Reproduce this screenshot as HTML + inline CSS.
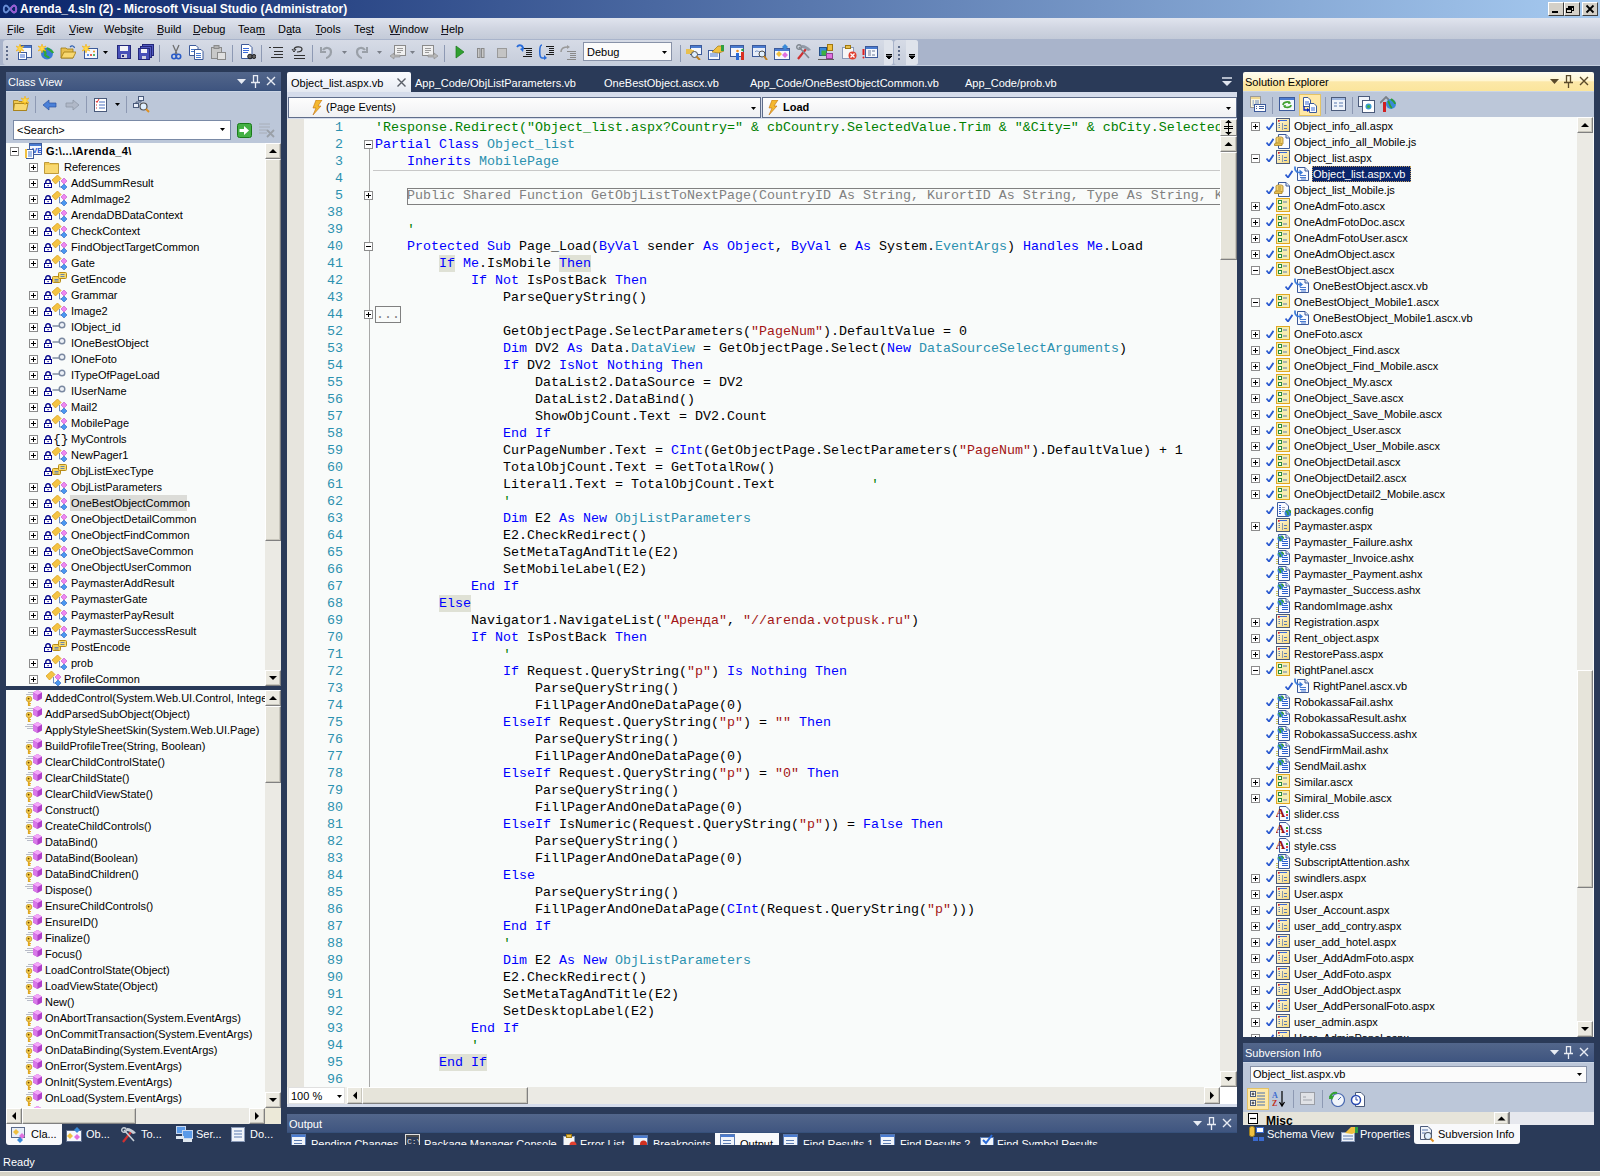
<!DOCTYPE html><html><head><meta charset="utf-8"><title>VS</title><style>
*{margin:0;padding:0;box-sizing:border-box}
html,body{width:1600px;height:1176px;overflow:hidden;background:#2a3a58;font-family:"Liberation Sans",sans-serif;font-size:11px;color:#000}
div,svg{position:absolute}
.t{white-space:pre;line-height:13px;font-size:11px}
.m{white-space:pre;font-family:"Liberation Mono",monospace;font-size:13.333px;line-height:17px}
.kw{color:#0000ff}.ty{color:#2b91af}.st{color:#a31515}.cm{color:#008000}.gr{color:#808080}
.sb{background:#ece9d8}
.btn{background:#e4e2d8;border-top:1px solid #fff;border-left:1px solid #fff;border-right:1px solid #716f64;border-bottom:1px solid #716f64}
</style></head><body><div style="left:0px;top:0px;width:1600px;height:18px;background:linear-gradient(90deg,#0a246a 0%,#a6caf0 100%)"></div>
<svg style="left:2px;top:3px" width="16" height="12" viewBox="0 0 16 12"><path d="M4 2.5 C1 2.5 1 9.5 4 9.5 C6 9.5 7 6 8 6 C9 6 10 9.5 12 9.5 C15 9.5 15 2.5 12 2.5 C10 2.5 9 6 8 6 C7 6 6 2.5 4 2.5Z" fill="none" stroke="#6a8fd8" stroke-width="1.8"/><path d="M8 6 C9 6 10 9.5 12 9.5 C15 9.5 15 2.5 12 2.5 C10 2.5 9 6 8 6" fill="none" stroke="#9b59d0" stroke-width="1.8"/></svg>
<div class="t" style="left:20px;top:2px;color:#fff;font-weight:bold;font-size:12px;line-height:14px">Arenda_4.sln (2) - Microsoft Visual Studio (Administrator)</div>
<div style="left:1548px;top:2px;width:16px;height:14px;background:#d4d0c8;border-top:1px solid #fff;border-left:1px solid #fff;border-right:1px solid #404040;border-bottom:1px solid #404040"></div>
<div style="left:1564px;top:2px;width:16px;height:14px;background:#d4d0c8;border-top:1px solid #fff;border-left:1px solid #fff;border-right:1px solid #404040;border-bottom:1px solid #404040"></div>
<div style="left:1582px;top:2px;width:16px;height:14px;background:#d4d0c8;border-top:1px solid #fff;border-left:1px solid #fff;border-right:1px solid #404040;border-bottom:1px solid #404040"></div>
<div style="left:1552px;top:11px;width:6px;height:2px;background:#000"></div>
<div style="left:1568px;top:6px;width:6px;height:5px;border:1px solid #000;border-top-width:2px"></div>
<div style="left:1566px;top:8px;width:6px;height:5px;border:1px solid #000;border-top-width:2px;background:#d4d0c8"></div>
<svg style="left:1585px;top:4px" width="10" height="10" viewBox="0 0 10 10"><path d="M1.5 1.5L8.5 8.5M8.5 1.5L1.5 8.5" stroke="#000" stroke-width="1.8"/></svg>
<div style="left:0px;top:18px;width:1600px;height:21px;background:linear-gradient(#e0e4ee,#d0d5e1 50%,#c3cad8)"></div>
<div class="t" style="left:7px;top:23px;color:#000">File</div>
<div class="t" style="left:36px;top:23px;color:#000">Edit</div>
<div class="t" style="left:69px;top:23px;color:#000">View</div>
<div class="t" style="left:104px;top:23px;color:#000">Website</div>
<div class="t" style="left:157px;top:23px;color:#000">Build</div>
<div class="t" style="left:193px;top:23px;color:#000">Debug</div>
<div class="t" style="left:238px;top:23px;color:#000">Team</div>
<div class="t" style="left:278px;top:23px;color:#000">Data</div>
<div class="t" style="left:315px;top:23px;color:#000">Tools</div>
<div class="t" style="left:354px;top:23px;color:#000">Test</div>
<div class="t" style="left:389px;top:23px;color:#000">Window</div>
<div class="t" style="left:441px;top:23px;color:#000">Help</div>
<div style="left:7px;top:34px;width:5px;height:1px;background:#1a1a2a"></div>
<div style="left:37px;top:34px;width:6px;height:1px;background:#1a1a2a"></div>
<div style="left:69px;top:34px;width:6px;height:1px;background:#1a1a2a"></div>
<div style="left:127px;top:34px;width:5px;height:1px;background:#1a1a2a"></div>
<div style="left:157px;top:34px;width:6px;height:1px;background:#1a1a2a"></div>
<div style="left:193px;top:34px;width:7px;height:1px;background:#1a1a2a"></div>
<div style="left:257px;top:34px;width:8px;height:1px;background:#1a1a2a"></div>
<div style="left:287px;top:34px;width:5px;height:1px;background:#1a1a2a"></div>
<div style="left:316px;top:34px;width:6px;height:1px;background:#1a1a2a"></div>
<div style="left:367px;top:34px;width:5px;height:1px;background:#1a1a2a"></div>
<div style="left:390px;top:34px;width:10px;height:1px;background:#1a1a2a"></div>
<div style="left:441px;top:34px;width:7px;height:1px;background:#1a1a2a"></div>
<div style="left:0px;top:39px;width:1600px;height:27px;background:#a9b4cb;border-bottom:1px solid #c4cedf"></div>
<div style="left:3px;top:40px;width:890px;height:25px;background:linear-gradient(#d6dbe6,#c6cddb);border-radius:3px"></div>
<div style="left:894px;top:40px;width:24px;height:25px;background:linear-gradient(#d6dbe6,#c6cddb);border-radius:3px"></div>
<div style="left:6px;top:46px;width:2px;height:2px;background:#5d6b89"></div>
<div style="left:6px;top:50px;width:2px;height:2px;background:#5d6b89"></div>
<div style="left:6px;top:54px;width:2px;height:2px;background:#5d6b89"></div>
<div style="left:6px;top:58px;width:2px;height:2px;background:#5d6b89"></div>
<svg style="left:16px;top:44px;" width="16" height="16" viewBox="0 0 16 16"><rect x="4.5" y="1.5" width="11" height="12" fill="#f4f7fc" stroke="#3c5a9a"/><rect x="5" y="2" width="10" height="2" fill="#4a7bd0"/><rect x="2.5" y="8.5" width="8" height="7" fill="#fff" stroke="#3c5a9a"/><path d="M4 11H9M4 13H9" stroke="#3c6ad0"/><g transform="translate(0,0)"><path d="M4 0L5 3L8 2L6 4.5L8 7L5 6L4 9L3 6L0 7L2 4.5L0 2L3 3Z" fill="#ffd84a" stroke="#f0a800" stroke-width="0.5"/></g></svg>
<svg style="left:38px;top:44px;" width="16" height="16" viewBox="0 0 16 16"><circle cx="9" cy="9.5" r="6" fill="#3a7bd5"/><path d="M5 6C7 7 8 9 7 11C8 13 10 12 11 14M9 4C11 6 14 6 15 9" stroke="#2ea83a" stroke-width="2.2" fill="none"/><path d="M4 0L5 3L8 2L6 4.5L8 7L5 6L4 9L3 6L0 7L2 4.5L0 2L3 3Z" fill="#ffd84a" stroke="#f0a800" stroke-width="0.5"/></svg>
<svg style="left:60px;top:44px;" width="16" height="16" viewBox="0 0 16 16"><path d="M1 4H6L7 5H13V14H1Z" fill="#e8c050" stroke="#a07810" stroke-width="0.8"/><path d="M1 14L4 8H16L13 14Z" fill="#f8d870" stroke="#a07810" stroke-width="0.8"/><path d="M10 3C12 1 14 2 14.5 4" stroke="#3060b0" fill="none" stroke-width="1.2"/></svg>
<svg style="left:82px;top:44px;" width="16" height="16" viewBox="0 0 16 16"><rect x="2.5" y="4.5" width="13" height="10" fill="#f6f8fc" stroke="#3c5a9a"/><circle cx="6" cy="11" r="1" fill="#3070e0"/><circle cx="9" cy="11" r="1" fill="#e03020"/><circle cx="12" cy="11" r="1" fill="#20a040"/><circle cx="12" cy="7.5" r="1" fill="#f09020"/><path d="M4 0L5 3L8 2L6 4.5L8 7L5 6L4 9L3 6L0 7L2 4.5L0 2L3 3Z" fill="#ffd84a" stroke="#f0a800" stroke-width="0.5"/></svg>
<svg style="left:103px;top:51px;" width="5" height="3" viewBox="0 0 5 3"><path d="M0 0H5L2.5 3Z" fill="#000"/></svg>
<svg style="left:116px;top:44px;" width="16" height="16" viewBox="0 0 16 16"><rect x="1.5" y="1.5" width="13" height="13" fill="#4850b8" stroke="#24287a"/><rect x="4" y="2" width="8" height="5" fill="#f4f4f8"/><rect x="5" y="10" width="6" height="4" fill="#d0d0e0"/><rect x="6" y="11" width="2" height="2" fill="#24287a"/></svg>
<svg style="left:138px;top:44px;" width="16" height="16" viewBox="0 0 16 16"><rect x="4.5" y="0.5" width="11" height="11" fill="#5058c0" stroke="#24287a"/><rect x="2.5" y="2.5" width="11" height="11" fill="#5058c0" stroke="#24287a"/><rect x="0.5" y="4.5" width="11" height="11" fill="#4850b8" stroke="#24287a"/><rect x="3" y="5" width="6" height="4" fill="#f4f4f8"/><rect x="4" y="12" width="4" height="3" fill="#d0d0e0"/></svg>
<div style="left:159px;top:45px;width:1px;height:17px;background:#8d99b3"></div>
<svg style="left:168px;top:44px;" width="16" height="16" viewBox="0 0 16 16"><path d="M5 1L9 10M11 1L7 10" stroke="#707070" stroke-width="1.3"/><circle cx="6" cy="12.5" r="2.2" fill="none" stroke="#2a5cc8" stroke-width="1.6"/><circle cx="10.5" cy="12.5" r="2.2" fill="none" stroke="#2a5cc8" stroke-width="1.6"/></svg>
<svg style="left:188px;top:44px;" width="16" height="16" viewBox="0 0 16 16"><path d="M1.5 1.5H8L10 3.5V11.5H1.5Z" fill="#fff" stroke="#3c5a9a"/><path d="M3 5.5H8M3 7.5H8" stroke="#4a7bd0"/><path d="M6.5 5.5H13L15 7.5V15.5H6.5Z" fill="#fff" stroke="#3c5a9a"/><path d="M8 9.5H13M8 11.5H13M8 13.5H13" stroke="#4a7bd0"/></svg>
<svg style="left:210px;top:44px;" width="16" height="16" viewBox="0 0 16 16"><rect x="1.5" y="3.5" width="10" height="11" fill="#c8c8c8" stroke="#8a8a8a"/><rect x="4" y="1.5" width="5" height="3" fill="#b0b0b0" stroke="#8a8a8a"/><rect x="7.5" y="8.5" width="8" height="7" fill="#e0e0e0" stroke="#8a8a8a"/></svg>
<div style="left:232px;top:45px;width:1px;height:17px;background:#8d99b3"></div>
<svg style="left:240px;top:44px;" width="16" height="16" viewBox="0 0 16 16"><path d="M1.5 0.5H9L12 3.5V14.5H1.5Z" fill="#fff" stroke="#3c5a9a"/><path d="M3 4.5H9M3 6.5H9M3 8.5H8" stroke="#3a6ad8"/><circle cx="10" cy="12.5" r="2.3" fill="#606060" stroke="#202020"/><circle cx="14" cy="12.5" r="2" fill="#606060" stroke="#202020"/></svg>
<div style="left:261px;top:45px;width:1px;height:17px;background:#8d99b3"></div>
<svg style="left:268px;top:44px;" width="16" height="16" viewBox="0 0 16 16"><path d="M1 3.5H3M5 3.5H15M6 7.5H15M6 10.5H15M3 13.5H15" stroke="#303030" stroke-width="1"/></svg>
<svg style="left:290px;top:44px;" width="16" height="16" viewBox="0 0 16 16"><path d="M4 6C4 2 12 2 12 5C12 8 8 8 7 8" fill="none" stroke="#303030" stroke-width="1.2"/><path d="M2 5L4 8L6 5" fill="none" stroke="#303030"/><path d="M4 11.5H15M4 14.5H15" stroke="#303030" stroke-width="1"/></svg>
<div style="left:312px;top:45px;width:1px;height:17px;background:#8d99b3"></div>
<svg style="left:320px;top:44px;" width="14" height="16" viewBox="0 0 14 16"><path d="M3 6C5 3 11 3 11 8C11 12 7 14 6 14" fill="none" stroke="#9aa0a8" stroke-width="2.2"/><path d="M1 3V8H6" fill="none" stroke="#9aa0a8" stroke-width="2"/></svg>
<svg style="left:342px;top:51px;" width="5" height="3" viewBox="0 0 5 3"><path d="M0 0H5L2.5 3Z" fill="#7a7f88"/></svg>
<svg style="left:354px;top:44px;" width="14" height="16" viewBox="0 0 14 16"><path d="M11 6C9 3 3 3 3 8C3 12 7 14 8 14" fill="none" stroke="#9aa0a8" stroke-width="2.2"/><path d="M13 3V8H8" fill="none" stroke="#9aa0a8" stroke-width="2"/></svg>
<svg style="left:377px;top:51px;" width="5" height="3" viewBox="0 0 5 3"><path d="M0 0H5L2.5 3Z" fill="#7a7f88"/></svg>
<svg style="left:389px;top:44px;" width="18" height="16" viewBox="0 0 18 16"><rect x="5.5" y="1.5" width="11" height="10" fill="#f0f0f0" stroke="#8a8a8a"/><path d="M8 4.5H14M8 6.5H14M8 8.5H12" stroke="#9a9a9a"/><path d="M1 12L5 9V11H11V13H5V15Z" fill="#b8b8b8" stroke="#8a8a8a" stroke-width="0.6"/></svg>
<svg style="left:410px;top:51px;" width="5" height="3" viewBox="0 0 5 3"><path d="M0 0H5L2.5 3Z" fill="#7a7f88"/></svg>
<svg style="left:421px;top:44px;" width="18" height="16" viewBox="0 0 18 16"><rect x="1.5" y="1.5" width="11" height="10" fill="#f0f0f0" stroke="#8a8a8a"/><path d="M4 4.5H10M4 6.5H10M4 8.5H8" stroke="#9a9a9a"/><path d="M17 12L13 9V11H7V13H13V15Z" fill="#b8b8b8" stroke="#8a8a8a" stroke-width="0.6"/></svg>
<div style="left:444px;top:45px;width:1px;height:17px;background:#8d99b3"></div>
<svg style="left:455px;top:44px;" width="10" height="16" viewBox="0 0 10 16"><path d="M1 2L9 8L1 14Z" fill="#30a030" stroke="#1a7a1a" stroke-width="0.7"/></svg>
<svg style="left:476px;top:44px;" width="10" height="16" viewBox="0 0 10 16"><rect x="1.5" y="4.5" width="2.5" height="9" fill="#c8c8c8" stroke="#8a8a8a"/><rect x="5.5" y="4.5" width="2.5" height="9" fill="#c8c8c8" stroke="#8a8a8a"/></svg>
<svg style="left:496px;top:44px;" width="12" height="16" viewBox="0 0 12 16"><rect x="1.5" y="4.5" width="9" height="9" fill="#c4c4c4" stroke="#9a9a9a"/></svg>
<svg style="left:516px;top:44px;" width="17" height="16" viewBox="0 0 17 16"><path d="M7 4.5H16M10 6.5H16M10 8.5H16M10 10.5H16M7 12.5H16" stroke="#1a1a1a" stroke-width="1"/><path d="M1 3C3 0 7 1 7 5" fill="none" stroke="#2a6cd8" stroke-width="1.8"/><path d="M4 5L7 8L8 3" fill="#2a6cd8"/></svg>
<svg style="left:538px;top:44px;" width="17" height="16" viewBox="0 0 17 16"><path d="M8 2.5H16M11 4.5H16M11 6.5H16M11 8.5H16M8 10.5H16" stroke="#1a1a1a" stroke-width="1"/><path d="M4 1C1 1 1 14 4 14H7" fill="none" stroke="#2a6cd8" stroke-width="1.6"/><path d="M6 11L9 14L6 16Z" fill="#2a6cd8"/></svg>
<svg style="left:560px;top:44px;" width="17" height="16" viewBox="0 0 17 16"><path d="M7 7.5H16M10 9.5H16M10 11.5H16M10 13.5H16M7 15.5H16" stroke="#8a8a8a" stroke-width="1"/><path d="M1 8C1 4 4 3 8 3" fill="none" stroke="#9a9a9a" stroke-width="1.6"/><path d="M7 1L10 3L7 5Z" fill="#9a9a9a"/></svg>
<div style="left:583px;top:42px;width:89px;height:19px;background:#fbfbfb;border:1px solid #8892a8"></div>
<div class="t" style="left:587px;top:46px;">Debug</div>
<svg style="left:662px;top:51px;" width="5" height="3" viewBox="0 0 5 3"><path d="M0 0H5L2.5 3Z" fill="#000"/></svg>
<div style="left:680px;top:45px;width:1px;height:17px;background:#8d99b3"></div>
<svg style="left:686px;top:44px;" width="16" height="16" viewBox="0 0 16 16"><rect x="4.5" y="1.5" width="11" height="9" fill="#f4f7fc" stroke="#3c5a9a"/><rect x="5" y="2" width="10" height="2" fill="#4a7bd0"/><path d="M0 5H5L6 6H8V10H0Z" fill="#e8c050"/><circle cx="8.5" cy="10.5" r="3" fill="#dfefff" stroke="#505050"/><path d="M10.5 12.5L14 16" stroke="#c08020" stroke-width="2"/></svg>
<svg style="left:708px;top:44px;" width="16" height="16" viewBox="0 0 16 16"><rect x="0.5" y="6.5" width="11" height="9" fill="#f6f8fc" stroke="#3c5a9a"/><path d="M2 10H10M2 12H10" stroke="#4a7bd0"/><path d="M4 8L10 2H16V7L11 9Z" fill="#f0c040" stroke="#a07810" stroke-width="0.7"/><rect x="13" y="1" width="3" height="6" fill="#30a040"/></svg>
<svg style="left:730px;top:44px;" width="16" height="16" viewBox="0 0 16 16"><rect x="0.5" y="1.5" width="13" height="11" fill="#f6f8fc" stroke="#3c5a9a"/><rect x="1" y="2" width="12" height="2" fill="#4a7bd0"/><rect x="6" y="9" width="3" height="7" fill="#2a6cd8"/><rect x="11" y="8" width="3" height="8" fill="#d83020"/><circle cx="7.5" cy="7" r="1.3" fill="#f09020"/><circle cx="12.5" cy="6" r="1.3" fill="#30a040"/></svg>
<svg style="left:752px;top:44px;" width="16" height="16" viewBox="0 0 16 16"><rect x="0.5" y="1.5" width="13" height="11" fill="#e8eef8" stroke="#3c5a9a"/><rect x="1" y="2" width="12" height="2" fill="#4a7bd0"/><path d="M3 8C5 5 8 10 11 7" stroke="#6a8ac0" fill="none"/><circle cx="10" cy="10" r="3" fill="#dfefff" stroke="#505050"/><path d="M12 12L15 16" stroke="#c08020" stroke-width="2"/></svg>
<svg style="left:774px;top:44px;" width="16" height="16" viewBox="0 0 16 16"><rect x="0.5" y="4.5" width="15" height="11" fill="#f6f8fc" stroke="#3c5a9a"/><rect x="1" y="5" width="14" height="2" fill="#4a7bd0"/><path d="M5 7L8 10L5 13L2 10Z" fill="#f0c040"/><path d="M11 8L14 11L11 14L8 11Z" fill="#e070e0"/><path d="M11 0L14 3L11 6L8 3Z" fill="#3a8ad8"/></svg>
<svg style="left:796px;top:44px;" width="16" height="16" viewBox="0 0 16 16"><path d="M2 15L10 5" stroke="#d03030" stroke-width="2.2"/><path d="M3 3L13 14" stroke="#808890" stroke-width="1.6"/><path d="M6 1C9 1 13 3 15 6L12 7C10 5 8 4 6 4Z" fill="#909aa8"/><circle cx="3" cy="3" r="2.3" fill="none" stroke="#808890" stroke-width="1.4"/></svg>
<svg style="left:818px;top:44px;" width="16" height="16" viewBox="0 0 16 16"><rect x="1.5" y="3.5" width="7" height="8" fill="#3a8ad8" stroke="#24508a"/><rect x="3.5" y="6.5" width="5" height="5" fill="#40b040"/><rect x="9.5" y="0.5" width="5" height="6" fill="#f0c040" stroke="#a07810"/><rect x="8.5" y="9.5" width="6" height="5" fill="#e070e0" stroke="#904090"/><rect x="0" y="15" width="16" height="1" fill="#606060"/></svg>
<svg style="left:841px;top:44px;" width="16" height="16" viewBox="0 0 16 16"><rect x="1.5" y="3.5" width="11" height="11" fill="#f6f6f6" stroke="#8a9ab8"/><rect x="4.5" y="1.5" width="5" height="3" fill="#e8c050" stroke="#a07810"/><circle cx="11.5" cy="11.5" r="4" fill="#e04030"/><path d="M9.5 9.5L13.5 13.5M13.5 9.5L9.5 13.5" stroke="#fff" stroke-width="1.3"/></svg>
<svg style="left:862px;top:44px;" width="16" height="16" viewBox="0 0 16 16"><rect x="3.5" y="2.5" width="12" height="11" fill="#f6f8fc" stroke="#3c5a9a"/><rect x="4" y="3" width="11" height="2" fill="#4a7bd0"/><path d="M6 7H9M10 7H13M6 9H9M6 11H9M10 11H13" stroke="#6a7a9a"/><path d="M1.5 5V11" stroke="#e02020" stroke-width="2"/><circle cx="1.5" cy="13.5" r="1" fill="#e02020"/></svg>
<div style="left:884px;top:40px;width:9px;height:25px;background:#dfe3eb;border-radius:0 3px 3px 0"></div>
<svg style="left:886px;top:54px;" width="6" height="5" viewBox="0 0 6 5"><path d="M0 0.5H6M0 2H6L3 5Z" stroke="#000" stroke-width="1" fill="#000"/></svg>
<div style="left:898px;top:46px;width:2px;height:2px;background:#5d6b89"></div>
<div style="left:898px;top:50px;width:2px;height:2px;background:#5d6b89"></div>
<div style="left:898px;top:54px;width:2px;height:2px;background:#5d6b89"></div>
<div style="left:898px;top:58px;width:2px;height:2px;background:#5d6b89"></div>
<div style="left:906px;top:40px;width:12px;height:25px;background:#dfe3eb;border-radius:0 3px 3px 0"></div>
<svg style="left:909px;top:54px;" width="6" height="5" viewBox="0 0 6 5"><path d="M0 0.5H6M0 2H6L3 5Z" stroke="#000" stroke-width="1" fill="#000"/></svg>
<div style="left:6px;top:72px;width:275px;height:19px;background:linear-gradient(#52668b,#475c84 60%,#3f5580);border-bottom:1px solid #36507a"></div>
<div class="t" style="left:8px;top:76px;color:#fff">Class View</div>
<svg style="left:237px;top:79px;" width="9" height="5" viewBox="0 0 9 5"><path d="M0 0H9L4.5 5Z" fill="#e8ecf4"/></svg>
<svg style="left:251px;top:75px;" width="9" height="13" viewBox="0 0 9 13"><path d="M2.5 0.5H6.5V7.5H2.5Z M0 7.5H9 M4.5 8V13" fill="none" stroke="#e8ecf4" stroke-width="1.3"/></svg>
<svg style="left:266px;top:76px;" width="10" height="10" viewBox="0 0 10 10"><path d="M1 1L9 9M9 1L1 9" stroke="#e8ecf4" stroke-width="1.4"/></svg>
<div style="left:6px;top:91px;width:275px;height:52px;background:#bcc7d9;border-top:1px solid #cbd5e5"></div>
<svg style="left:13px;top:96px;" width="16" height="16" viewBox="0 0 16 16"><path d="M0.5 4.5H5L6 5.5H13.5V14.5H0.5Z" fill="#f0c850" stroke="#a07810" stroke-width="0.8"/><path d="M0.5 14.5L1.5 7.5H15L13.5 14.5Z" fill="#f8d870" stroke="#a07810" stroke-width="0.8"/><g transform="translate(8,0)"><path d="M4 0L5 3L8 2L6 4.5L8 7L5 6L4 9L3 6L0 7L2 4.5L0 2L3 3Z" fill="#ffd84a" stroke="#f0a800" stroke-width="0.5"/></g></svg>
<div style="left:35px;top:96px;width:1px;height:17px;background:#8d99b3"></div>
<svg style="left:42px;top:99px;" width="16" height="12" viewBox="0 0 16 12"><path d="M1 6L7 1V4H14V8H7V11Z" fill="#4a80d8" stroke="#2a50a0" stroke-width="0.7"/></svg>
<svg style="left:65px;top:99px;" width="16" height="12" viewBox="0 0 16 12"><path d="M14 6L8 1V4H1V8H8V11Z" fill="#b0b8c8" stroke="#8a92a2" stroke-width="0.7"/></svg>
<div style="left:86px;top:96px;width:1px;height:17px;background:#8d99b3"></div>
<svg style="left:94px;top:97px;" width="14" height="16" viewBox="0 0 14 16"><rect x="0.5" y="1.5" width="12" height="13" fill="#fff" stroke="#4a5a7a"/><path d="M5 5H11M5 8H11M5 11H11" stroke="#4a70c0"/><path d="M2 4L3 5.5L5 2M2 8H3M2 11H3" stroke="#e03030" fill="none"/></svg>
<svg style="left:115px;top:103px;" width="5" height="3" viewBox="0 0 5 3"><path d="M0 0H5L2.5 3Z" fill="#000"/></svg>
<div style="left:126px;top:96px;width:1px;height:17px;background:#8d99b3"></div>
<svg style="left:133px;top:96px;" width="17" height="17" viewBox="0 0 17 17"><rect x="5.5" y="0.5" width="5" height="4" fill="#e8eef8" stroke="#4a5a7a"/><rect x="0.5" y="7.5" width="5" height="4" fill="#e8eef8" stroke="#4a5a7a"/><path d="M8 4.5V6H3V7.5" stroke="#4a5a7a" fill="none"/><circle cx="10.5" cy="10.5" r="3.5" fill="#dfefff" stroke="#505050" stroke-width="1.2"/><path d="M13 13L16 16" stroke="#e09020" stroke-width="2"/></svg>
<div style="left:13px;top:120px;width:218px;height:20px;background:#fff;border:1px solid #7a8aa6"></div>
<div class="t" style="left:17px;top:124px;">&lt;Search&gt;</div>
<svg style="left:220px;top:128px;" width="5" height="3" viewBox="0 0 5 3"><path d="M0 0H5L2.5 3Z" fill="#000"/></svg>
<svg style="left:237px;top:123px;" width="15" height="15" viewBox="0 0 15 15"><rect x="0.5" y="0.5" width="14" height="14" rx="2" fill="#44b044" stroke="#1a7a1a"/><path d="M2.5 6H7V3L12 7.5L7 12V9H2.5Z" fill="#fff"/></svg>
<svg style="left:258px;top:121px;" width="18" height="18" viewBox="0 0 18 18"><path d="M1 3H12M1 6H12M1 9H9M1 12H9" stroke="#a8aeb8" stroke-width="1"/><path d="M9 9L16 16M16 9L9 16" stroke="#9aa0a8" stroke-width="1.8"/></svg>
<div style="left:6px;top:143px;width:275px;height:543px;background:#f9fbfa"></div>
<svg style="left:10px;top:147px;" width="9" height="9" viewBox="0 0 9 9"><rect x="0.5" y="0.5" width="8" height="8" fill="#fff" stroke="#8c8c8c"/><path d="M2 4.5H7" stroke="#000"/></svg>
<svg style="left:25px;top:143px;" width="17" height="16" viewBox="0 0 17 16"><rect x="4.5" y="0.5" width="12" height="11" fill="#f4f7fc" stroke="#3c5a9a"/><rect x="5" y="1" width="11" height="2" fill="#4a7bd0"/><text x="7" y="10" font-family="Liberation Sans" font-size="8" font-weight="bold" fill="#2a5ad0">VB</text><rect x="1.5" y="6.5" width="7" height="9" fill="#fff" stroke="#3c5a9a"/><path d="M3 9H7M3 11H7M3 13H7" stroke="#4a7bd0"/><rect x="0" y="6" width="2" height="9" fill="#f0c040"/></svg>
<div class="t" style="left:46px;top:145px;font-weight:bold;letter-spacing:0.3px">G:\...\Arenda_4\</div>
<svg style="left:29px;top:163px;" width="9" height="9" viewBox="0 0 9 9"><rect x="0.5" y="0.5" width="8" height="8" fill="#fff" stroke="#8c8c8c"/><path d="M2 4.5H7" stroke="#000"/><path d="M4.5 2V7" stroke="#000"/></svg>
<svg style="left:44px;top:160px;" width="16" height="14" viewBox="0 0 16 14"><path d="M0.5 2.5H5L6 3.5H14.5V13.5H0.5Z" fill="#f0c850" stroke="#b08820" stroke-width="0.8"/><rect x="1" y="5" width="13" height="8" fill="#f8d870"/></svg>
<div class="t" style="left:64px;top:161px;">References</div>
<svg style="left:29px;top:179px;" width="9" height="9" viewBox="0 0 9 9"><rect x="0.5" y="0.5" width="8" height="8" fill="#fff" stroke="#8c8c8c"/><path d="M2 4.5H7" stroke="#000"/><path d="M4.5 2V7" stroke="#000"/></svg>
<svg style="left:44px;top:179px;" width="8" height="9" viewBox="0 0 8 9"><path d="M1.8 4.5V2.8C1.8 0 6.2 0 6.2 2.8V4.5" fill="none" stroke="#00008a" stroke-width="1.4"/><rect x="0.5" y="4.5" width="7" height="4" fill="#fff" stroke="#00008a"/><rect x="3.5" y="6" width="1.2" height="1.2" fill="#00008a"/></svg>
<svg style="left:52px;top:175px;" width="16" height="16" viewBox="0 0 16 16"><path d="M7.5 6V12H10" fill="none" stroke="#5a80c0" stroke-width="0.9"/><path d="M0 5L5.5 0L9 3.5L3.5 9Z" fill="#f4c444" stroke="#d89a10" stroke-width="0.7"/><path d="M12 3L15 6L12 9L9 6Z" fill="#ee88f0" stroke="#c050c8" stroke-width="0.6"/><path d="M12 9L15 12L12 15L9 12Z" fill="#4a98f0" stroke="#2a60c0" stroke-width="0.6"/></svg>
<div class="t" style="left:71px;top:177px;">AddSummResult</div>
<svg style="left:29px;top:195px;" width="9" height="9" viewBox="0 0 9 9"><rect x="0.5" y="0.5" width="8" height="8" fill="#fff" stroke="#8c8c8c"/><path d="M2 4.5H7" stroke="#000"/><path d="M4.5 2V7" stroke="#000"/></svg>
<svg style="left:44px;top:195px;" width="8" height="9" viewBox="0 0 8 9"><path d="M1.8 4.5V2.8C1.8 0 6.2 0 6.2 2.8V4.5" fill="none" stroke="#00008a" stroke-width="1.4"/><rect x="0.5" y="4.5" width="7" height="4" fill="#fff" stroke="#00008a"/><rect x="3.5" y="6" width="1.2" height="1.2" fill="#00008a"/></svg>
<svg style="left:52px;top:191px;" width="16" height="16" viewBox="0 0 16 16"><path d="M7.5 6V12H10" fill="none" stroke="#5a80c0" stroke-width="0.9"/><path d="M0 5L5.5 0L9 3.5L3.5 9Z" fill="#f4c444" stroke="#d89a10" stroke-width="0.7"/><path d="M12 3L15 6L12 9L9 6Z" fill="#ee88f0" stroke="#c050c8" stroke-width="0.6"/><path d="M12 9L15 12L12 15L9 12Z" fill="#4a98f0" stroke="#2a60c0" stroke-width="0.6"/></svg>
<div class="t" style="left:71px;top:193px;">AdmImage2</div>
<svg style="left:29px;top:211px;" width="9" height="9" viewBox="0 0 9 9"><rect x="0.5" y="0.5" width="8" height="8" fill="#fff" stroke="#8c8c8c"/><path d="M2 4.5H7" stroke="#000"/><path d="M4.5 2V7" stroke="#000"/></svg>
<svg style="left:44px;top:211px;" width="8" height="9" viewBox="0 0 8 9"><path d="M1.8 4.5V2.8C1.8 0 6.2 0 6.2 2.8V4.5" fill="none" stroke="#00008a" stroke-width="1.4"/><rect x="0.5" y="4.5" width="7" height="4" fill="#fff" stroke="#00008a"/><rect x="3.5" y="6" width="1.2" height="1.2" fill="#00008a"/></svg>
<svg style="left:52px;top:207px;" width="16" height="16" viewBox="0 0 16 16"><path d="M7.5 6V12H10" fill="none" stroke="#5a80c0" stroke-width="0.9"/><path d="M0 5L5.5 0L9 3.5L3.5 9Z" fill="#f4c444" stroke="#d89a10" stroke-width="0.7"/><path d="M12 3L15 6L12 9L9 6Z" fill="#ee88f0" stroke="#c050c8" stroke-width="0.6"/><path d="M12 9L15 12L12 15L9 12Z" fill="#4a98f0" stroke="#2a60c0" stroke-width="0.6"/></svg>
<div class="t" style="left:71px;top:209px;">ArendaDBDataContext</div>
<svg style="left:29px;top:227px;" width="9" height="9" viewBox="0 0 9 9"><rect x="0.5" y="0.5" width="8" height="8" fill="#fff" stroke="#8c8c8c"/><path d="M2 4.5H7" stroke="#000"/><path d="M4.5 2V7" stroke="#000"/></svg>
<svg style="left:44px;top:227px;" width="8" height="9" viewBox="0 0 8 9"><path d="M1.8 4.5V2.8C1.8 0 6.2 0 6.2 2.8V4.5" fill="none" stroke="#00008a" stroke-width="1.4"/><rect x="0.5" y="4.5" width="7" height="4" fill="#fff" stroke="#00008a"/><rect x="3.5" y="6" width="1.2" height="1.2" fill="#00008a"/></svg>
<svg style="left:52px;top:223px;" width="16" height="16" viewBox="0 0 16 16"><path d="M7.5 6V12H10" fill="none" stroke="#5a80c0" stroke-width="0.9"/><path d="M0 5L5.5 0L9 3.5L3.5 9Z" fill="#f4c444" stroke="#d89a10" stroke-width="0.7"/><path d="M12 3L15 6L12 9L9 6Z" fill="#ee88f0" stroke="#c050c8" stroke-width="0.6"/><path d="M12 9L15 12L12 15L9 12Z" fill="#4a98f0" stroke="#2a60c0" stroke-width="0.6"/></svg>
<div class="t" style="left:71px;top:225px;">CheckContext</div>
<svg style="left:29px;top:243px;" width="9" height="9" viewBox="0 0 9 9"><rect x="0.5" y="0.5" width="8" height="8" fill="#fff" stroke="#8c8c8c"/><path d="M2 4.5H7" stroke="#000"/><path d="M4.5 2V7" stroke="#000"/></svg>
<svg style="left:44px;top:243px;" width="8" height="9" viewBox="0 0 8 9"><path d="M1.8 4.5V2.8C1.8 0 6.2 0 6.2 2.8V4.5" fill="none" stroke="#00008a" stroke-width="1.4"/><rect x="0.5" y="4.5" width="7" height="4" fill="#fff" stroke="#00008a"/><rect x="3.5" y="6" width="1.2" height="1.2" fill="#00008a"/></svg>
<svg style="left:52px;top:239px;" width="16" height="16" viewBox="0 0 16 16"><path d="M7.5 6V12H10" fill="none" stroke="#5a80c0" stroke-width="0.9"/><path d="M0 5L5.5 0L9 3.5L3.5 9Z" fill="#f4c444" stroke="#d89a10" stroke-width="0.7"/><path d="M12 3L15 6L12 9L9 6Z" fill="#ee88f0" stroke="#c050c8" stroke-width="0.6"/><path d="M12 9L15 12L12 15L9 12Z" fill="#4a98f0" stroke="#2a60c0" stroke-width="0.6"/></svg>
<div class="t" style="left:71px;top:241px;">FindObjectTargetCommon</div>
<svg style="left:29px;top:259px;" width="9" height="9" viewBox="0 0 9 9"><rect x="0.5" y="0.5" width="8" height="8" fill="#fff" stroke="#8c8c8c"/><path d="M2 4.5H7" stroke="#000"/><path d="M4.5 2V7" stroke="#000"/></svg>
<svg style="left:44px;top:259px;" width="8" height="9" viewBox="0 0 8 9"><path d="M1.8 4.5V2.8C1.8 0 6.2 0 6.2 2.8V4.5" fill="none" stroke="#00008a" stroke-width="1.4"/><rect x="0.5" y="4.5" width="7" height="4" fill="#fff" stroke="#00008a"/><rect x="3.5" y="6" width="1.2" height="1.2" fill="#00008a"/></svg>
<svg style="left:52px;top:255px;" width="16" height="16" viewBox="0 0 16 16"><path d="M7.5 6V12H10" fill="none" stroke="#5a80c0" stroke-width="0.9"/><path d="M0 5L5.5 0L9 3.5L3.5 9Z" fill="#f4c444" stroke="#d89a10" stroke-width="0.7"/><path d="M12 3L15 6L12 9L9 6Z" fill="#ee88f0" stroke="#c050c8" stroke-width="0.6"/><path d="M12 9L15 12L12 15L9 12Z" fill="#4a98f0" stroke="#2a60c0" stroke-width="0.6"/></svg>
<div class="t" style="left:71px;top:257px;">Gate</div>
<svg style="left:44px;top:275px;" width="8" height="9" viewBox="0 0 8 9"><path d="M1.8 4.5V2.8C1.8 0 6.2 0 6.2 2.8V4.5" fill="none" stroke="#00008a" stroke-width="1.4"/><rect x="0.5" y="4.5" width="7" height="4" fill="#fff" stroke="#00008a"/><rect x="3.5" y="6" width="1.2" height="1.2" fill="#00008a"/></svg>
<svg style="left:52px;top:270px;" width="16" height="14" viewBox="0 0 16 14"><rect x="0.5" y="6.5" width="8" height="6" rx="1" fill="#f6d460" stroke="#b88c18"/><rect x="6.5" y="2.5" width="8" height="6" rx="1" fill="#f8dc70" stroke="#b88c18"/><path d="M2.5 9.5H6.5M2.5 11H6.5M8.5 4.5H12.5M8.5 6.5H12.5" stroke="#5a7ab0" stroke-width="0.9"/></svg>
<div class="t" style="left:71px;top:273px;">GetEncode</div>
<svg style="left:29px;top:291px;" width="9" height="9" viewBox="0 0 9 9"><rect x="0.5" y="0.5" width="8" height="8" fill="#fff" stroke="#8c8c8c"/><path d="M2 4.5H7" stroke="#000"/><path d="M4.5 2V7" stroke="#000"/></svg>
<svg style="left:44px;top:291px;" width="8" height="9" viewBox="0 0 8 9"><path d="M1.8 4.5V2.8C1.8 0 6.2 0 6.2 2.8V4.5" fill="none" stroke="#00008a" stroke-width="1.4"/><rect x="0.5" y="4.5" width="7" height="4" fill="#fff" stroke="#00008a"/><rect x="3.5" y="6" width="1.2" height="1.2" fill="#00008a"/></svg>
<svg style="left:52px;top:287px;" width="16" height="16" viewBox="0 0 16 16"><path d="M7.5 6V12H10" fill="none" stroke="#5a80c0" stroke-width="0.9"/><path d="M0 5L5.5 0L9 3.5L3.5 9Z" fill="#f4c444" stroke="#d89a10" stroke-width="0.7"/><path d="M12 3L15 6L12 9L9 6Z" fill="#ee88f0" stroke="#c050c8" stroke-width="0.6"/><path d="M12 9L15 12L12 15L9 12Z" fill="#4a98f0" stroke="#2a60c0" stroke-width="0.6"/></svg>
<div class="t" style="left:71px;top:289px;">Grammar</div>
<svg style="left:29px;top:307px;" width="9" height="9" viewBox="0 0 9 9"><rect x="0.5" y="0.5" width="8" height="8" fill="#fff" stroke="#8c8c8c"/><path d="M2 4.5H7" stroke="#000"/><path d="M4.5 2V7" stroke="#000"/></svg>
<svg style="left:44px;top:307px;" width="8" height="9" viewBox="0 0 8 9"><path d="M1.8 4.5V2.8C1.8 0 6.2 0 6.2 2.8V4.5" fill="none" stroke="#00008a" stroke-width="1.4"/><rect x="0.5" y="4.5" width="7" height="4" fill="#fff" stroke="#00008a"/><rect x="3.5" y="6" width="1.2" height="1.2" fill="#00008a"/></svg>
<svg style="left:52px;top:303px;" width="16" height="16" viewBox="0 0 16 16"><path d="M7.5 6V12H10" fill="none" stroke="#5a80c0" stroke-width="0.9"/><path d="M0 5L5.5 0L9 3.5L3.5 9Z" fill="#f4c444" stroke="#d89a10" stroke-width="0.7"/><path d="M12 3L15 6L12 9L9 6Z" fill="#ee88f0" stroke="#c050c8" stroke-width="0.6"/><path d="M12 9L15 12L12 15L9 12Z" fill="#4a98f0" stroke="#2a60c0" stroke-width="0.6"/></svg>
<div class="t" style="left:71px;top:305px;">Image2</div>
<svg style="left:29px;top:323px;" width="9" height="9" viewBox="0 0 9 9"><rect x="0.5" y="0.5" width="8" height="8" fill="#fff" stroke="#8c8c8c"/><path d="M2 4.5H7" stroke="#000"/><path d="M4.5 2V7" stroke="#000"/></svg>
<svg style="left:44px;top:323px;" width="8" height="9" viewBox="0 0 8 9"><path d="M1.8 4.5V2.8C1.8 0 6.2 0 6.2 2.8V4.5" fill="none" stroke="#00008a" stroke-width="1.4"/><rect x="0.5" y="4.5" width="7" height="4" fill="#fff" stroke="#00008a"/><rect x="3.5" y="6" width="1.2" height="1.2" fill="#00008a"/></svg>
<svg style="left:52px;top:320px;" width="14" height="10" viewBox="0 0 14 10"><path d="M0.5 6H7" stroke="#8a96aa" stroke-width="1.6"/><circle cx="10" cy="5" r="2.8" fill="#eef2f8" stroke="#7a88a0" stroke-width="1.4"/></svg>
<div class="t" style="left:71px;top:321px;">IObject_id</div>
<svg style="left:29px;top:339px;" width="9" height="9" viewBox="0 0 9 9"><rect x="0.5" y="0.5" width="8" height="8" fill="#fff" stroke="#8c8c8c"/><path d="M2 4.5H7" stroke="#000"/><path d="M4.5 2V7" stroke="#000"/></svg>
<svg style="left:44px;top:339px;" width="8" height="9" viewBox="0 0 8 9"><path d="M1.8 4.5V2.8C1.8 0 6.2 0 6.2 2.8V4.5" fill="none" stroke="#00008a" stroke-width="1.4"/><rect x="0.5" y="4.5" width="7" height="4" fill="#fff" stroke="#00008a"/><rect x="3.5" y="6" width="1.2" height="1.2" fill="#00008a"/></svg>
<svg style="left:52px;top:336px;" width="14" height="10" viewBox="0 0 14 10"><path d="M0.5 6H7" stroke="#8a96aa" stroke-width="1.6"/><circle cx="10" cy="5" r="2.8" fill="#eef2f8" stroke="#7a88a0" stroke-width="1.4"/></svg>
<div class="t" style="left:71px;top:337px;">IOneBestObject</div>
<svg style="left:29px;top:355px;" width="9" height="9" viewBox="0 0 9 9"><rect x="0.5" y="0.5" width="8" height="8" fill="#fff" stroke="#8c8c8c"/><path d="M2 4.5H7" stroke="#000"/><path d="M4.5 2V7" stroke="#000"/></svg>
<svg style="left:44px;top:355px;" width="8" height="9" viewBox="0 0 8 9"><path d="M1.8 4.5V2.8C1.8 0 6.2 0 6.2 2.8V4.5" fill="none" stroke="#00008a" stroke-width="1.4"/><rect x="0.5" y="4.5" width="7" height="4" fill="#fff" stroke="#00008a"/><rect x="3.5" y="6" width="1.2" height="1.2" fill="#00008a"/></svg>
<svg style="left:52px;top:352px;" width="14" height="10" viewBox="0 0 14 10"><path d="M0.5 6H7" stroke="#8a96aa" stroke-width="1.6"/><circle cx="10" cy="5" r="2.8" fill="#eef2f8" stroke="#7a88a0" stroke-width="1.4"/></svg>
<div class="t" style="left:71px;top:353px;">IOneFoto</div>
<svg style="left:29px;top:371px;" width="9" height="9" viewBox="0 0 9 9"><rect x="0.5" y="0.5" width="8" height="8" fill="#fff" stroke="#8c8c8c"/><path d="M2 4.5H7" stroke="#000"/><path d="M4.5 2V7" stroke="#000"/></svg>
<svg style="left:44px;top:371px;" width="8" height="9" viewBox="0 0 8 9"><path d="M1.8 4.5V2.8C1.8 0 6.2 0 6.2 2.8V4.5" fill="none" stroke="#00008a" stroke-width="1.4"/><rect x="0.5" y="4.5" width="7" height="4" fill="#fff" stroke="#00008a"/><rect x="3.5" y="6" width="1.2" height="1.2" fill="#00008a"/></svg>
<svg style="left:52px;top:368px;" width="14" height="10" viewBox="0 0 14 10"><path d="M0.5 6H7" stroke="#8a96aa" stroke-width="1.6"/><circle cx="10" cy="5" r="2.8" fill="#eef2f8" stroke="#7a88a0" stroke-width="1.4"/></svg>
<div class="t" style="left:71px;top:369px;">ITypeOfPageLoad</div>
<svg style="left:29px;top:387px;" width="9" height="9" viewBox="0 0 9 9"><rect x="0.5" y="0.5" width="8" height="8" fill="#fff" stroke="#8c8c8c"/><path d="M2 4.5H7" stroke="#000"/><path d="M4.5 2V7" stroke="#000"/></svg>
<svg style="left:44px;top:387px;" width="8" height="9" viewBox="0 0 8 9"><path d="M1.8 4.5V2.8C1.8 0 6.2 0 6.2 2.8V4.5" fill="none" stroke="#00008a" stroke-width="1.4"/><rect x="0.5" y="4.5" width="7" height="4" fill="#fff" stroke="#00008a"/><rect x="3.5" y="6" width="1.2" height="1.2" fill="#00008a"/></svg>
<svg style="left:52px;top:384px;" width="14" height="10" viewBox="0 0 14 10"><path d="M0.5 6H7" stroke="#8a96aa" stroke-width="1.6"/><circle cx="10" cy="5" r="2.8" fill="#eef2f8" stroke="#7a88a0" stroke-width="1.4"/></svg>
<div class="t" style="left:71px;top:385px;">IUserName</div>
<svg style="left:29px;top:403px;" width="9" height="9" viewBox="0 0 9 9"><rect x="0.5" y="0.5" width="8" height="8" fill="#fff" stroke="#8c8c8c"/><path d="M2 4.5H7" stroke="#000"/><path d="M4.5 2V7" stroke="#000"/></svg>
<svg style="left:44px;top:403px;" width="8" height="9" viewBox="0 0 8 9"><path d="M1.8 4.5V2.8C1.8 0 6.2 0 6.2 2.8V4.5" fill="none" stroke="#00008a" stroke-width="1.4"/><rect x="0.5" y="4.5" width="7" height="4" fill="#fff" stroke="#00008a"/><rect x="3.5" y="6" width="1.2" height="1.2" fill="#00008a"/></svg>
<svg style="left:52px;top:399px;" width="16" height="16" viewBox="0 0 16 16"><path d="M7.5 6V12H10" fill="none" stroke="#5a80c0" stroke-width="0.9"/><path d="M0 5L5.5 0L9 3.5L3.5 9Z" fill="#f4c444" stroke="#d89a10" stroke-width="0.7"/><path d="M12 3L15 6L12 9L9 6Z" fill="#ee88f0" stroke="#c050c8" stroke-width="0.6"/><path d="M12 9L15 12L12 15L9 12Z" fill="#4a98f0" stroke="#2a60c0" stroke-width="0.6"/></svg>
<div class="t" style="left:71px;top:401px;">Mail2</div>
<svg style="left:29px;top:419px;" width="9" height="9" viewBox="0 0 9 9"><rect x="0.5" y="0.5" width="8" height="8" fill="#fff" stroke="#8c8c8c"/><path d="M2 4.5H7" stroke="#000"/><path d="M4.5 2V7" stroke="#000"/></svg>
<svg style="left:44px;top:419px;" width="8" height="9" viewBox="0 0 8 9"><path d="M1.8 4.5V2.8C1.8 0 6.2 0 6.2 2.8V4.5" fill="none" stroke="#00008a" stroke-width="1.4"/><rect x="0.5" y="4.5" width="7" height="4" fill="#fff" stroke="#00008a"/><rect x="3.5" y="6" width="1.2" height="1.2" fill="#00008a"/></svg>
<svg style="left:52px;top:415px;" width="16" height="16" viewBox="0 0 16 16"><path d="M7.5 6V12H10" fill="none" stroke="#5a80c0" stroke-width="0.9"/><path d="M0 5L5.5 0L9 3.5L3.5 9Z" fill="#f4c444" stroke="#d89a10" stroke-width="0.7"/><path d="M12 3L15 6L12 9L9 6Z" fill="#ee88f0" stroke="#c050c8" stroke-width="0.6"/><path d="M12 9L15 12L12 15L9 12Z" fill="#4a98f0" stroke="#2a60c0" stroke-width="0.6"/></svg>
<div class="t" style="left:71px;top:417px;">MobilePage</div>
<svg style="left:29px;top:435px;" width="9" height="9" viewBox="0 0 9 9"><rect x="0.5" y="0.5" width="8" height="8" fill="#fff" stroke="#8c8c8c"/><path d="M2 4.5H7" stroke="#000"/><path d="M4.5 2V7" stroke="#000"/></svg>
<svg style="left:44px;top:435px;" width="8" height="9" viewBox="0 0 8 9"><path d="M1.8 4.5V2.8C1.8 0 6.2 0 6.2 2.8V4.5" fill="none" stroke="#00008a" stroke-width="1.4"/><rect x="0.5" y="4.5" width="7" height="4" fill="#fff" stroke="#00008a"/><rect x="3.5" y="6" width="1.2" height="1.2" fill="#00008a"/></svg>
<svg style="left:52px;top:431px;" width="16" height="16" viewBox="0 0 16 16"><text x="1" y="12" font-family="Liberation Mono" font-size="13" fill="#101010">{}</text></svg>
<div class="t" style="left:71px;top:433px;">MyControls</div>
<svg style="left:29px;top:451px;" width="9" height="9" viewBox="0 0 9 9"><rect x="0.5" y="0.5" width="8" height="8" fill="#fff" stroke="#8c8c8c"/><path d="M2 4.5H7" stroke="#000"/><path d="M4.5 2V7" stroke="#000"/></svg>
<svg style="left:44px;top:451px;" width="8" height="9" viewBox="0 0 8 9"><path d="M1.8 4.5V2.8C1.8 0 6.2 0 6.2 2.8V4.5" fill="none" stroke="#00008a" stroke-width="1.4"/><rect x="0.5" y="4.5" width="7" height="4" fill="#fff" stroke="#00008a"/><rect x="3.5" y="6" width="1.2" height="1.2" fill="#00008a"/></svg>
<svg style="left:52px;top:447px;" width="16" height="16" viewBox="0 0 16 16"><path d="M7.5 6V12H10" fill="none" stroke="#5a80c0" stroke-width="0.9"/><path d="M0 5L5.5 0L9 3.5L3.5 9Z" fill="#f4c444" stroke="#d89a10" stroke-width="0.7"/><path d="M12 3L15 6L12 9L9 6Z" fill="#ee88f0" stroke="#c050c8" stroke-width="0.6"/><path d="M12 9L15 12L12 15L9 12Z" fill="#4a98f0" stroke="#2a60c0" stroke-width="0.6"/></svg>
<div class="t" style="left:71px;top:449px;">NewPager1</div>
<svg style="left:44px;top:467px;" width="8" height="9" viewBox="0 0 8 9"><path d="M1.8 4.5V2.8C1.8 0 6.2 0 6.2 2.8V4.5" fill="none" stroke="#00008a" stroke-width="1.4"/><rect x="0.5" y="4.5" width="7" height="4" fill="#fff" stroke="#00008a"/><rect x="3.5" y="6" width="1.2" height="1.2" fill="#00008a"/></svg>
<svg style="left:52px;top:462px;" width="16" height="14" viewBox="0 0 16 14"><rect x="0.5" y="6.5" width="8" height="6" rx="1" fill="#f6d460" stroke="#b88c18"/><rect x="6.5" y="2.5" width="8" height="6" rx="1" fill="#f8dc70" stroke="#b88c18"/><path d="M2.5 9.5H6.5M2.5 11H6.5M8.5 4.5H12.5M8.5 6.5H12.5" stroke="#5a7ab0" stroke-width="0.9"/></svg>
<div class="t" style="left:71px;top:465px;">ObjListExecType</div>
<svg style="left:29px;top:483px;" width="9" height="9" viewBox="0 0 9 9"><rect x="0.5" y="0.5" width="8" height="8" fill="#fff" stroke="#8c8c8c"/><path d="M2 4.5H7" stroke="#000"/><path d="M4.5 2V7" stroke="#000"/></svg>
<svg style="left:44px;top:483px;" width="8" height="9" viewBox="0 0 8 9"><path d="M1.8 4.5V2.8C1.8 0 6.2 0 6.2 2.8V4.5" fill="none" stroke="#00008a" stroke-width="1.4"/><rect x="0.5" y="4.5" width="7" height="4" fill="#fff" stroke="#00008a"/><rect x="3.5" y="6" width="1.2" height="1.2" fill="#00008a"/></svg>
<svg style="left:52px;top:479px;" width="16" height="16" viewBox="0 0 16 16"><path d="M7.5 6V12H10" fill="none" stroke="#5a80c0" stroke-width="0.9"/><path d="M0 5L5.5 0L9 3.5L3.5 9Z" fill="#f4c444" stroke="#d89a10" stroke-width="0.7"/><path d="M12 3L15 6L12 9L9 6Z" fill="#ee88f0" stroke="#c050c8" stroke-width="0.6"/><path d="M12 9L15 12L12 15L9 12Z" fill="#4a98f0" stroke="#2a60c0" stroke-width="0.6"/></svg>
<div class="t" style="left:71px;top:481px;">ObjListParameters</div>
<svg style="left:29px;top:499px;" width="9" height="9" viewBox="0 0 9 9"><rect x="0.5" y="0.5" width="8" height="8" fill="#fff" stroke="#8c8c8c"/><path d="M2 4.5H7" stroke="#000"/><path d="M4.5 2V7" stroke="#000"/></svg>
<svg style="left:44px;top:499px;" width="8" height="9" viewBox="0 0 8 9"><path d="M1.8 4.5V2.8C1.8 0 6.2 0 6.2 2.8V4.5" fill="none" stroke="#00008a" stroke-width="1.4"/><rect x="0.5" y="4.5" width="7" height="4" fill="#fff" stroke="#00008a"/><rect x="3.5" y="6" width="1.2" height="1.2" fill="#00008a"/></svg>
<svg style="left:52px;top:495px;" width="16" height="16" viewBox="0 0 16 16"><path d="M7.5 6V12H10" fill="none" stroke="#5a80c0" stroke-width="0.9"/><path d="M0 5L5.5 0L9 3.5L3.5 9Z" fill="#f4c444" stroke="#d89a10" stroke-width="0.7"/><path d="M12 3L15 6L12 9L9 6Z" fill="#ee88f0" stroke="#c050c8" stroke-width="0.6"/><path d="M12 9L15 12L12 15L9 12Z" fill="#4a98f0" stroke="#2a60c0" stroke-width="0.6"/></svg>
<div style="left:70px;top:495px;width:117px;height:16px;background:#dcdcd8"></div>
<div class="t" style="left:71px;top:497px;">OneBestObjectCommon</div>
<svg style="left:29px;top:515px;" width="9" height="9" viewBox="0 0 9 9"><rect x="0.5" y="0.5" width="8" height="8" fill="#fff" stroke="#8c8c8c"/><path d="M2 4.5H7" stroke="#000"/><path d="M4.5 2V7" stroke="#000"/></svg>
<svg style="left:44px;top:515px;" width="8" height="9" viewBox="0 0 8 9"><path d="M1.8 4.5V2.8C1.8 0 6.2 0 6.2 2.8V4.5" fill="none" stroke="#00008a" stroke-width="1.4"/><rect x="0.5" y="4.5" width="7" height="4" fill="#fff" stroke="#00008a"/><rect x="3.5" y="6" width="1.2" height="1.2" fill="#00008a"/></svg>
<svg style="left:52px;top:511px;" width="16" height="16" viewBox="0 0 16 16"><path d="M7.5 6V12H10" fill="none" stroke="#5a80c0" stroke-width="0.9"/><path d="M0 5L5.5 0L9 3.5L3.5 9Z" fill="#f4c444" stroke="#d89a10" stroke-width="0.7"/><path d="M12 3L15 6L12 9L9 6Z" fill="#ee88f0" stroke="#c050c8" stroke-width="0.6"/><path d="M12 9L15 12L12 15L9 12Z" fill="#4a98f0" stroke="#2a60c0" stroke-width="0.6"/></svg>
<div class="t" style="left:71px;top:513px;">OneObjectDetailCommon</div>
<svg style="left:29px;top:531px;" width="9" height="9" viewBox="0 0 9 9"><rect x="0.5" y="0.5" width="8" height="8" fill="#fff" stroke="#8c8c8c"/><path d="M2 4.5H7" stroke="#000"/><path d="M4.5 2V7" stroke="#000"/></svg>
<svg style="left:44px;top:531px;" width="8" height="9" viewBox="0 0 8 9"><path d="M1.8 4.5V2.8C1.8 0 6.2 0 6.2 2.8V4.5" fill="none" stroke="#00008a" stroke-width="1.4"/><rect x="0.5" y="4.5" width="7" height="4" fill="#fff" stroke="#00008a"/><rect x="3.5" y="6" width="1.2" height="1.2" fill="#00008a"/></svg>
<svg style="left:52px;top:527px;" width="16" height="16" viewBox="0 0 16 16"><path d="M7.5 6V12H10" fill="none" stroke="#5a80c0" stroke-width="0.9"/><path d="M0 5L5.5 0L9 3.5L3.5 9Z" fill="#f4c444" stroke="#d89a10" stroke-width="0.7"/><path d="M12 3L15 6L12 9L9 6Z" fill="#ee88f0" stroke="#c050c8" stroke-width="0.6"/><path d="M12 9L15 12L12 15L9 12Z" fill="#4a98f0" stroke="#2a60c0" stroke-width="0.6"/></svg>
<div class="t" style="left:71px;top:529px;">OneObjectFindCommon</div>
<svg style="left:29px;top:547px;" width="9" height="9" viewBox="0 0 9 9"><rect x="0.5" y="0.5" width="8" height="8" fill="#fff" stroke="#8c8c8c"/><path d="M2 4.5H7" stroke="#000"/><path d="M4.5 2V7" stroke="#000"/></svg>
<svg style="left:44px;top:547px;" width="8" height="9" viewBox="0 0 8 9"><path d="M1.8 4.5V2.8C1.8 0 6.2 0 6.2 2.8V4.5" fill="none" stroke="#00008a" stroke-width="1.4"/><rect x="0.5" y="4.5" width="7" height="4" fill="#fff" stroke="#00008a"/><rect x="3.5" y="6" width="1.2" height="1.2" fill="#00008a"/></svg>
<svg style="left:52px;top:543px;" width="16" height="16" viewBox="0 0 16 16"><path d="M7.5 6V12H10" fill="none" stroke="#5a80c0" stroke-width="0.9"/><path d="M0 5L5.5 0L9 3.5L3.5 9Z" fill="#f4c444" stroke="#d89a10" stroke-width="0.7"/><path d="M12 3L15 6L12 9L9 6Z" fill="#ee88f0" stroke="#c050c8" stroke-width="0.6"/><path d="M12 9L15 12L12 15L9 12Z" fill="#4a98f0" stroke="#2a60c0" stroke-width="0.6"/></svg>
<div class="t" style="left:71px;top:545px;">OneObjectSaveCommon</div>
<svg style="left:29px;top:563px;" width="9" height="9" viewBox="0 0 9 9"><rect x="0.5" y="0.5" width="8" height="8" fill="#fff" stroke="#8c8c8c"/><path d="M2 4.5H7" stroke="#000"/><path d="M4.5 2V7" stroke="#000"/></svg>
<svg style="left:44px;top:563px;" width="8" height="9" viewBox="0 0 8 9"><path d="M1.8 4.5V2.8C1.8 0 6.2 0 6.2 2.8V4.5" fill="none" stroke="#00008a" stroke-width="1.4"/><rect x="0.5" y="4.5" width="7" height="4" fill="#fff" stroke="#00008a"/><rect x="3.5" y="6" width="1.2" height="1.2" fill="#00008a"/></svg>
<svg style="left:52px;top:559px;" width="16" height="16" viewBox="0 0 16 16"><path d="M7.5 6V12H10" fill="none" stroke="#5a80c0" stroke-width="0.9"/><path d="M0 5L5.5 0L9 3.5L3.5 9Z" fill="#f4c444" stroke="#d89a10" stroke-width="0.7"/><path d="M12 3L15 6L12 9L9 6Z" fill="#ee88f0" stroke="#c050c8" stroke-width="0.6"/><path d="M12 9L15 12L12 15L9 12Z" fill="#4a98f0" stroke="#2a60c0" stroke-width="0.6"/></svg>
<div class="t" style="left:71px;top:561px;">OneObjectUserCommon</div>
<svg style="left:29px;top:579px;" width="9" height="9" viewBox="0 0 9 9"><rect x="0.5" y="0.5" width="8" height="8" fill="#fff" stroke="#8c8c8c"/><path d="M2 4.5H7" stroke="#000"/><path d="M4.5 2V7" stroke="#000"/></svg>
<svg style="left:44px;top:579px;" width="8" height="9" viewBox="0 0 8 9"><path d="M1.8 4.5V2.8C1.8 0 6.2 0 6.2 2.8V4.5" fill="none" stroke="#00008a" stroke-width="1.4"/><rect x="0.5" y="4.5" width="7" height="4" fill="#fff" stroke="#00008a"/><rect x="3.5" y="6" width="1.2" height="1.2" fill="#00008a"/></svg>
<svg style="left:52px;top:575px;" width="16" height="16" viewBox="0 0 16 16"><path d="M7.5 6V12H10" fill="none" stroke="#5a80c0" stroke-width="0.9"/><path d="M0 5L5.5 0L9 3.5L3.5 9Z" fill="#f4c444" stroke="#d89a10" stroke-width="0.7"/><path d="M12 3L15 6L12 9L9 6Z" fill="#ee88f0" stroke="#c050c8" stroke-width="0.6"/><path d="M12 9L15 12L12 15L9 12Z" fill="#4a98f0" stroke="#2a60c0" stroke-width="0.6"/></svg>
<div class="t" style="left:71px;top:577px;">PaymasterAddResult</div>
<svg style="left:29px;top:595px;" width="9" height="9" viewBox="0 0 9 9"><rect x="0.5" y="0.5" width="8" height="8" fill="#fff" stroke="#8c8c8c"/><path d="M2 4.5H7" stroke="#000"/><path d="M4.5 2V7" stroke="#000"/></svg>
<svg style="left:44px;top:595px;" width="8" height="9" viewBox="0 0 8 9"><path d="M1.8 4.5V2.8C1.8 0 6.2 0 6.2 2.8V4.5" fill="none" stroke="#00008a" stroke-width="1.4"/><rect x="0.5" y="4.5" width="7" height="4" fill="#fff" stroke="#00008a"/><rect x="3.5" y="6" width="1.2" height="1.2" fill="#00008a"/></svg>
<svg style="left:52px;top:591px;" width="16" height="16" viewBox="0 0 16 16"><path d="M7.5 6V12H10" fill="none" stroke="#5a80c0" stroke-width="0.9"/><path d="M0 5L5.5 0L9 3.5L3.5 9Z" fill="#f4c444" stroke="#d89a10" stroke-width="0.7"/><path d="M12 3L15 6L12 9L9 6Z" fill="#ee88f0" stroke="#c050c8" stroke-width="0.6"/><path d="M12 9L15 12L12 15L9 12Z" fill="#4a98f0" stroke="#2a60c0" stroke-width="0.6"/></svg>
<div class="t" style="left:71px;top:593px;">PaymasterGate</div>
<svg style="left:29px;top:611px;" width="9" height="9" viewBox="0 0 9 9"><rect x="0.5" y="0.5" width="8" height="8" fill="#fff" stroke="#8c8c8c"/><path d="M2 4.5H7" stroke="#000"/><path d="M4.5 2V7" stroke="#000"/></svg>
<svg style="left:44px;top:611px;" width="8" height="9" viewBox="0 0 8 9"><path d="M1.8 4.5V2.8C1.8 0 6.2 0 6.2 2.8V4.5" fill="none" stroke="#00008a" stroke-width="1.4"/><rect x="0.5" y="4.5" width="7" height="4" fill="#fff" stroke="#00008a"/><rect x="3.5" y="6" width="1.2" height="1.2" fill="#00008a"/></svg>
<svg style="left:52px;top:607px;" width="16" height="16" viewBox="0 0 16 16"><path d="M7.5 6V12H10" fill="none" stroke="#5a80c0" stroke-width="0.9"/><path d="M0 5L5.5 0L9 3.5L3.5 9Z" fill="#f4c444" stroke="#d89a10" stroke-width="0.7"/><path d="M12 3L15 6L12 9L9 6Z" fill="#ee88f0" stroke="#c050c8" stroke-width="0.6"/><path d="M12 9L15 12L12 15L9 12Z" fill="#4a98f0" stroke="#2a60c0" stroke-width="0.6"/></svg>
<div class="t" style="left:71px;top:609px;">PaymasterPayResult</div>
<svg style="left:29px;top:627px;" width="9" height="9" viewBox="0 0 9 9"><rect x="0.5" y="0.5" width="8" height="8" fill="#fff" stroke="#8c8c8c"/><path d="M2 4.5H7" stroke="#000"/><path d="M4.5 2V7" stroke="#000"/></svg>
<svg style="left:44px;top:627px;" width="8" height="9" viewBox="0 0 8 9"><path d="M1.8 4.5V2.8C1.8 0 6.2 0 6.2 2.8V4.5" fill="none" stroke="#00008a" stroke-width="1.4"/><rect x="0.5" y="4.5" width="7" height="4" fill="#fff" stroke="#00008a"/><rect x="3.5" y="6" width="1.2" height="1.2" fill="#00008a"/></svg>
<svg style="left:52px;top:623px;" width="16" height="16" viewBox="0 0 16 16"><path d="M7.5 6V12H10" fill="none" stroke="#5a80c0" stroke-width="0.9"/><path d="M0 5L5.5 0L9 3.5L3.5 9Z" fill="#f4c444" stroke="#d89a10" stroke-width="0.7"/><path d="M12 3L15 6L12 9L9 6Z" fill="#ee88f0" stroke="#c050c8" stroke-width="0.6"/><path d="M12 9L15 12L12 15L9 12Z" fill="#4a98f0" stroke="#2a60c0" stroke-width="0.6"/></svg>
<div class="t" style="left:71px;top:625px;">PaymasterSuccessResult</div>
<svg style="left:44px;top:643px;" width="8" height="9" viewBox="0 0 8 9"><path d="M1.8 4.5V2.8C1.8 0 6.2 0 6.2 2.8V4.5" fill="none" stroke="#00008a" stroke-width="1.4"/><rect x="0.5" y="4.5" width="7" height="4" fill="#fff" stroke="#00008a"/><rect x="3.5" y="6" width="1.2" height="1.2" fill="#00008a"/></svg>
<svg style="left:52px;top:638px;" width="16" height="14" viewBox="0 0 16 14"><rect x="0.5" y="6.5" width="8" height="6" rx="1" fill="#f6d460" stroke="#b88c18"/><rect x="6.5" y="2.5" width="8" height="6" rx="1" fill="#f8dc70" stroke="#b88c18"/><path d="M2.5 9.5H6.5M2.5 11H6.5M8.5 4.5H12.5M8.5 6.5H12.5" stroke="#5a7ab0" stroke-width="0.9"/></svg>
<div class="t" style="left:71px;top:641px;">PostEncode</div>
<svg style="left:29px;top:659px;" width="9" height="9" viewBox="0 0 9 9"><rect x="0.5" y="0.5" width="8" height="8" fill="#fff" stroke="#8c8c8c"/><path d="M2 4.5H7" stroke="#000"/><path d="M4.5 2V7" stroke="#000"/></svg>
<svg style="left:44px;top:659px;" width="8" height="9" viewBox="0 0 8 9"><path d="M1.8 4.5V2.8C1.8 0 6.2 0 6.2 2.8V4.5" fill="none" stroke="#00008a" stroke-width="1.4"/><rect x="0.5" y="4.5" width="7" height="4" fill="#fff" stroke="#00008a"/><rect x="3.5" y="6" width="1.2" height="1.2" fill="#00008a"/></svg>
<svg style="left:52px;top:655px;" width="16" height="16" viewBox="0 0 16 16"><path d="M7.5 6V12H10" fill="none" stroke="#5a80c0" stroke-width="0.9"/><path d="M0 5L5.5 0L9 3.5L3.5 9Z" fill="#f4c444" stroke="#d89a10" stroke-width="0.7"/><path d="M12 3L15 6L12 9L9 6Z" fill="#ee88f0" stroke="#c050c8" stroke-width="0.6"/><path d="M12 9L15 12L12 15L9 12Z" fill="#4a98f0" stroke="#2a60c0" stroke-width="0.6"/></svg>
<div class="t" style="left:71px;top:657px;">prob</div>
<svg style="left:29px;top:675px;" width="9" height="9" viewBox="0 0 9 9"><rect x="0.5" y="0.5" width="8" height="8" fill="#fff" stroke="#8c8c8c"/><path d="M2 4.5H7" stroke="#000"/><path d="M4.5 2V7" stroke="#000"/></svg>
<svg style="left:46px;top:671px;" width="16" height="16" viewBox="0 0 16 16"><path d="M7.5 6V12H10" fill="none" stroke="#5a80c0" stroke-width="0.9"/><path d="M0 5L5.5 0L9 3.5L3.5 9Z" fill="#f4c444" stroke="#d89a10" stroke-width="0.7"/><path d="M12 3L15 6L12 9L9 6Z" fill="#ee88f0" stroke="#c050c8" stroke-width="0.6"/><path d="M12 9L15 12L12 15L9 12Z" fill="#4a98f0" stroke="#2a60c0" stroke-width="0.6"/></svg>
<div class="t" style="left:64px;top:673px;">ProfileCommon</div>
<div style="left:265px;top:143px;width:16px;height:543px;background:#ebeae4"></div>
<div style="left:265px;top:143px;width:16px;height:16px;background:#ebe9e0;border-top:1px solid #fff;border-left:1px solid #fff;border-right:1px solid #808080;border-bottom:1px solid #808080;box-shadow:inset -1px -1px 0 #c8c6bc"></div>
<svg style="left:265px;top:143px;" width="16" height="16" viewBox="0 0 16 16"><path d="M4.0 10.0H12.0L8.0 6.0Z" fill="#000"/></svg>
<div style="left:265px;top:670px;width:16px;height:16px;background:#ebe9e0;border-top:1px solid #fff;border-left:1px solid #fff;border-right:1px solid #808080;border-bottom:1px solid #808080;box-shadow:inset -1px -1px 0 #c8c6bc"></div>
<svg style="left:265px;top:670px;" width="16" height="16" viewBox="0 0 16 16"><path d="M4.0 6.0H12.0L8.0 10.0Z" fill="#000"/></svg>
<div style="left:265px;top:159px;width:16px;height:382px;background:#e6e4da;border-top:1px solid #fff;border-left:1px solid #fff;border-right:1px solid #808080;border-bottom:1px solid #808080;box-shadow:inset -1px -1px 0 #c8c6bc"></div>
<div style="left:6px;top:686px;width:275px;height:4px;background:#2a3a58"></div>
<div style="left:6px;top:690px;width:275px;height:418px;background:#f9fbfa"></div>
<div style="left:6px;top:690px;width:259px;height:418px;overflow:hidden">
<svg style="left:19px;top:6px;" width="8" height="11" viewBox="0 0 8 11"><circle cx="4" cy="3" r="2.8" fill="#f6cc48" stroke="#c09020" stroke-width="0.7"/><circle cx="3.6" cy="2.6" r="0.9" fill="#604000"/><path d="M3.8 5.5V10" stroke="#e0a820" stroke-width="1.8"/><path d="M4 7.5H6M4 9.3H5.5" stroke="#e0a820" stroke-width="1.2"/></svg>
<svg style="left:20px;top:2px;" width="7" height="4" viewBox="0 0 7 4"><path d="M2 0.5H7M0 2.5H7" stroke="#b8bcc8" stroke-width="1"/></svg>
<svg style="left:27px;top:0px;" width="9" height="11" viewBox="0 0 9 11"><path d="M4.5 0L9 2.5V8.5L4.5 11L0 8.5V2.5Z" fill="#b040c8"/><path d="M4.5 0L9 2.5L4.5 5L0 2.5Z" fill="#f4a8fa"/><path d="M4.5 5V11L0 8.5V2.5Z" fill="#d878e8"/></svg>
<div class="t" style="left:39px;top:2px;">AddedControl(System.Web.UI.Control, Integer)</div>
<svg style="left:19px;top:22px;" width="8" height="11" viewBox="0 0 8 11"><circle cx="4" cy="3" r="2.8" fill="#f6cc48" stroke="#c09020" stroke-width="0.7"/><circle cx="3.6" cy="2.6" r="0.9" fill="#604000"/><path d="M3.8 5.5V10" stroke="#e0a820" stroke-width="1.8"/><path d="M4 7.5H6M4 9.3H5.5" stroke="#e0a820" stroke-width="1.2"/></svg>
<svg style="left:20px;top:18px;" width="7" height="4" viewBox="0 0 7 4"><path d="M2 0.5H7M0 2.5H7" stroke="#b8bcc8" stroke-width="1"/></svg>
<svg style="left:27px;top:16px;" width="9" height="11" viewBox="0 0 9 11"><path d="M4.5 0L9 2.5V8.5L4.5 11L0 8.5V2.5Z" fill="#b040c8"/><path d="M4.5 0L9 2.5L4.5 5L0 2.5Z" fill="#f4a8fa"/><path d="M4.5 5V11L0 8.5V2.5Z" fill="#d878e8"/></svg>
<div class="t" style="left:39px;top:18px;">AddParsedSubObject(Object)</div>
<svg style="left:19px;top:34px;" width="8" height="6" viewBox="0 0 8 6"><path d="M2 0.5H8M0 2.5H8M2 4.5H8" stroke="#b8bcc8" stroke-width="1"/></svg>
<svg style="left:27px;top:32px;" width="9" height="11" viewBox="0 0 9 11"><path d="M4.5 0L9 2.5V8.5L4.5 11L0 8.5V2.5Z" fill="#b040c8"/><path d="M4.5 0L9 2.5L4.5 5L0 2.5Z" fill="#f4a8fa"/><path d="M4.5 5V11L0 8.5V2.5Z" fill="#d878e8"/></svg>
<div class="t" style="left:39px;top:34px;">ApplyStyleSheetSkin(System.Web.UI.Page)</div>
<svg style="left:19px;top:54px;" width="8" height="11" viewBox="0 0 8 11"><circle cx="4" cy="3" r="2.8" fill="#f6cc48" stroke="#c09020" stroke-width="0.7"/><circle cx="3.6" cy="2.6" r="0.9" fill="#604000"/><path d="M3.8 5.5V10" stroke="#e0a820" stroke-width="1.8"/><path d="M4 7.5H6M4 9.3H5.5" stroke="#e0a820" stroke-width="1.2"/></svg>
<svg style="left:20px;top:50px;" width="7" height="4" viewBox="0 0 7 4"><path d="M2 0.5H7M0 2.5H7" stroke="#b8bcc8" stroke-width="1"/></svg>
<svg style="left:27px;top:48px;" width="9" height="11" viewBox="0 0 9 11"><path d="M4.5 0L9 2.5V8.5L4.5 11L0 8.5V2.5Z" fill="#b040c8"/><path d="M4.5 0L9 2.5L4.5 5L0 2.5Z" fill="#f4a8fa"/><path d="M4.5 5V11L0 8.5V2.5Z" fill="#d878e8"/></svg>
<div class="t" style="left:39px;top:50px;">BuildProfileTree(String, Boolean)</div>
<svg style="left:19px;top:70px;" width="8" height="11" viewBox="0 0 8 11"><circle cx="4" cy="3" r="2.8" fill="#f6cc48" stroke="#c09020" stroke-width="0.7"/><circle cx="3.6" cy="2.6" r="0.9" fill="#604000"/><path d="M3.8 5.5V10" stroke="#e0a820" stroke-width="1.8"/><path d="M4 7.5H6M4 9.3H5.5" stroke="#e0a820" stroke-width="1.2"/></svg>
<svg style="left:20px;top:66px;" width="7" height="4" viewBox="0 0 7 4"><path d="M2 0.5H7M0 2.5H7" stroke="#b8bcc8" stroke-width="1"/></svg>
<svg style="left:27px;top:64px;" width="9" height="11" viewBox="0 0 9 11"><path d="M4.5 0L9 2.5V8.5L4.5 11L0 8.5V2.5Z" fill="#b040c8"/><path d="M4.5 0L9 2.5L4.5 5L0 2.5Z" fill="#f4a8fa"/><path d="M4.5 5V11L0 8.5V2.5Z" fill="#d878e8"/></svg>
<div class="t" style="left:39px;top:66px;">ClearChildControlState()</div>
<svg style="left:19px;top:86px;" width="8" height="11" viewBox="0 0 8 11"><circle cx="4" cy="3" r="2.8" fill="#f6cc48" stroke="#c09020" stroke-width="0.7"/><circle cx="3.6" cy="2.6" r="0.9" fill="#604000"/><path d="M3.8 5.5V10" stroke="#e0a820" stroke-width="1.8"/><path d="M4 7.5H6M4 9.3H5.5" stroke="#e0a820" stroke-width="1.2"/></svg>
<svg style="left:20px;top:82px;" width="7" height="4" viewBox="0 0 7 4"><path d="M2 0.5H7M0 2.5H7" stroke="#b8bcc8" stroke-width="1"/></svg>
<svg style="left:27px;top:80px;" width="9" height="11" viewBox="0 0 9 11"><path d="M4.5 0L9 2.5V8.5L4.5 11L0 8.5V2.5Z" fill="#b040c8"/><path d="M4.5 0L9 2.5L4.5 5L0 2.5Z" fill="#f4a8fa"/><path d="M4.5 5V11L0 8.5V2.5Z" fill="#d878e8"/></svg>
<div class="t" style="left:39px;top:82px;">ClearChildState()</div>
<svg style="left:19px;top:102px;" width="8" height="11" viewBox="0 0 8 11"><circle cx="4" cy="3" r="2.8" fill="#f6cc48" stroke="#c09020" stroke-width="0.7"/><circle cx="3.6" cy="2.6" r="0.9" fill="#604000"/><path d="M3.8 5.5V10" stroke="#e0a820" stroke-width="1.8"/><path d="M4 7.5H6M4 9.3H5.5" stroke="#e0a820" stroke-width="1.2"/></svg>
<svg style="left:20px;top:98px;" width="7" height="4" viewBox="0 0 7 4"><path d="M2 0.5H7M0 2.5H7" stroke="#b8bcc8" stroke-width="1"/></svg>
<svg style="left:27px;top:96px;" width="9" height="11" viewBox="0 0 9 11"><path d="M4.5 0L9 2.5V8.5L4.5 11L0 8.5V2.5Z" fill="#b040c8"/><path d="M4.5 0L9 2.5L4.5 5L0 2.5Z" fill="#f4a8fa"/><path d="M4.5 5V11L0 8.5V2.5Z" fill="#d878e8"/></svg>
<div class="t" style="left:39px;top:98px;">ClearChildViewState()</div>
<svg style="left:19px;top:118px;" width="8" height="11" viewBox="0 0 8 11"><circle cx="4" cy="3" r="2.8" fill="#f6cc48" stroke="#c09020" stroke-width="0.7"/><circle cx="3.6" cy="2.6" r="0.9" fill="#604000"/><path d="M3.8 5.5V10" stroke="#e0a820" stroke-width="1.8"/><path d="M4 7.5H6M4 9.3H5.5" stroke="#e0a820" stroke-width="1.2"/></svg>
<svg style="left:20px;top:114px;" width="7" height="4" viewBox="0 0 7 4"><path d="M2 0.5H7M0 2.5H7" stroke="#b8bcc8" stroke-width="1"/></svg>
<svg style="left:27px;top:112px;" width="9" height="11" viewBox="0 0 9 11"><path d="M4.5 0L9 2.5V8.5L4.5 11L0 8.5V2.5Z" fill="#b040c8"/><path d="M4.5 0L9 2.5L4.5 5L0 2.5Z" fill="#f4a8fa"/><path d="M4.5 5V11L0 8.5V2.5Z" fill="#d878e8"/></svg>
<div class="t" style="left:39px;top:114px;">Construct()</div>
<svg style="left:19px;top:134px;" width="8" height="11" viewBox="0 0 8 11"><circle cx="4" cy="3" r="2.8" fill="#f6cc48" stroke="#c09020" stroke-width="0.7"/><circle cx="3.6" cy="2.6" r="0.9" fill="#604000"/><path d="M3.8 5.5V10" stroke="#e0a820" stroke-width="1.8"/><path d="M4 7.5H6M4 9.3H5.5" stroke="#e0a820" stroke-width="1.2"/></svg>
<svg style="left:20px;top:130px;" width="7" height="4" viewBox="0 0 7 4"><path d="M2 0.5H7M0 2.5H7" stroke="#b8bcc8" stroke-width="1"/></svg>
<svg style="left:27px;top:128px;" width="9" height="11" viewBox="0 0 9 11"><path d="M4.5 0L9 2.5V8.5L4.5 11L0 8.5V2.5Z" fill="#b040c8"/><path d="M4.5 0L9 2.5L4.5 5L0 2.5Z" fill="#f4a8fa"/><path d="M4.5 5V11L0 8.5V2.5Z" fill="#d878e8"/></svg>
<div class="t" style="left:39px;top:130px;">CreateChildControls()</div>
<svg style="left:19px;top:146px;" width="8" height="6" viewBox="0 0 8 6"><path d="M2 0.5H8M0 2.5H8M2 4.5H8" stroke="#b8bcc8" stroke-width="1"/></svg>
<svg style="left:27px;top:144px;" width="9" height="11" viewBox="0 0 9 11"><path d="M4.5 0L9 2.5V8.5L4.5 11L0 8.5V2.5Z" fill="#b040c8"/><path d="M4.5 0L9 2.5L4.5 5L0 2.5Z" fill="#f4a8fa"/><path d="M4.5 5V11L0 8.5V2.5Z" fill="#d878e8"/></svg>
<div class="t" style="left:39px;top:146px;">DataBind()</div>
<svg style="left:19px;top:166px;" width="8" height="11" viewBox="0 0 8 11"><circle cx="4" cy="3" r="2.8" fill="#f6cc48" stroke="#c09020" stroke-width="0.7"/><circle cx="3.6" cy="2.6" r="0.9" fill="#604000"/><path d="M3.8 5.5V10" stroke="#e0a820" stroke-width="1.8"/><path d="M4 7.5H6M4 9.3H5.5" stroke="#e0a820" stroke-width="1.2"/></svg>
<svg style="left:20px;top:162px;" width="7" height="4" viewBox="0 0 7 4"><path d="M2 0.5H7M0 2.5H7" stroke="#b8bcc8" stroke-width="1"/></svg>
<svg style="left:27px;top:160px;" width="9" height="11" viewBox="0 0 9 11"><path d="M4.5 0L9 2.5V8.5L4.5 11L0 8.5V2.5Z" fill="#b040c8"/><path d="M4.5 0L9 2.5L4.5 5L0 2.5Z" fill="#f4a8fa"/><path d="M4.5 5V11L0 8.5V2.5Z" fill="#d878e8"/></svg>
<div class="t" style="left:39px;top:162px;">DataBind(Boolean)</div>
<svg style="left:19px;top:182px;" width="8" height="11" viewBox="0 0 8 11"><circle cx="4" cy="3" r="2.8" fill="#f6cc48" stroke="#c09020" stroke-width="0.7"/><circle cx="3.6" cy="2.6" r="0.9" fill="#604000"/><path d="M3.8 5.5V10" stroke="#e0a820" stroke-width="1.8"/><path d="M4 7.5H6M4 9.3H5.5" stroke="#e0a820" stroke-width="1.2"/></svg>
<svg style="left:20px;top:178px;" width="7" height="4" viewBox="0 0 7 4"><path d="M2 0.5H7M0 2.5H7" stroke="#b8bcc8" stroke-width="1"/></svg>
<svg style="left:27px;top:176px;" width="9" height="11" viewBox="0 0 9 11"><path d="M4.5 0L9 2.5V8.5L4.5 11L0 8.5V2.5Z" fill="#b040c8"/><path d="M4.5 0L9 2.5L4.5 5L0 2.5Z" fill="#f4a8fa"/><path d="M4.5 5V11L0 8.5V2.5Z" fill="#d878e8"/></svg>
<div class="t" style="left:39px;top:178px;">DataBindChildren()</div>
<svg style="left:19px;top:194px;" width="8" height="6" viewBox="0 0 8 6"><path d="M2 0.5H8M0 2.5H8M2 4.5H8" stroke="#b8bcc8" stroke-width="1"/></svg>
<svg style="left:27px;top:192px;" width="9" height="11" viewBox="0 0 9 11"><path d="M4.5 0L9 2.5V8.5L4.5 11L0 8.5V2.5Z" fill="#b040c8"/><path d="M4.5 0L9 2.5L4.5 5L0 2.5Z" fill="#f4a8fa"/><path d="M4.5 5V11L0 8.5V2.5Z" fill="#d878e8"/></svg>
<div class="t" style="left:39px;top:194px;">Dispose()</div>
<svg style="left:19px;top:214px;" width="8" height="11" viewBox="0 0 8 11"><circle cx="4" cy="3" r="2.8" fill="#f6cc48" stroke="#c09020" stroke-width="0.7"/><circle cx="3.6" cy="2.6" r="0.9" fill="#604000"/><path d="M3.8 5.5V10" stroke="#e0a820" stroke-width="1.8"/><path d="M4 7.5H6M4 9.3H5.5" stroke="#e0a820" stroke-width="1.2"/></svg>
<svg style="left:20px;top:210px;" width="7" height="4" viewBox="0 0 7 4"><path d="M2 0.5H7M0 2.5H7" stroke="#b8bcc8" stroke-width="1"/></svg>
<svg style="left:27px;top:208px;" width="9" height="11" viewBox="0 0 9 11"><path d="M4.5 0L9 2.5V8.5L4.5 11L0 8.5V2.5Z" fill="#b040c8"/><path d="M4.5 0L9 2.5L4.5 5L0 2.5Z" fill="#f4a8fa"/><path d="M4.5 5V11L0 8.5V2.5Z" fill="#d878e8"/></svg>
<div class="t" style="left:39px;top:210px;">EnsureChildControls()</div>
<svg style="left:19px;top:230px;" width="8" height="11" viewBox="0 0 8 11"><circle cx="4" cy="3" r="2.8" fill="#f6cc48" stroke="#c09020" stroke-width="0.7"/><circle cx="3.6" cy="2.6" r="0.9" fill="#604000"/><path d="M3.8 5.5V10" stroke="#e0a820" stroke-width="1.8"/><path d="M4 7.5H6M4 9.3H5.5" stroke="#e0a820" stroke-width="1.2"/></svg>
<svg style="left:20px;top:226px;" width="7" height="4" viewBox="0 0 7 4"><path d="M2 0.5H7M0 2.5H7" stroke="#b8bcc8" stroke-width="1"/></svg>
<svg style="left:27px;top:224px;" width="9" height="11" viewBox="0 0 9 11"><path d="M4.5 0L9 2.5V8.5L4.5 11L0 8.5V2.5Z" fill="#b040c8"/><path d="M4.5 0L9 2.5L4.5 5L0 2.5Z" fill="#f4a8fa"/><path d="M4.5 5V11L0 8.5V2.5Z" fill="#d878e8"/></svg>
<div class="t" style="left:39px;top:226px;">EnsureID()</div>
<svg style="left:19px;top:246px;" width="8" height="11" viewBox="0 0 8 11"><circle cx="4" cy="3" r="2.8" fill="#f6cc48" stroke="#c09020" stroke-width="0.7"/><circle cx="3.6" cy="2.6" r="0.9" fill="#604000"/><path d="M3.8 5.5V10" stroke="#e0a820" stroke-width="1.8"/><path d="M4 7.5H6M4 9.3H5.5" stroke="#e0a820" stroke-width="1.2"/></svg>
<svg style="left:20px;top:242px;" width="7" height="4" viewBox="0 0 7 4"><path d="M2 0.5H7M0 2.5H7" stroke="#b8bcc8" stroke-width="1"/></svg>
<svg style="left:27px;top:240px;" width="9" height="11" viewBox="0 0 9 11"><path d="M4.5 0L9 2.5V8.5L4.5 11L0 8.5V2.5Z" fill="#b040c8"/><path d="M4.5 0L9 2.5L4.5 5L0 2.5Z" fill="#f4a8fa"/><path d="M4.5 5V11L0 8.5V2.5Z" fill="#d878e8"/></svg>
<div class="t" style="left:39px;top:242px;">Finalize()</div>
<svg style="left:19px;top:258px;" width="8" height="6" viewBox="0 0 8 6"><path d="M2 0.5H8M0 2.5H8M2 4.5H8" stroke="#b8bcc8" stroke-width="1"/></svg>
<svg style="left:27px;top:256px;" width="9" height="11" viewBox="0 0 9 11"><path d="M4.5 0L9 2.5V8.5L4.5 11L0 8.5V2.5Z" fill="#b040c8"/><path d="M4.5 0L9 2.5L4.5 5L0 2.5Z" fill="#f4a8fa"/><path d="M4.5 5V11L0 8.5V2.5Z" fill="#d878e8"/></svg>
<div class="t" style="left:39px;top:258px;">Focus()</div>
<svg style="left:19px;top:278px;" width="8" height="11" viewBox="0 0 8 11"><circle cx="4" cy="3" r="2.8" fill="#f6cc48" stroke="#c09020" stroke-width="0.7"/><circle cx="3.6" cy="2.6" r="0.9" fill="#604000"/><path d="M3.8 5.5V10" stroke="#e0a820" stroke-width="1.8"/><path d="M4 7.5H6M4 9.3H5.5" stroke="#e0a820" stroke-width="1.2"/></svg>
<svg style="left:20px;top:274px;" width="7" height="4" viewBox="0 0 7 4"><path d="M2 0.5H7M0 2.5H7" stroke="#b8bcc8" stroke-width="1"/></svg>
<svg style="left:27px;top:272px;" width="9" height="11" viewBox="0 0 9 11"><path d="M4.5 0L9 2.5V8.5L4.5 11L0 8.5V2.5Z" fill="#b040c8"/><path d="M4.5 0L9 2.5L4.5 5L0 2.5Z" fill="#f4a8fa"/><path d="M4.5 5V11L0 8.5V2.5Z" fill="#d878e8"/></svg>
<div class="t" style="left:39px;top:274px;">LoadControlState(Object)</div>
<svg style="left:19px;top:294px;" width="8" height="11" viewBox="0 0 8 11"><circle cx="4" cy="3" r="2.8" fill="#f6cc48" stroke="#c09020" stroke-width="0.7"/><circle cx="3.6" cy="2.6" r="0.9" fill="#604000"/><path d="M3.8 5.5V10" stroke="#e0a820" stroke-width="1.8"/><path d="M4 7.5H6M4 9.3H5.5" stroke="#e0a820" stroke-width="1.2"/></svg>
<svg style="left:20px;top:290px;" width="7" height="4" viewBox="0 0 7 4"><path d="M2 0.5H7M0 2.5H7" stroke="#b8bcc8" stroke-width="1"/></svg>
<svg style="left:27px;top:288px;" width="9" height="11" viewBox="0 0 9 11"><path d="M4.5 0L9 2.5V8.5L4.5 11L0 8.5V2.5Z" fill="#b040c8"/><path d="M4.5 0L9 2.5L4.5 5L0 2.5Z" fill="#f4a8fa"/><path d="M4.5 5V11L0 8.5V2.5Z" fill="#d878e8"/></svg>
<div class="t" style="left:39px;top:290px;">LoadViewState(Object)</div>
<svg style="left:19px;top:306px;" width="8" height="6" viewBox="0 0 8 6"><path d="M2 0.5H8M0 2.5H8M2 4.5H8" stroke="#b8bcc8" stroke-width="1"/></svg>
<svg style="left:27px;top:304px;" width="9" height="11" viewBox="0 0 9 11"><path d="M4.5 0L9 2.5V8.5L4.5 11L0 8.5V2.5Z" fill="#b040c8"/><path d="M4.5 0L9 2.5L4.5 5L0 2.5Z" fill="#f4a8fa"/><path d="M4.5 5V11L0 8.5V2.5Z" fill="#d878e8"/></svg>
<div class="t" style="left:39px;top:306px;">New()</div>
<svg style="left:19px;top:326px;" width="8" height="11" viewBox="0 0 8 11"><circle cx="4" cy="3" r="2.8" fill="#f6cc48" stroke="#c09020" stroke-width="0.7"/><circle cx="3.6" cy="2.6" r="0.9" fill="#604000"/><path d="M3.8 5.5V10" stroke="#e0a820" stroke-width="1.8"/><path d="M4 7.5H6M4 9.3H5.5" stroke="#e0a820" stroke-width="1.2"/></svg>
<svg style="left:20px;top:322px;" width="7" height="4" viewBox="0 0 7 4"><path d="M2 0.5H7M0 2.5H7" stroke="#b8bcc8" stroke-width="1"/></svg>
<svg style="left:27px;top:320px;" width="9" height="11" viewBox="0 0 9 11"><path d="M4.5 0L9 2.5V8.5L4.5 11L0 8.5V2.5Z" fill="#b040c8"/><path d="M4.5 0L9 2.5L4.5 5L0 2.5Z" fill="#f4a8fa"/><path d="M4.5 5V11L0 8.5V2.5Z" fill="#d878e8"/></svg>
<div class="t" style="left:39px;top:322px;">OnAbortTransaction(System.EventArgs)</div>
<svg style="left:19px;top:342px;" width="8" height="11" viewBox="0 0 8 11"><circle cx="4" cy="3" r="2.8" fill="#f6cc48" stroke="#c09020" stroke-width="0.7"/><circle cx="3.6" cy="2.6" r="0.9" fill="#604000"/><path d="M3.8 5.5V10" stroke="#e0a820" stroke-width="1.8"/><path d="M4 7.5H6M4 9.3H5.5" stroke="#e0a820" stroke-width="1.2"/></svg>
<svg style="left:20px;top:338px;" width="7" height="4" viewBox="0 0 7 4"><path d="M2 0.5H7M0 2.5H7" stroke="#b8bcc8" stroke-width="1"/></svg>
<svg style="left:27px;top:336px;" width="9" height="11" viewBox="0 0 9 11"><path d="M4.5 0L9 2.5V8.5L4.5 11L0 8.5V2.5Z" fill="#b040c8"/><path d="M4.5 0L9 2.5L4.5 5L0 2.5Z" fill="#f4a8fa"/><path d="M4.5 5V11L0 8.5V2.5Z" fill="#d878e8"/></svg>
<div class="t" style="left:39px;top:338px;">OnCommitTransaction(System.EventArgs)</div>
<svg style="left:19px;top:358px;" width="8" height="11" viewBox="0 0 8 11"><circle cx="4" cy="3" r="2.8" fill="#f6cc48" stroke="#c09020" stroke-width="0.7"/><circle cx="3.6" cy="2.6" r="0.9" fill="#604000"/><path d="M3.8 5.5V10" stroke="#e0a820" stroke-width="1.8"/><path d="M4 7.5H6M4 9.3H5.5" stroke="#e0a820" stroke-width="1.2"/></svg>
<svg style="left:20px;top:354px;" width="7" height="4" viewBox="0 0 7 4"><path d="M2 0.5H7M0 2.5H7" stroke="#b8bcc8" stroke-width="1"/></svg>
<svg style="left:27px;top:352px;" width="9" height="11" viewBox="0 0 9 11"><path d="M4.5 0L9 2.5V8.5L4.5 11L0 8.5V2.5Z" fill="#b040c8"/><path d="M4.5 0L9 2.5L4.5 5L0 2.5Z" fill="#f4a8fa"/><path d="M4.5 5V11L0 8.5V2.5Z" fill="#d878e8"/></svg>
<div class="t" style="left:39px;top:354px;">OnDataBinding(System.EventArgs)</div>
<svg style="left:19px;top:374px;" width="8" height="11" viewBox="0 0 8 11"><circle cx="4" cy="3" r="2.8" fill="#f6cc48" stroke="#c09020" stroke-width="0.7"/><circle cx="3.6" cy="2.6" r="0.9" fill="#604000"/><path d="M3.8 5.5V10" stroke="#e0a820" stroke-width="1.8"/><path d="M4 7.5H6M4 9.3H5.5" stroke="#e0a820" stroke-width="1.2"/></svg>
<svg style="left:20px;top:370px;" width="7" height="4" viewBox="0 0 7 4"><path d="M2 0.5H7M0 2.5H7" stroke="#b8bcc8" stroke-width="1"/></svg>
<svg style="left:27px;top:368px;" width="9" height="11" viewBox="0 0 9 11"><path d="M4.5 0L9 2.5V8.5L4.5 11L0 8.5V2.5Z" fill="#b040c8"/><path d="M4.5 0L9 2.5L4.5 5L0 2.5Z" fill="#f4a8fa"/><path d="M4.5 5V11L0 8.5V2.5Z" fill="#d878e8"/></svg>
<div class="t" style="left:39px;top:370px;">OnError(System.EventArgs)</div>
<svg style="left:19px;top:390px;" width="8" height="11" viewBox="0 0 8 11"><circle cx="4" cy="3" r="2.8" fill="#f6cc48" stroke="#c09020" stroke-width="0.7"/><circle cx="3.6" cy="2.6" r="0.9" fill="#604000"/><path d="M3.8 5.5V10" stroke="#e0a820" stroke-width="1.8"/><path d="M4 7.5H6M4 9.3H5.5" stroke="#e0a820" stroke-width="1.2"/></svg>
<svg style="left:20px;top:386px;" width="7" height="4" viewBox="0 0 7 4"><path d="M2 0.5H7M0 2.5H7" stroke="#b8bcc8" stroke-width="1"/></svg>
<svg style="left:27px;top:384px;" width="9" height="11" viewBox="0 0 9 11"><path d="M4.5 0L9 2.5V8.5L4.5 11L0 8.5V2.5Z" fill="#b040c8"/><path d="M4.5 0L9 2.5L4.5 5L0 2.5Z" fill="#f4a8fa"/><path d="M4.5 5V11L0 8.5V2.5Z" fill="#d878e8"/></svg>
<div class="t" style="left:39px;top:386px;">OnInit(System.EventArgs)</div>
<svg style="left:19px;top:406px;" width="8" height="11" viewBox="0 0 8 11"><circle cx="4" cy="3" r="2.8" fill="#f6cc48" stroke="#c09020" stroke-width="0.7"/><circle cx="3.6" cy="2.6" r="0.9" fill="#604000"/><path d="M3.8 5.5V10" stroke="#e0a820" stroke-width="1.8"/><path d="M4 7.5H6M4 9.3H5.5" stroke="#e0a820" stroke-width="1.2"/></svg>
<svg style="left:20px;top:402px;" width="7" height="4" viewBox="0 0 7 4"><path d="M2 0.5H7M0 2.5H7" stroke="#b8bcc8" stroke-width="1"/></svg>
<svg style="left:27px;top:400px;" width="9" height="11" viewBox="0 0 9 11"><path d="M4.5 0L9 2.5V8.5L4.5 11L0 8.5V2.5Z" fill="#b040c8"/><path d="M4.5 0L9 2.5L4.5 5L0 2.5Z" fill="#f4a8fa"/><path d="M4.5 5V11L0 8.5V2.5Z" fill="#d878e8"/></svg>
<div class="t" style="left:39px;top:402px;">OnLoad(System.EventArgs)</div>
<svg style="left:19px;top:422px;" width="8" height="11" viewBox="0 0 8 11"><circle cx="4" cy="3" r="2.8" fill="#f6cc48" stroke="#c09020" stroke-width="0.7"/><circle cx="3.6" cy="2.6" r="0.9" fill="#604000"/><path d="M3.8 5.5V10" stroke="#e0a820" stroke-width="1.8"/><path d="M4 7.5H6M4 9.3H5.5" stroke="#e0a820" stroke-width="1.2"/></svg>
<svg style="left:20px;top:418px;" width="7" height="4" viewBox="0 0 7 4"><path d="M2 0.5H7M0 2.5H7" stroke="#b8bcc8" stroke-width="1"/></svg>
<svg style="left:27px;top:416px;" width="9" height="11" viewBox="0 0 9 11"><path d="M4.5 0L9 2.5V8.5L4.5 11L0 8.5V2.5Z" fill="#b040c8"/><path d="M4.5 0L9 2.5L4.5 5L0 2.5Z" fill="#f4a8fa"/><path d="M4.5 5V11L0 8.5V2.5Z" fill="#d878e8"/></svg>
</div>
<div style="left:265px;top:690px;width:16px;height:418px;background:#ebeae4"></div>
<div style="left:265px;top:690px;width:16px;height:16px;background:#ebe9e0;border-top:1px solid #fff;border-left:1px solid #fff;border-right:1px solid #808080;border-bottom:1px solid #808080;box-shadow:inset -1px -1px 0 #c8c6bc"></div>
<svg style="left:265px;top:690px;" width="16" height="16" viewBox="0 0 16 16"><path d="M4.0 10.0H12.0L8.0 6.0Z" fill="#000"/></svg>
<div style="left:265px;top:1092px;width:16px;height:16px;background:#ebe9e0;border-top:1px solid #fff;border-left:1px solid #fff;border-right:1px solid #808080;border-bottom:1px solid #808080;box-shadow:inset -1px -1px 0 #c8c6bc"></div>
<svg style="left:265px;top:1092px;" width="16" height="16" viewBox="0 0 16 16"><path d="M4.0 6.0H12.0L8.0 10.0Z" fill="#000"/></svg>
<div style="left:265px;top:706px;width:16px;height:77px;background:#e6e4da;border-top:1px solid #fff;border-left:1px solid #fff;border-right:1px solid #808080;border-bottom:1px solid #808080;box-shadow:inset -1px -1px 0 #c8c6bc"></div>
<div style="left:6px;top:1108px;width:259px;height:16px;background:#ebeae4"></div>
<div style="left:6px;top:1108px;width:16px;height:16px;background:#ebe9e0;border-top:1px solid #fff;border-left:1px solid #fff;border-right:1px solid #808080;border-bottom:1px solid #808080;box-shadow:inset -1px -1px 0 #c8c6bc"></div>
<svg style="left:6px;top:1108px;" width="16" height="16" viewBox="0 0 16 16"><path d="M10.0 4.0V12.0L6.0 8.0Z" fill="#000"/></svg>
<div style="left:249px;top:1108px;width:16px;height:16px;background:#ebe9e0;border-top:1px solid #fff;border-left:1px solid #fff;border-right:1px solid #808080;border-bottom:1px solid #808080;box-shadow:inset -1px -1px 0 #c8c6bc"></div>
<svg style="left:249px;top:1108px;" width="16" height="16" viewBox="0 0 16 16"><path d="M6.0 4.0V12.0L10.0 8.0Z" fill="#000"/></svg>
<div style="left:22px;top:1108px;width:114px;height:16px;background:#e6e4da;border-top:1px solid #fff;border-left:1px solid #fff;border-right:1px solid #808080;border-bottom:1px solid #808080;box-shadow:inset -1px -1px 0 #c8c6bc"></div>
<div style="left:265px;top:1108px;width:16px;height:16px;background:#ece9d8"></div>
<div style="left:6px;top:1124px;width:56px;height:21px;background:#f8f9fb;border-radius:0 0 3px 3px"></div>
<svg style="left:11px;top:1127px;" width="17" height="16" viewBox="0 0 17 16"><rect x="0.5" y="0.5" width="13" height="10" fill="#e8eef8" stroke="#5a6a8a"/><path d="M5 2L8 5L5 8L2 5Z" fill="#f0c040"/><path d="M11 6L14 9L11 12L8 9Z" fill="#e070e0"/><path d="M9 10L12 13L9 16L6 13Z" fill="#3a8ad8"/></svg>
<div class="t" style="left:31px;top:1128px;">Cla...</div>
<svg style="left:66px;top:1127px;" width="16" height="16" viewBox="0 0 16 16"><rect x="0.5" y="3.5" width="15" height="11" fill="#f6f8fc" stroke="#5a6a8a"/><path d="M4 6L7 9L4 12L1 9Z" fill="#f0c040"/><path d="M11 7L14 10L11 13L8 10Z" fill="#e070e0"/><path d="M11 0L14 3L11 6L8 3Z" fill="#3a8ad8"/></svg>
<div class="t" style="left:86px;top:1128px;color:#fff">Ob...</div>
<svg style="left:121px;top:1127px;" width="16" height="16" viewBox="0 0 16 16"><path d="M2 15L10 5" stroke="#d03030" stroke-width="2.2"/><path d="M3 3L13 14" stroke="#c8d0d8" stroke-width="1.6"/><path d="M6 1C9 1 13 3 15 6L12 7C10 5 8 4 6 4Z" fill="#c8d0d8"/><circle cx="3" cy="3" r="2.3" fill="none" stroke="#c8d0d8" stroke-width="1.4"/></svg>
<div class="t" style="left:141px;top:1128px;color:#fff">To...</div>
<svg style="left:176px;top:1126px;" width="17" height="16" viewBox="0 0 17 16"><rect x="0.5" y="0.5" width="9" height="7" fill="#5a9ae8" stroke="#c8d8f0"/><rect x="6.5" y="4.5" width="10" height="8" fill="#5a9ae8" stroke="#c8d8f0"/><rect x="0" y="10" width="8" height="3" fill="#e0e8f0"/><rect x="7" y="13" width="9" height="3" fill="#e0e8f0"/></svg>
<div class="t" style="left:196px;top:1128px;color:#fff">Ser...</div>
<svg style="left:231px;top:1127px;" width="15" height="16" viewBox="0 0 15 16"><rect x="0.5" y="0.5" width="13" height="14" fill="#f0f4fa" stroke="#8a9ab8"/><path d="M3 4H11M3 7H11M3 10H11" stroke="#5a7ab0"/></svg>
<div class="t" style="left:250px;top:1128px;color:#fff">Do...</div>
<div style="left:287px;top:72px;width:124px;height:22px;background:linear-gradient(#fbfcfe,#eef1f7 60%,#e1e6ef);border-radius:2px 2px 0 0"></div>
<div class="t" style="left:291px;top:77px;">Object_list.aspx.vb</div>
<svg style="left:397px;top:78px;" width="9" height="9" viewBox="0 0 9 9"><path d="M0.5 0.5L8.5 8.5M8.5 0.5L0.5 8.5" stroke="#5a5f68" stroke-width="1.4"/></svg>
<div class="t" style="left:415px;top:77px;color:#fff">App_Code/ObjListParameters.vb</div>
<div class="t" style="left:604px;top:77px;color:#fff">OneBestObject.ascx.vb</div>
<div class="t" style="left:750px;top:77px;color:#fff">App_Code/OneBestObjectCommon.vb</div>
<div class="t" style="left:965px;top:77px;color:#fff">App_Code/prob.vb</div>
<svg style="left:1222px;top:77px;" width="11" height="11" viewBox="0 0 11 11"><path d="M0 1H10" stroke="#dfe4ee" stroke-width="1.5"/><path d="M0 4H10L5 9Z" fill="#dfe4ee"/></svg>
<div style="left:287px;top:92px;width:950px;height:5px;background:#d5dceb"></div>
<div style="left:287px;top:97px;width:950px;height:22px;background:#d5dceb"></div>
<div style="left:288px;top:97px;width:473px;height:21px;background:linear-gradient(#fdfdfd,#f0f1f3);border:1px solid #5f6d8a"></div>
<svg style="left:311px;top:100px;" width="12" height="15" viewBox="0 0 12 15"><path d="M5 0H11L7 6H10L2 15L5 8H2Z" fill="#f4b830" stroke="#c07010" stroke-width="0.6"/></svg>
<div class="t" style="left:326px;top:101px;">(Page Events)</div>
<svg style="left:751px;top:107px;" width="5" height="3" viewBox="0 0 5 3"><path d="M0 0H5L2.5 3Z" fill="#000"/></svg>
<div style="left:762px;top:97px;width:475px;height:21px;background:linear-gradient(#fdfdfd,#f0f1f3);border:1px solid #5f6d8a"></div>
<svg style="left:767px;top:100px;" width="12" height="15" viewBox="0 0 12 15"><path d="M5 0H11L7 6H10L2 15L5 8H2Z" fill="#f4b830" stroke="#c07010" stroke-width="0.6"/></svg>
<div class="t" style="left:783px;top:101px;font-weight:bold">Load</div>
<svg style="left:1226px;top:107px;" width="5" height="3" viewBox="0 0 5 3"><path d="M0 0H5L2.5 3Z" fill="#000"/></svg>
<div style="left:287px;top:119px;width:933px;height:968px;background:#f9fbfa"></div>
<div style="left:287px;top:119px;width:17px;height:968px;background:#e7e5de"></div>
<div style="left:369px;top:144px;width:1px;height:943px;background:#a8a8a8"></div>
<div style="left:373px;top:170px;width:847px;height:1px;background:#c8c8c8"></div>
<div style="left:287px;top:119px;width:933px;height:968px;overflow:hidden">
<div class="m" style="left:48px;top:0px;color:#2b91af">1</div>
<div class="m" style="left:88px;top:0px;color:#000"><span class="cm">'Response.Redirect("Object_list.aspx?Country=" &amp; cbCountry.SelectedValue.Trim &amp; "&amp;City=" &amp; cbCity.SelectedValue.Trim</span></div>
<div class="m" style="left:48px;top:17px;color:#2b91af">2</div>
<div class="m" style="left:88px;top:17px;color:#000"><span class="kw">Partial Class </span><span class="ty">Object_list</span></div>
<div class="m" style="left:48px;top:34px;color:#2b91af">3</div>
<div class="m" style="left:120px;top:34px;color:#000"><span class="kw">Inherits </span><span class="ty">MobilePage</span></div>
<div class="m" style="left:48px;top:51px;color:#2b91af">4</div>
<div class="m" style="left:88px;top:51px;color:#000"></div>
<div class="m" style="left:48px;top:68px;color:#2b91af">5</div>
<div style="left:120px;top:69px;width:820px;height:17px;border:1px solid #808080;border-right:none"></div>
<div class="m" style="left:120px;top:68px;color:#000"><span class="gr">Public Shared Function GetObjListToNextPage(CountryID As String, KurortID As String, Type As String, KurortID</span></div>
<div class="m" style="left:40px;top:85px;color:#2b91af">38</div>
<div class="m" style="left:88px;top:85px;color:#000"></div>
<div class="m" style="left:40px;top:102px;color:#2b91af">39</div>
<div class="m" style="left:120px;top:102px;color:#000"><span class="cm">'</span></div>
<div class="m" style="left:40px;top:119px;color:#2b91af">40</div>
<div class="m" style="left:120px;top:119px;color:#000"><span class="kw">Protected Sub </span>Page_Load(<span class="kw">ByVal </span>sender <span class="kw">As Object</span>, <span class="kw">ByVal </span>e <span class="kw">As </span>System.<span class="ty">EventArgs</span>) <span class="kw">Handles Me</span>.Load</div>
<div class="m" style="left:40px;top:136px;color:#2b91af">41</div>
<div class="m" style="left:152px;top:136px;color:#000"><span class="kw" style="background:#dfe1d5;display:inline-block;height:17px;vertical-align:top">If</span> <span class="kw">Me</span>.IsMobile <span class="kw" style="background:#dfe1d5;display:inline-block;height:17px;vertical-align:top">Then</span></div>
<div class="m" style="left:40px;top:153px;color:#2b91af">42</div>
<div class="m" style="left:184px;top:153px;color:#000"><span class="kw">If Not </span>IsPostBack <span class="kw">Then</span></div>
<div class="m" style="left:40px;top:170px;color:#2b91af">43</div>
<div class="m" style="left:216px;top:170px;color:#000">ParseQueryString()</div>
<div class="m" style="left:40px;top:187px;color:#2b91af">44</div>
<div style="left:88px;top:187px;width:26px;height:17px;border:1px solid #808080"></div>
<div class="m" style="left:89px;top:187px;color:#000"><span class="gr">...</span></div>
<div class="m" style="left:40px;top:204px;color:#2b91af">52</div>
<div class="m" style="left:216px;top:204px;color:#000">GetObjectPage.SelectParameters(<span class="st">"PageNum"</span>).DefaultValue = 0</div>
<div class="m" style="left:40px;top:221px;color:#2b91af">53</div>
<div class="m" style="left:216px;top:221px;color:#000"><span class="kw">Dim </span>DV2 <span class="kw">As </span>Data.<span class="ty">DataView</span> = GetObjectPage.Select(<span class="kw">New </span><span class="ty">DataSourceSelectArguments</span>)</div>
<div class="m" style="left:40px;top:238px;color:#2b91af">54</div>
<div class="m" style="left:216px;top:238px;color:#000"><span class="kw">If </span>DV2 <span class="kw">IsNot Nothing Then</span></div>
<div class="m" style="left:40px;top:255px;color:#2b91af">55</div>
<div class="m" style="left:248px;top:255px;color:#000">DataList2.DataSource = DV2</div>
<div class="m" style="left:40px;top:272px;color:#2b91af">56</div>
<div class="m" style="left:248px;top:272px;color:#000">DataList2.DataBind()</div>
<div class="m" style="left:40px;top:289px;color:#2b91af">57</div>
<div class="m" style="left:248px;top:289px;color:#000">ShowObjCount.Text = DV2.Count</div>
<div class="m" style="left:40px;top:306px;color:#2b91af">58</div>
<div class="m" style="left:216px;top:306px;color:#000"><span class="kw">End If</span></div>
<div class="m" style="left:40px;top:323px;color:#2b91af">59</div>
<div class="m" style="left:216px;top:323px;color:#000">CurPageNumber.Text = <span class="kw">CInt</span>(GetObjectPage.SelectParameters(<span class="st">"PageNum"</span>).DefaultValue) + 1</div>
<div class="m" style="left:40px;top:340px;color:#2b91af">60</div>
<div class="m" style="left:216px;top:340px;color:#000">TotalObjCount.Text = GetTotalRow()</div>
<div class="m" style="left:40px;top:357px;color:#2b91af">61</div>
<div class="m" style="left:216px;top:357px;color:#000">Literal1.Text = TotalObjCount.Text            <span class="cm">'</span></div>
<div class="m" style="left:40px;top:374px;color:#2b91af">62</div>
<div class="m" style="left:216px;top:374px;color:#000"><span class="cm">'</span></div>
<div class="m" style="left:40px;top:391px;color:#2b91af">63</div>
<div class="m" style="left:216px;top:391px;color:#000"><span class="kw">Dim </span>E2 <span class="kw">As New </span><span class="ty">ObjListParameters</span></div>
<div class="m" style="left:40px;top:408px;color:#2b91af">64</div>
<div class="m" style="left:216px;top:408px;color:#000">E2.CheckRedirect()</div>
<div class="m" style="left:40px;top:425px;color:#2b91af">65</div>
<div class="m" style="left:216px;top:425px;color:#000">SetMetaTagAndTitle(E2)</div>
<div class="m" style="left:40px;top:442px;color:#2b91af">66</div>
<div class="m" style="left:216px;top:442px;color:#000">SetMobileLabel(E2)</div>
<div class="m" style="left:40px;top:459px;color:#2b91af">67</div>
<div class="m" style="left:184px;top:459px;color:#000"><span class="kw">End If</span></div>
<div class="m" style="left:40px;top:476px;color:#2b91af">68</div>
<div class="m" style="left:152px;top:476px;color:#000"><span class="kw" style="background:#dfe1d5;display:inline-block;height:17px;vertical-align:top">Else</span></div>
<div class="m" style="left:40px;top:493px;color:#2b91af">69</div>
<div class="m" style="left:184px;top:493px;color:#000">Navigator1.NavigateList(<span class="st">"Аренда"</span>, <span class="st">"//arenda.votpusk.ru"</span>)</div>
<div class="m" style="left:40px;top:510px;color:#2b91af">70</div>
<div class="m" style="left:184px;top:510px;color:#000"><span class="kw">If Not </span>IsPostBack <span class="kw">Then</span></div>
<div class="m" style="left:40px;top:527px;color:#2b91af">71</div>
<div class="m" style="left:216px;top:527px;color:#000"><span class="cm">'</span></div>
<div class="m" style="left:40px;top:544px;color:#2b91af">72</div>
<div class="m" style="left:216px;top:544px;color:#000"><span class="kw">If </span>Request.QueryString(<span class="st">"p"</span>) <span class="kw">Is Nothing Then</span></div>
<div class="m" style="left:40px;top:561px;color:#2b91af">73</div>
<div class="m" style="left:248px;top:561px;color:#000">ParseQueryString()</div>
<div class="m" style="left:40px;top:578px;color:#2b91af">74</div>
<div class="m" style="left:248px;top:578px;color:#000">FillPagerAndOneDataPage(0)</div>
<div class="m" style="left:40px;top:595px;color:#2b91af">75</div>
<div class="m" style="left:216px;top:595px;color:#000"><span class="kw">ElseIf </span>Request.QueryString(<span class="st">"p"</span>) = <span class="st">""</span> <span class="kw">Then</span></div>
<div class="m" style="left:40px;top:612px;color:#2b91af">76</div>
<div class="m" style="left:248px;top:612px;color:#000">ParseQueryString()</div>
<div class="m" style="left:40px;top:629px;color:#2b91af">77</div>
<div class="m" style="left:248px;top:629px;color:#000">FillPagerAndOneDataPage(0)</div>
<div class="m" style="left:40px;top:646px;color:#2b91af">78</div>
<div class="m" style="left:216px;top:646px;color:#000"><span class="kw">ElseIf </span>Request.QueryString(<span class="st">"p"</span>) = <span class="st">"0"</span> <span class="kw">Then</span></div>
<div class="m" style="left:40px;top:663px;color:#2b91af">79</div>
<div class="m" style="left:248px;top:663px;color:#000">ParseQueryString()</div>
<div class="m" style="left:40px;top:680px;color:#2b91af">80</div>
<div class="m" style="left:248px;top:680px;color:#000">FillPagerAndOneDataPage(0)</div>
<div class="m" style="left:40px;top:697px;color:#2b91af">81</div>
<div class="m" style="left:216px;top:697px;color:#000"><span class="kw">ElseIf </span>IsNumeric(Request.QueryString(<span class="st">"p"</span>)) = <span class="kw">False Then</span></div>
<div class="m" style="left:40px;top:714px;color:#2b91af">82</div>
<div class="m" style="left:248px;top:714px;color:#000">ParseQueryString()</div>
<div class="m" style="left:40px;top:731px;color:#2b91af">83</div>
<div class="m" style="left:248px;top:731px;color:#000">FillPagerAndOneDataPage(0)</div>
<div class="m" style="left:40px;top:748px;color:#2b91af">84</div>
<div class="m" style="left:216px;top:748px;color:#000"><span class="kw">Else</span></div>
<div class="m" style="left:40px;top:765px;color:#2b91af">85</div>
<div class="m" style="left:248px;top:765px;color:#000">ParseQueryString()</div>
<div class="m" style="left:40px;top:782px;color:#2b91af">86</div>
<div class="m" style="left:248px;top:782px;color:#000">FillPagerAndOneDataPage(<span class="kw">CInt</span>(Request.QueryString(<span class="st">"p"</span>)))</div>
<div class="m" style="left:40px;top:799px;color:#2b91af">87</div>
<div class="m" style="left:216px;top:799px;color:#000"><span class="kw">End If</span></div>
<div class="m" style="left:40px;top:816px;color:#2b91af">88</div>
<div class="m" style="left:216px;top:816px;color:#000"><span class="cm">'</span></div>
<div class="m" style="left:40px;top:833px;color:#2b91af">89</div>
<div class="m" style="left:216px;top:833px;color:#000"><span class="kw">Dim </span>E2 <span class="kw">As New </span><span class="ty">ObjListParameters</span></div>
<div class="m" style="left:40px;top:850px;color:#2b91af">90</div>
<div class="m" style="left:216px;top:850px;color:#000">E2.CheckRedirect()</div>
<div class="m" style="left:40px;top:867px;color:#2b91af">91</div>
<div class="m" style="left:216px;top:867px;color:#000">SetMetaTagAndTitle(E2)</div>
<div class="m" style="left:40px;top:884px;color:#2b91af">92</div>
<div class="m" style="left:216px;top:884px;color:#000">SetDesktopLabel(E2)</div>
<div class="m" style="left:40px;top:901px;color:#2b91af">93</div>
<div class="m" style="left:184px;top:901px;color:#000"><span class="kw">End If</span></div>
<div class="m" style="left:40px;top:918px;color:#2b91af">94</div>
<div class="m" style="left:184px;top:918px;color:#000"><span class="cm">'</span></div>
<div class="m" style="left:40px;top:935px;color:#2b91af">95</div>
<div class="m" style="left:152px;top:935px;color:#000"><span class="kw" style="background:#dfe1d5;display:inline-block;height:17px;vertical-align:top">End If</span></div>
<div class="m" style="left:40px;top:952px;color:#2b91af">96</div>
<div class="m" style="left:88px;top:952px;color:#000"></div>
</div>
<svg style="left:364px;top:140px;" width="9" height="9" viewBox="0 0 9 9"><rect x="0.5" y="0.5" width="8" height="8" fill="#fff" stroke="#8c8c8c"/><path d="M2 4.5H7" stroke="#000"/></svg>
<svg style="left:364px;top:191px;" width="9" height="9" viewBox="0 0 9 9"><rect x="0.5" y="0.5" width="8" height="8" fill="#fff" stroke="#8c8c8c"/><path d="M2 4.5H7" stroke="#000"/><path d="M4.5 2V7" stroke="#000"/></svg>
<svg style="left:364px;top:242px;" width="9" height="9" viewBox="0 0 9 9"><rect x="0.5" y="0.5" width="8" height="8" fill="#fff" stroke="#8c8c8c"/><path d="M2 4.5H7" stroke="#000"/></svg>
<svg style="left:364px;top:310px;" width="9" height="9" viewBox="0 0 9 9"><rect x="0.5" y="0.5" width="8" height="8" fill="#fff" stroke="#8c8c8c"/><path d="M2 4.5H7" stroke="#000"/><path d="M4.5 2V7" stroke="#000"/></svg>
<div style="left:1220px;top:119px;width:17px;height:968px;background:#f1f0ea"></div>
<div style="left:1220px;top:119px;width:17px;height:17px;background:#ebe9e0;border-top:1px solid #fff;border-left:1px solid #fff;border-right:1px solid #808080;border-bottom:1px solid #808080"></div>
<svg style="left:1222px;top:120px;" width="13" height="15" viewBox="0 0 13 15"><path d="M6.5 0V15" stroke="#000"/><path d="M3 3H10L6.5 0Z M3 12H10L6.5 15Z" fill="#000"/><path d="M2 6.5H11M2 8.5H11" stroke="#000"/></svg>
<div style="left:1220px;top:136px;width:17px;height:951px;background:#ebeae4"></div>
<div style="left:1220px;top:136px;width:17px;height:16px;background:#ebe9e0;border-top:1px solid #fff;border-left:1px solid #fff;border-right:1px solid #808080;border-bottom:1px solid #808080;box-shadow:inset -1px -1px 0 #c8c6bc"></div>
<svg style="left:1220px;top:136px;" width="17" height="16" viewBox="0 0 17 16"><path d="M4.5 10.0H12.5L8.5 6.0Z" fill="#000"/></svg>
<div style="left:1220px;top:1071px;width:17px;height:16px;background:#ebe9e0;border-top:1px solid #fff;border-left:1px solid #fff;border-right:1px solid #808080;border-bottom:1px solid #808080;box-shadow:inset -1px -1px 0 #c8c6bc"></div>
<svg style="left:1220px;top:1071px;" width="17" height="16" viewBox="0 0 17 16"><path d="M4.5 6.0H12.5L8.5 10.0Z" fill="#000"/></svg>
<div style="left:1220px;top:152px;width:17px;height:108px;background:#e6e4da;border-top:1px solid #fff;border-left:1px solid #fff;border-right:1px solid #808080;border-bottom:1px solid #808080;box-shadow:inset -1px -1px 0 #c8c6bc"></div>
<div style="left:287px;top:1087px;width:933px;height:17px;background:#f1f0ea"></div>
<div style="left:288px;top:1087px;width:57px;height:17px;background:#fff;border:1px solid #e0e0e0"></div>
<div class="t" style="left:291px;top:1090px;">100 %</div>
<svg style="left:337px;top:1095px;" width="5" height="3" viewBox="0 0 5 3"><path d="M0 0H5L2.5 3Z" fill="#000"/></svg>
<div style="left:347px;top:1087px;width:873px;height:17px;background:#ebeae4"></div>
<div style="left:347px;top:1087px;width:16px;height:17px;background:#ebe9e0;border-top:1px solid #fff;border-left:1px solid #fff;border-right:1px solid #808080;border-bottom:1px solid #808080;box-shadow:inset -1px -1px 0 #c8c6bc"></div>
<svg style="left:347px;top:1087px;" width="16" height="17" viewBox="0 0 16 17"><path d="M10.0 4.5V12.5L6.0 8.5Z" fill="#000"/></svg>
<div style="left:1204px;top:1087px;width:16px;height:17px;background:#ebe9e0;border-top:1px solid #fff;border-left:1px solid #fff;border-right:1px solid #808080;border-bottom:1px solid #808080;box-shadow:inset -1px -1px 0 #c8c6bc"></div>
<svg style="left:1204px;top:1087px;" width="16" height="17" viewBox="0 0 16 17"><path d="M6.0 4.5V12.5L10.0 8.5Z" fill="#000"/></svg>
<div style="left:362px;top:1087px;width:166px;height:17px;background:#e6e4da;border-top:1px solid #fff;border-left:1px solid #fff;border-right:1px solid #808080;border-bottom:1px solid #808080;box-shadow:inset -1px -1px 0 #c8c6bc"></div>
<div style="left:1220px;top:1087px;width:17px;height:17px;background:#fff"></div>
<div style="left:287px;top:1104px;width:950px;height:3px;background:#d5dceb"></div>
<div style="left:287px;top:1114px;width:950px;height:19px;background:linear-gradient(#52668b,#475c84 60%,#3f5580);border-bottom:1px solid #36507a"></div>
<div class="t" style="left:289px;top:1118px;color:#fff">Output</div>
<svg style="left:1193px;top:1121px;" width="9" height="5" viewBox="0 0 9 5"><path d="M0 0H9L4.5 5Z" fill="#e8ecf4"/></svg>
<svg style="left:1207px;top:1117px;" width="9" height="13" viewBox="0 0 9 13"><path d="M2.5 0.5H6.5V7.5H2.5Z M0 7.5H9 M4.5 8V13" fill="none" stroke="#e8ecf4" stroke-width="1.3"/></svg>
<svg style="left:1222px;top:1118px;" width="10" height="10" viewBox="0 0 10 10"><path d="M1 1L9 9M9 1L1 9" stroke="#e8ecf4" stroke-width="1.4"/></svg>
<div style="left:287px;top:1133px;width:950px;height:12px;overflow:hidden">
<div style="left:428px;top:0px;width:64px;height:12px;background:#f8f9fb"></div>
<svg style="left:4px;top:1px;" width="15" height="14" viewBox="0 0 15 14"><rect x="0.5" y="0.5" width="14" height="13" fill="#f0f4fa" stroke="#5a7ab0"/><rect x="1" y="1" width="13" height="2" fill="#4a7bd0"/><path d="M3 6.5H11M3 9.5H11" stroke="#5a7ab0"/></svg>
<div class="t" style="left:24px;top:5px;color:#fff">Pending Changes</div>
<svg style="left:118px;top:1px;" width="15" height="14" viewBox="0 0 15 14"><rect x="0.5" y="0.5" width="14" height="13" fill="#4a4a4a" stroke="#e0e0e0"/><rect x="2" y="3" width="11" height="9" fill="#2a3a58"/><text x="2" y="10" font-family="Liberation Mono" font-size="8" fill="#e0e0e0">C:\</text></svg>
<div class="t" style="left:137px;top:5px;color:#fff">Package Manager Console</div>
<svg style="left:275px;top:1px;" width="15" height="14" viewBox="0 0 15 14"><rect x="1.5" y="2.5" width="11" height="11" fill="#f6f6f6" stroke="#8a9ab8"/><rect x="4.5" y="0.5" width="5" height="3" fill="#e8c050" stroke="#a07810"/><circle cx="11" cy="11" r="3.5" fill="#e04030"/></svg>
<div class="t" style="left:293px;top:5px;color:#fff">Error List</div>
<svg style="left:346px;top:1px;" width="15" height="14" viewBox="0 0 15 14"><rect x="0.5" y="1.5" width="14" height="12" fill="#f0f4fa" stroke="#5a7ab0"/><rect x="1" y="2" width="13" height="2" fill="#4a7bd0"/><circle cx="10.5" cy="10" r="3.5" fill="#d03020"/></svg>
<div class="t" style="left:366px;top:5px;color:#fff">Breakpoints</div>
<svg style="left:433px;top:1px;" width="15" height="14" viewBox="0 0 15 14"><rect x="0.5" y="0.5" width="14" height="13" fill="#f0f4fa" stroke="#5a7ab0"/><rect x="1" y="1" width="13" height="2" fill="#4a7bd0"/><path d="M3 6.5H11M3 9.5H11" stroke="#5a7ab0"/></svg>
<div class="t" style="left:453px;top:5px;color:#000">Output</div>
<svg style="left:496px;top:1px;" width="15" height="14" viewBox="0 0 15 14"><rect x="0.5" y="0.5" width="14" height="13" fill="#f0f4fa" stroke="#5a7ab0"/><rect x="1" y="1" width="13" height="2" fill="#4a7bd0"/><path d="M3 6.5H11M3 9.5H11" stroke="#5a7ab0"/></svg>
<div class="t" style="left:516px;top:5px;color:#fff">Find Results 1</div>
<svg style="left:593px;top:1px;" width="15" height="14" viewBox="0 0 15 14"><rect x="0.5" y="0.5" width="14" height="13" fill="#f0f4fa" stroke="#5a7ab0"/><rect x="1" y="1" width="13" height="2" fill="#4a7bd0"/><path d="M3 6.5H11M3 9.5H11" stroke="#5a7ab0"/></svg>
<div class="t" style="left:613px;top:5px;color:#fff">Find Results 2</div>
<svg style="left:693px;top:1px;" width="15" height="14" viewBox="0 0 15 14"><rect x="0.5" y="3.5" width="13" height="10" fill="#f0f4fa" stroke="#5a7ab0"/><path d="M3 6L6 9L12 1" stroke="#2a6ad8" stroke-width="2" fill="none"/></svg>
<div class="t" style="left:710px;top:5px;color:#fff">Find Symbol Results</div>
</div>
<div style="left:1243px;top:72px;width:351px;height:19px;background:linear-gradient(#fffdf0 0%,#fff6d2 45%,#fce8a8 52%,#fbe59c 100%);border-radius:2px 2px 0 0"></div>
<div class="t" style="left:1245px;top:76px;color:#000">Solution Explorer</div>
<svg style="left:1550px;top:79px;" width="9" height="5" viewBox="0 0 9 5"><path d="M0 0H9L4.5 5Z" fill="#5a4a2a"/></svg>
<svg style="left:1564px;top:75px;" width="9" height="13" viewBox="0 0 9 13"><path d="M2.5 0.5H6.5V7.5H2.5Z M0 7.5H9 M4.5 8V13" fill="none" stroke="#5a4a2a" stroke-width="1.3"/></svg>
<svg style="left:1579px;top:76px;" width="10" height="10" viewBox="0 0 10 10"><path d="M1 1L9 9M9 1L1 9" stroke="#5a4a2a" stroke-width="1.4"/></svg>
<div style="left:1243px;top:91px;width:351px;height:26px;background:#bcc7d9;border-top:1px solid #cbd5e5"></div>
<svg style="left:1250px;top:96px;" width="16" height="16" viewBox="0 0 16 16"><rect x="0.5" y="0.5" width="10" height="11" fill="#fbf6dc" stroke="#9a9a9a"/><rect x="1" y="1" width="9" height="2" fill="#f0d890"/><path d="M2.5 5H4M5 5H9M2.5 7H4M5 7H9M2.5 9H4" stroke="#6a8ac0"/><rect x="4.5" y="8.5" width="11" height="7" fill="#fff" stroke="#3c5a9a"/><path d="M6 10.5H7M9 10.5H14M6 12.5H7M9 12.5H14" stroke="#3a5a9a"/></svg>
<div style="left:1272px;top:97px;width:1px;height:17px;background:#8d99b3"></div>
<svg style="left:1279px;top:96px;" width="16" height="16" viewBox="0 0 16 16"><rect x="0.5" y="1.5" width="15" height="13" fill="#f4f7fc" stroke="#3c5a9a"/><rect x="1" y="2" width="14" height="2" fill="#4a7bd0"/><path d="M4 9C4 6 10 5 11 7M12 9C12 12 6 12 5 10" fill="none" stroke="#40a030" stroke-width="1.6"/><path d="M10 5L12 7.5L9 8Z M6 12L4 9.5L7 9Z" fill="#40a030"/></svg>
<div style="left:1299px;top:94px;width:22px;height:22px;background:#ffe8a6;border:1px solid #e5c365"></div>
<svg style="left:1302px;top:97px;" width="16" height="16" viewBox="0 0 16 16"><path d="M1.5 0.5H6L8.5 3V9.5H1.5Z" fill="#fff" stroke="#3c5a9a"/><path d="M3 5H7M3 7H7" stroke="#3a6ad8"/><path d="M7.5 6.5H12L14.5 9V15.5H7.5Z" fill="#fff" stroke="#3c5a9a"/><path d="M9 11H13M9 13H13" stroke="#3a6ad8"/><path d="M2 9V13H6" stroke="#0020c0" fill="none" stroke-width="1.3"/><path d="M5 11L8 13L5 15Z" fill="#0020c0"/></svg>
<div style="left:1325px;top:97px;width:1px;height:17px;background:#8d99b3"></div>
<svg style="left:1331px;top:97px;" width="15" height="14" viewBox="0 0 15 14"><rect x="0.5" y="0.5" width="14" height="13" fill="#f0f4fa" stroke="#4a5a7a"/><rect x="1" y="1" width="13" height="2" fill="#a0b8e0"/><path d="M3 6H6M8 6H12M3 9H6M8 9H12" stroke="#5a7ab0"/></svg>
<div style="left:1352px;top:97px;width:1px;height:17px;background:#8d99b3"></div>
<svg style="left:1358px;top:96px;" width="17" height="17" viewBox="0 0 17 17"><rect x="0.5" y="0.5" width="11" height="10" fill="#f0f4fa" stroke="#4a5a7a"/><rect x="4.5" y="4.5" width="12" height="12" fill="#fff" stroke="#4a5a7a"/><circle cx="10.5" cy="10.5" r="3" fill="#3a9ad0"/><circle cx="10.5" cy="10.5" r="1.5" fill="#40b040"/></svg>
<svg style="left:1380px;top:96px;" width="16" height="17" viewBox="0 0 16 17"><rect x="3" y="6" width="3" height="10" fill="#d02020"/><path d="M0 7L6 1L9 4" stroke="#7a8088" stroke-width="1.8" fill="none"/><circle cx="11" cy="8" r="5" fill="#3a8ad8"/><path d="M8 5C10 7 9 10 12 12M11 3C13 5 15 6 15 8" stroke="#30a030" stroke-width="1.8" fill="none"/></svg>
<div style="left:1243px;top:117px;width:351px;height:920px;background:#f9fbfa"></div>
<div style="left:1243px;top:117px;width:333px;height:920px;overflow:hidden">
<svg style="left:8px;top:5px;" width="9" height="9" viewBox="0 0 9 9"><rect x="0.5" y="0.5" width="8" height="8" fill="#fff" stroke="#8c8c8c"/><path d="M2 4.5H7" stroke="#000"/><path d="M4.5 2V7" stroke="#000"/></svg>
<svg style="left:23px;top:5px;" width="8" height="8" viewBox="0 0 8 8"><path d="M0.5 4.5L3 7.5L7.5 0.8" fill="none" stroke="#2a5ad0" stroke-width="1.8"/></svg>
<svg style="left:33px;top:1px;" width="15" height="16" viewBox="0 0 15 16"><defs><linearGradient id="ga" x1="0" y1="0" x2="1" y2="1"><stop offset="0" stop-color="#fffbe6"/><stop offset="1" stop-color="#f6d878"/></linearGradient></defs><rect x="0.5" y="0.5" width="13" height="13" fill="url(#ga)" stroke="#4a5a7a"/><path d="M3 2.5H11" stroke="#3a6ad8"/><rect x="2" y="2" width="1.5" height="1.5" fill="#e02020"/><path d="M3 2.5H11" stroke="#3a6ad8"/><rect x="2" y="2" width="1.5" height="1.5" fill="#e02020"/><path d="M2.5 5.5H4M2.5 7.5H4M2.5 9.5H4" stroke="#5a7ab0"/><path d="M6.5 5V12" stroke="#8a9ab0"/><path d="M8 7.5H11M8 10.5H11" stroke="#5a7ab0"/></svg>
<div class="t" style="left:51px;top:3px;">Object_info_all.aspx</div>
<svg style="left:23px;top:21px;" width="8" height="8" viewBox="0 0 8 8"><path d="M0.5 4.5L3 7.5L7.5 0.8" fill="none" stroke="#2a5ad0" stroke-width="1.8"/></svg>
<svg style="left:31px;top:17px;" width="17" height="16" viewBox="0 0 17 16"><path d="M4.5 0.5H12L15.5 4V14.5H4.5Z" fill="#f8faff" stroke="#3c5a9a"/><path d="M12 0.5V4H15.5" fill="#dde6f4" stroke="#3c5a9a"/><path d="M2 4C2 2.5 9 2.5 9 4V9.5C9 11 2 11 2 9.5Z" fill="#f2d070" stroke="#a88020" stroke-width="0.8"/><path d="M0.5 10C0.5 8.5 8 8.5 8 10V11.5H0.5Z" fill="#e8c050" stroke="#a88020" stroke-width="0.8"/><path d="M4 5H7M4 7H7" stroke="#a88020" stroke-width="0.8"/></svg>
<div class="t" style="left:51px;top:19px;">Object_info_all_Mobile.js</div>
<svg style="left:8px;top:37px;" width="9" height="9" viewBox="0 0 9 9"><rect x="0.5" y="0.5" width="8" height="8" fill="#fff" stroke="#8c8c8c"/><path d="M2 4.5H7" stroke="#000"/></svg>
<svg style="left:23px;top:37px;" width="8" height="8" viewBox="0 0 8 8"><path d="M0.5 4.5L3 7.5L7.5 0.8" fill="none" stroke="#2a5ad0" stroke-width="1.8"/></svg>
<svg style="left:33px;top:33px;" width="15" height="16" viewBox="0 0 15 16"><defs><linearGradient id="ga" x1="0" y1="0" x2="1" y2="1"><stop offset="0" stop-color="#fffbe6"/><stop offset="1" stop-color="#f6d878"/></linearGradient></defs><rect x="0.5" y="0.5" width="13" height="13" fill="url(#ga)" stroke="#4a5a7a"/><path d="M3 2.5H11" stroke="#3a6ad8"/><rect x="2" y="2" width="1.5" height="1.5" fill="#e02020"/><path d="M3 2.5H11" stroke="#3a6ad8"/><rect x="2" y="2" width="1.5" height="1.5" fill="#e02020"/><path d="M2.5 5.5H4M2.5 7.5H4M2.5 9.5H4" stroke="#5a7ab0"/><path d="M6.5 5V12" stroke="#8a9ab0"/><path d="M8 7.5H11M8 10.5H11" stroke="#5a7ab0"/></svg>
<div class="t" style="left:51px;top:35px;">Object_list.aspx</div>
<svg style="left:42px;top:53px;" width="8" height="8" viewBox="0 0 8 8"><path d="M0.5 4.5L3 7.5L7.5 0.8" fill="none" stroke="#2a5ad0" stroke-width="1.8"/></svg>
<svg style="left:51px;top:49px;" width="15" height="16" viewBox="0 0 15 16"><path d="M3.5 1.5H11L14.5 5V14.5H3.5Z" fill="#f8faff" stroke="#3c5a9a"/><path d="M11 1.5V5H14.5" fill="#dde6f4" stroke="#3c5a9a"/><path d="M6 9.5H12M6 11.5H12M7 13H12" stroke="#4a7bd0"/><path d="M1.2 0.5C0.5 3 1.5 6.5 5 6.5H6" fill="none" stroke="#3a7ad8" stroke-width="1.7"/><path d="M5.5 3.5L9 6.5L5.5 9.5Z" fill="#3a7ad8"/></svg>
<div style="left:69px;top:49px;width:99px;height:16px;background:#0a246a;outline:1px dotted #c0a060;outline-offset:-1px"></div>
<div class="t" style="left:70px;top:51px;color:#fff">Object_list.aspx.vb</div>
<svg style="left:23px;top:69px;" width="8" height="8" viewBox="0 0 8 8"><path d="M0.5 4.5L3 7.5L7.5 0.8" fill="none" stroke="#2a5ad0" stroke-width="1.8"/></svg>
<svg style="left:31px;top:65px;" width="17" height="16" viewBox="0 0 17 16"><path d="M4.5 0.5H12L15.5 4V14.5H4.5Z" fill="#f8faff" stroke="#3c5a9a"/><path d="M12 0.5V4H15.5" fill="#dde6f4" stroke="#3c5a9a"/><path d="M2 4C2 2.5 9 2.5 9 4V9.5C9 11 2 11 2 9.5Z" fill="#f2d070" stroke="#a88020" stroke-width="0.8"/><path d="M0.5 10C0.5 8.5 8 8.5 8 10V11.5H0.5Z" fill="#e8c050" stroke="#a88020" stroke-width="0.8"/><path d="M4 5H7M4 7H7" stroke="#a88020" stroke-width="0.8"/></svg>
<div class="t" style="left:51px;top:67px;">Object_list_Mobile.js</div>
<svg style="left:8px;top:85px;" width="9" height="9" viewBox="0 0 9 9"><rect x="0.5" y="0.5" width="8" height="8" fill="#fff" stroke="#8c8c8c"/><path d="M2 4.5H7" stroke="#000"/><path d="M4.5 2V7" stroke="#000"/></svg>
<svg style="left:23px;top:85px;" width="8" height="8" viewBox="0 0 8 8"><path d="M0.5 4.5L3 7.5L7.5 0.8" fill="none" stroke="#2a5ad0" stroke-width="1.8"/></svg>
<svg style="left:33px;top:81px;" width="15" height="16" viewBox="0 0 15 16"><rect x="0.5" y="0.5" width="13" height="13" fill="#f6ecb0" stroke="#e0a820"/><rect x="2.5" y="2.5" width="3" height="3" fill="#fff" stroke="#2a8a3a"/><rect x="2.5" y="8.5" width="3" height="3" fill="#fff" stroke="#2a8a3a"/><path d="M7 4H11M7 10H11" stroke="#5a7ab0"/></svg>
<div class="t" style="left:51px;top:83px;">OneAdmFoto.ascx</div>
<svg style="left:8px;top:101px;" width="9" height="9" viewBox="0 0 9 9"><rect x="0.5" y="0.5" width="8" height="8" fill="#fff" stroke="#8c8c8c"/><path d="M2 4.5H7" stroke="#000"/><path d="M4.5 2V7" stroke="#000"/></svg>
<svg style="left:23px;top:101px;" width="8" height="8" viewBox="0 0 8 8"><path d="M0.5 4.5L3 7.5L7.5 0.8" fill="none" stroke="#2a5ad0" stroke-width="1.8"/></svg>
<svg style="left:33px;top:97px;" width="15" height="16" viewBox="0 0 15 16"><rect x="0.5" y="0.5" width="13" height="13" fill="#f6ecb0" stroke="#e0a820"/><rect x="2.5" y="2.5" width="3" height="3" fill="#fff" stroke="#2a8a3a"/><rect x="2.5" y="8.5" width="3" height="3" fill="#fff" stroke="#2a8a3a"/><path d="M7 4H11M7 10H11" stroke="#5a7ab0"/></svg>
<div class="t" style="left:51px;top:99px;">OneAdmFotoDoc.ascx</div>
<svg style="left:8px;top:117px;" width="9" height="9" viewBox="0 0 9 9"><rect x="0.5" y="0.5" width="8" height="8" fill="#fff" stroke="#8c8c8c"/><path d="M2 4.5H7" stroke="#000"/><path d="M4.5 2V7" stroke="#000"/></svg>
<svg style="left:23px;top:117px;" width="8" height="8" viewBox="0 0 8 8"><path d="M0.5 4.5L3 7.5L7.5 0.8" fill="none" stroke="#2a5ad0" stroke-width="1.8"/></svg>
<svg style="left:33px;top:113px;" width="15" height="16" viewBox="0 0 15 16"><rect x="0.5" y="0.5" width="13" height="13" fill="#f6ecb0" stroke="#e0a820"/><rect x="2.5" y="2.5" width="3" height="3" fill="#fff" stroke="#2a8a3a"/><rect x="2.5" y="8.5" width="3" height="3" fill="#fff" stroke="#2a8a3a"/><path d="M7 4H11M7 10H11" stroke="#5a7ab0"/></svg>
<div class="t" style="left:51px;top:115px;">OneAdmFotoUser.ascx</div>
<svg style="left:8px;top:133px;" width="9" height="9" viewBox="0 0 9 9"><rect x="0.5" y="0.5" width="8" height="8" fill="#fff" stroke="#8c8c8c"/><path d="M2 4.5H7" stroke="#000"/><path d="M4.5 2V7" stroke="#000"/></svg>
<svg style="left:23px;top:133px;" width="8" height="8" viewBox="0 0 8 8"><path d="M0.5 4.5L3 7.5L7.5 0.8" fill="none" stroke="#2a5ad0" stroke-width="1.8"/></svg>
<svg style="left:33px;top:129px;" width="15" height="16" viewBox="0 0 15 16"><rect x="0.5" y="0.5" width="13" height="13" fill="#f6ecb0" stroke="#e0a820"/><rect x="2.5" y="2.5" width="3" height="3" fill="#fff" stroke="#2a8a3a"/><rect x="2.5" y="8.5" width="3" height="3" fill="#fff" stroke="#2a8a3a"/><path d="M7 4H11M7 10H11" stroke="#5a7ab0"/></svg>
<div class="t" style="left:51px;top:131px;">OneAdmObject.ascx</div>
<svg style="left:8px;top:149px;" width="9" height="9" viewBox="0 0 9 9"><rect x="0.5" y="0.5" width="8" height="8" fill="#fff" stroke="#8c8c8c"/><path d="M2 4.5H7" stroke="#000"/></svg>
<svg style="left:23px;top:149px;" width="8" height="8" viewBox="0 0 8 8"><path d="M0.5 4.5L3 7.5L7.5 0.8" fill="none" stroke="#2a5ad0" stroke-width="1.8"/></svg>
<svg style="left:33px;top:145px;" width="15" height="16" viewBox="0 0 15 16"><rect x="0.5" y="0.5" width="13" height="13" fill="#f6ecb0" stroke="#e0a820"/><rect x="2.5" y="2.5" width="3" height="3" fill="#fff" stroke="#2a8a3a"/><rect x="2.5" y="8.5" width="3" height="3" fill="#fff" stroke="#2a8a3a"/><path d="M7 4H11M7 10H11" stroke="#5a7ab0"/></svg>
<div class="t" style="left:51px;top:147px;">OneBestObject.ascx</div>
<svg style="left:42px;top:165px;" width="8" height="8" viewBox="0 0 8 8"><path d="M0.5 4.5L3 7.5L7.5 0.8" fill="none" stroke="#2a5ad0" stroke-width="1.8"/></svg>
<svg style="left:51px;top:161px;" width="15" height="16" viewBox="0 0 15 16"><path d="M3.5 1.5H11L14.5 5V14.5H3.5Z" fill="#f8faff" stroke="#3c5a9a"/><path d="M11 1.5V5H14.5" fill="#dde6f4" stroke="#3c5a9a"/><path d="M6 9.5H12M6 11.5H12M7 13H12" stroke="#4a7bd0"/><path d="M1.2 0.5C0.5 3 1.5 6.5 5 6.5H6" fill="none" stroke="#3a7ad8" stroke-width="1.7"/><path d="M5.5 3.5L9 6.5L5.5 9.5Z" fill="#3a7ad8"/></svg>
<div class="t" style="left:70px;top:163px;">OneBestObject.ascx.vb</div>
<svg style="left:8px;top:181px;" width="9" height="9" viewBox="0 0 9 9"><rect x="0.5" y="0.5" width="8" height="8" fill="#fff" stroke="#8c8c8c"/><path d="M2 4.5H7" stroke="#000"/></svg>
<svg style="left:23px;top:181px;" width="8" height="8" viewBox="0 0 8 8"><path d="M0.5 4.5L3 7.5L7.5 0.8" fill="none" stroke="#2a5ad0" stroke-width="1.8"/></svg>
<svg style="left:33px;top:177px;" width="15" height="16" viewBox="0 0 15 16"><rect x="0.5" y="0.5" width="13" height="13" fill="#f6ecb0" stroke="#e0a820"/><rect x="2.5" y="2.5" width="3" height="3" fill="#fff" stroke="#2a8a3a"/><rect x="2.5" y="8.5" width="3" height="3" fill="#fff" stroke="#2a8a3a"/><path d="M7 4H11M7 10H11" stroke="#5a7ab0"/></svg>
<div class="t" style="left:51px;top:179px;">OneBestObject_Mobile1.ascx</div>
<svg style="left:42px;top:197px;" width="8" height="8" viewBox="0 0 8 8"><path d="M0.5 4.5L3 7.5L7.5 0.8" fill="none" stroke="#2a5ad0" stroke-width="1.8"/></svg>
<svg style="left:51px;top:193px;" width="15" height="16" viewBox="0 0 15 16"><path d="M3.5 1.5H11L14.5 5V14.5H3.5Z" fill="#f8faff" stroke="#3c5a9a"/><path d="M11 1.5V5H14.5" fill="#dde6f4" stroke="#3c5a9a"/><path d="M6 9.5H12M6 11.5H12M7 13H12" stroke="#4a7bd0"/><path d="M1.2 0.5C0.5 3 1.5 6.5 5 6.5H6" fill="none" stroke="#3a7ad8" stroke-width="1.7"/><path d="M5.5 3.5L9 6.5L5.5 9.5Z" fill="#3a7ad8"/></svg>
<div class="t" style="left:70px;top:195px;">OneBestObject_Mobile1.ascx.vb</div>
<svg style="left:8px;top:213px;" width="9" height="9" viewBox="0 0 9 9"><rect x="0.5" y="0.5" width="8" height="8" fill="#fff" stroke="#8c8c8c"/><path d="M2 4.5H7" stroke="#000"/><path d="M4.5 2V7" stroke="#000"/></svg>
<svg style="left:23px;top:213px;" width="8" height="8" viewBox="0 0 8 8"><path d="M0.5 4.5L3 7.5L7.5 0.8" fill="none" stroke="#2a5ad0" stroke-width="1.8"/></svg>
<svg style="left:33px;top:209px;" width="15" height="16" viewBox="0 0 15 16"><rect x="0.5" y="0.5" width="13" height="13" fill="#f6ecb0" stroke="#e0a820"/><rect x="2.5" y="2.5" width="3" height="3" fill="#fff" stroke="#2a8a3a"/><rect x="2.5" y="8.5" width="3" height="3" fill="#fff" stroke="#2a8a3a"/><path d="M7 4H11M7 10H11" stroke="#5a7ab0"/></svg>
<div class="t" style="left:51px;top:211px;">OneFoto.ascx</div>
<svg style="left:8px;top:229px;" width="9" height="9" viewBox="0 0 9 9"><rect x="0.5" y="0.5" width="8" height="8" fill="#fff" stroke="#8c8c8c"/><path d="M2 4.5H7" stroke="#000"/><path d="M4.5 2V7" stroke="#000"/></svg>
<svg style="left:23px;top:229px;" width="8" height="8" viewBox="0 0 8 8"><path d="M0.5 4.5L3 7.5L7.5 0.8" fill="none" stroke="#2a5ad0" stroke-width="1.8"/></svg>
<svg style="left:33px;top:225px;" width="15" height="16" viewBox="0 0 15 16"><rect x="0.5" y="0.5" width="13" height="13" fill="#f6ecb0" stroke="#e0a820"/><rect x="2.5" y="2.5" width="3" height="3" fill="#fff" stroke="#2a8a3a"/><rect x="2.5" y="8.5" width="3" height="3" fill="#fff" stroke="#2a8a3a"/><path d="M7 4H11M7 10H11" stroke="#5a7ab0"/></svg>
<div class="t" style="left:51px;top:227px;">OneObject_Find.ascx</div>
<svg style="left:8px;top:245px;" width="9" height="9" viewBox="0 0 9 9"><rect x="0.5" y="0.5" width="8" height="8" fill="#fff" stroke="#8c8c8c"/><path d="M2 4.5H7" stroke="#000"/><path d="M4.5 2V7" stroke="#000"/></svg>
<svg style="left:23px;top:245px;" width="8" height="8" viewBox="0 0 8 8"><path d="M0.5 4.5L3 7.5L7.5 0.8" fill="none" stroke="#2a5ad0" stroke-width="1.8"/></svg>
<svg style="left:33px;top:241px;" width="15" height="16" viewBox="0 0 15 16"><rect x="0.5" y="0.5" width="13" height="13" fill="#f6ecb0" stroke="#e0a820"/><rect x="2.5" y="2.5" width="3" height="3" fill="#fff" stroke="#2a8a3a"/><rect x="2.5" y="8.5" width="3" height="3" fill="#fff" stroke="#2a8a3a"/><path d="M7 4H11M7 10H11" stroke="#5a7ab0"/></svg>
<div class="t" style="left:51px;top:243px;">OneObject_Find_Mobile.ascx</div>
<svg style="left:8px;top:261px;" width="9" height="9" viewBox="0 0 9 9"><rect x="0.5" y="0.5" width="8" height="8" fill="#fff" stroke="#8c8c8c"/><path d="M2 4.5H7" stroke="#000"/><path d="M4.5 2V7" stroke="#000"/></svg>
<svg style="left:23px;top:261px;" width="8" height="8" viewBox="0 0 8 8"><path d="M0.5 4.5L3 7.5L7.5 0.8" fill="none" stroke="#2a5ad0" stroke-width="1.8"/></svg>
<svg style="left:33px;top:257px;" width="15" height="16" viewBox="0 0 15 16"><rect x="0.5" y="0.5" width="13" height="13" fill="#f6ecb0" stroke="#e0a820"/><rect x="2.5" y="2.5" width="3" height="3" fill="#fff" stroke="#2a8a3a"/><rect x="2.5" y="8.5" width="3" height="3" fill="#fff" stroke="#2a8a3a"/><path d="M7 4H11M7 10H11" stroke="#5a7ab0"/></svg>
<div class="t" style="left:51px;top:259px;">OneObject_My.ascx</div>
<svg style="left:8px;top:277px;" width="9" height="9" viewBox="0 0 9 9"><rect x="0.5" y="0.5" width="8" height="8" fill="#fff" stroke="#8c8c8c"/><path d="M2 4.5H7" stroke="#000"/><path d="M4.5 2V7" stroke="#000"/></svg>
<svg style="left:23px;top:277px;" width="8" height="8" viewBox="0 0 8 8"><path d="M0.5 4.5L3 7.5L7.5 0.8" fill="none" stroke="#2a5ad0" stroke-width="1.8"/></svg>
<svg style="left:33px;top:273px;" width="15" height="16" viewBox="0 0 15 16"><rect x="0.5" y="0.5" width="13" height="13" fill="#f6ecb0" stroke="#e0a820"/><rect x="2.5" y="2.5" width="3" height="3" fill="#fff" stroke="#2a8a3a"/><rect x="2.5" y="8.5" width="3" height="3" fill="#fff" stroke="#2a8a3a"/><path d="M7 4H11M7 10H11" stroke="#5a7ab0"/></svg>
<div class="t" style="left:51px;top:275px;">OneObject_Save.ascx</div>
<svg style="left:8px;top:293px;" width="9" height="9" viewBox="0 0 9 9"><rect x="0.5" y="0.5" width="8" height="8" fill="#fff" stroke="#8c8c8c"/><path d="M2 4.5H7" stroke="#000"/><path d="M4.5 2V7" stroke="#000"/></svg>
<svg style="left:23px;top:293px;" width="8" height="8" viewBox="0 0 8 8"><path d="M0.5 4.5L3 7.5L7.5 0.8" fill="none" stroke="#2a5ad0" stroke-width="1.8"/></svg>
<svg style="left:33px;top:289px;" width="15" height="16" viewBox="0 0 15 16"><rect x="0.5" y="0.5" width="13" height="13" fill="#f6ecb0" stroke="#e0a820"/><rect x="2.5" y="2.5" width="3" height="3" fill="#fff" stroke="#2a8a3a"/><rect x="2.5" y="8.5" width="3" height="3" fill="#fff" stroke="#2a8a3a"/><path d="M7 4H11M7 10H11" stroke="#5a7ab0"/></svg>
<div class="t" style="left:51px;top:291px;">OneObject_Save_Mobile.ascx</div>
<svg style="left:8px;top:309px;" width="9" height="9" viewBox="0 0 9 9"><rect x="0.5" y="0.5" width="8" height="8" fill="#fff" stroke="#8c8c8c"/><path d="M2 4.5H7" stroke="#000"/><path d="M4.5 2V7" stroke="#000"/></svg>
<svg style="left:23px;top:309px;" width="8" height="8" viewBox="0 0 8 8"><path d="M0.5 4.5L3 7.5L7.5 0.8" fill="none" stroke="#2a5ad0" stroke-width="1.8"/></svg>
<svg style="left:33px;top:305px;" width="15" height="16" viewBox="0 0 15 16"><rect x="0.5" y="0.5" width="13" height="13" fill="#f6ecb0" stroke="#e0a820"/><rect x="2.5" y="2.5" width="3" height="3" fill="#fff" stroke="#2a8a3a"/><rect x="2.5" y="8.5" width="3" height="3" fill="#fff" stroke="#2a8a3a"/><path d="M7 4H11M7 10H11" stroke="#5a7ab0"/></svg>
<div class="t" style="left:51px;top:307px;">OneObject_User.ascx</div>
<svg style="left:8px;top:325px;" width="9" height="9" viewBox="0 0 9 9"><rect x="0.5" y="0.5" width="8" height="8" fill="#fff" stroke="#8c8c8c"/><path d="M2 4.5H7" stroke="#000"/><path d="M4.5 2V7" stroke="#000"/></svg>
<svg style="left:23px;top:325px;" width="8" height="8" viewBox="0 0 8 8"><path d="M0.5 4.5L3 7.5L7.5 0.8" fill="none" stroke="#2a5ad0" stroke-width="1.8"/></svg>
<svg style="left:33px;top:321px;" width="15" height="16" viewBox="0 0 15 16"><rect x="0.5" y="0.5" width="13" height="13" fill="#f6ecb0" stroke="#e0a820"/><rect x="2.5" y="2.5" width="3" height="3" fill="#fff" stroke="#2a8a3a"/><rect x="2.5" y="8.5" width="3" height="3" fill="#fff" stroke="#2a8a3a"/><path d="M7 4H11M7 10H11" stroke="#5a7ab0"/></svg>
<div class="t" style="left:51px;top:323px;">OneObject_User_Mobile.ascx</div>
<svg style="left:8px;top:341px;" width="9" height="9" viewBox="0 0 9 9"><rect x="0.5" y="0.5" width="8" height="8" fill="#fff" stroke="#8c8c8c"/><path d="M2 4.5H7" stroke="#000"/><path d="M4.5 2V7" stroke="#000"/></svg>
<svg style="left:23px;top:341px;" width="8" height="8" viewBox="0 0 8 8"><path d="M0.5 4.5L3 7.5L7.5 0.8" fill="none" stroke="#2a5ad0" stroke-width="1.8"/></svg>
<svg style="left:33px;top:337px;" width="15" height="16" viewBox="0 0 15 16"><rect x="0.5" y="0.5" width="13" height="13" fill="#f6ecb0" stroke="#e0a820"/><rect x="2.5" y="2.5" width="3" height="3" fill="#fff" stroke="#2a8a3a"/><rect x="2.5" y="8.5" width="3" height="3" fill="#fff" stroke="#2a8a3a"/><path d="M7 4H11M7 10H11" stroke="#5a7ab0"/></svg>
<div class="t" style="left:51px;top:339px;">OneObjectDetail.ascx</div>
<svg style="left:8px;top:357px;" width="9" height="9" viewBox="0 0 9 9"><rect x="0.5" y="0.5" width="8" height="8" fill="#fff" stroke="#8c8c8c"/><path d="M2 4.5H7" stroke="#000"/><path d="M4.5 2V7" stroke="#000"/></svg>
<svg style="left:23px;top:357px;" width="8" height="8" viewBox="0 0 8 8"><path d="M0.5 4.5L3 7.5L7.5 0.8" fill="none" stroke="#2a5ad0" stroke-width="1.8"/></svg>
<svg style="left:33px;top:353px;" width="15" height="16" viewBox="0 0 15 16"><rect x="0.5" y="0.5" width="13" height="13" fill="#f6ecb0" stroke="#e0a820"/><rect x="2.5" y="2.5" width="3" height="3" fill="#fff" stroke="#2a8a3a"/><rect x="2.5" y="8.5" width="3" height="3" fill="#fff" stroke="#2a8a3a"/><path d="M7 4H11M7 10H11" stroke="#5a7ab0"/></svg>
<div class="t" style="left:51px;top:355px;">OneObjectDetail2.ascx</div>
<svg style="left:8px;top:373px;" width="9" height="9" viewBox="0 0 9 9"><rect x="0.5" y="0.5" width="8" height="8" fill="#fff" stroke="#8c8c8c"/><path d="M2 4.5H7" stroke="#000"/><path d="M4.5 2V7" stroke="#000"/></svg>
<svg style="left:23px;top:373px;" width="8" height="8" viewBox="0 0 8 8"><path d="M0.5 4.5L3 7.5L7.5 0.8" fill="none" stroke="#2a5ad0" stroke-width="1.8"/></svg>
<svg style="left:33px;top:369px;" width="15" height="16" viewBox="0 0 15 16"><rect x="0.5" y="0.5" width="13" height="13" fill="#f6ecb0" stroke="#e0a820"/><rect x="2.5" y="2.5" width="3" height="3" fill="#fff" stroke="#2a8a3a"/><rect x="2.5" y="8.5" width="3" height="3" fill="#fff" stroke="#2a8a3a"/><path d="M7 4H11M7 10H11" stroke="#5a7ab0"/></svg>
<div class="t" style="left:51px;top:371px;">OneObjectDetail2_Mobile.ascx</div>
<svg style="left:23px;top:389px;" width="8" height="8" viewBox="0 0 8 8"><path d="M0.5 4.5L3 7.5L7.5 0.8" fill="none" stroke="#2a5ad0" stroke-width="1.8"/></svg>
<svg style="left:33px;top:385px;" width="15" height="16" viewBox="0 0 15 16"><path d="M1.5 0.5H9L12.5 4V14.5H1.5Z" fill="#f8faff" stroke="#3c5a9a"/><path d="M3 3.5H5M3 5.5H5M3 7.5H5M3 9.5H5M3 11.5H5" stroke="#2a60d0"/><path d="M6 5.5H9M6 7.5H9M6 9.5H8" stroke="#a0a8b8"/><circle cx="12" cy="11" r="3.5" fill="#3a80d8"/><path d="M10 9C11 10 12.5 10 12 13M12.5 7.8C13.5 9 15 9 15 11" stroke="#30a030" stroke-width="1.5" fill="none"/></svg>
<div class="t" style="left:51px;top:387px;">packages.config</div>
<svg style="left:8px;top:405px;" width="9" height="9" viewBox="0 0 9 9"><rect x="0.5" y="0.5" width="8" height="8" fill="#fff" stroke="#8c8c8c"/><path d="M2 4.5H7" stroke="#000"/><path d="M4.5 2V7" stroke="#000"/></svg>
<svg style="left:23px;top:405px;" width="8" height="8" viewBox="0 0 8 8"><path d="M0.5 4.5L3 7.5L7.5 0.8" fill="none" stroke="#2a5ad0" stroke-width="1.8"/></svg>
<svg style="left:33px;top:401px;" width="15" height="16" viewBox="0 0 15 16"><defs><linearGradient id="ga" x1="0" y1="0" x2="1" y2="1"><stop offset="0" stop-color="#fffbe6"/><stop offset="1" stop-color="#f6d878"/></linearGradient></defs><rect x="0.5" y="0.5" width="13" height="13" fill="url(#ga)" stroke="#4a5a7a"/><path d="M3 2.5H11" stroke="#3a6ad8"/><rect x="2" y="2" width="1.5" height="1.5" fill="#e02020"/><path d="M3 2.5H11" stroke="#3a6ad8"/><rect x="2" y="2" width="1.5" height="1.5" fill="#e02020"/><path d="M2.5 5.5H4M2.5 7.5H4M2.5 9.5H4" stroke="#5a7ab0"/><path d="M6.5 5V12" stroke="#8a9ab0"/><path d="M8 7.5H11M8 10.5H11" stroke="#5a7ab0"/></svg>
<div class="t" style="left:51px;top:403px;">Paymaster.aspx</div>
<svg style="left:23px;top:421px;" width="8" height="8" viewBox="0 0 8 8"><path d="M0.5 4.5L3 7.5L7.5 0.8" fill="none" stroke="#2a5ad0" stroke-width="1.8"/></svg>
<svg style="left:33px;top:417px;" width="15" height="16" viewBox="0 0 15 16"><path d="M2.5 0.5H10L13.5 4V14.5H2.5Z" fill="#f8faff" stroke="#3c5a9a"/><path d="M10 0.5V4H13.5" fill="#dde6f4" stroke="#3c5a9a"/><path d="M8 5.5H11M6 7.5H12M6 9.5H12M6 11.5H12" stroke="#2a60d0"/><circle cx="4.5" cy="4.5" r="3" fill="#3a80d8"/><path d="M2.5 3C3.5 4 5 4 4.5 7M5.5 1.8C6.5 3 7.5 3 7.5 4.5" stroke="#30a030" stroke-width="1.5" fill="none"/><path d="M0 9.5H2M0 11.5H2M0 13.5H2" stroke="#c8c060"/></svg>
<div class="t" style="left:51px;top:419px;">Paymaster_Failure.ashx</div>
<svg style="left:23px;top:437px;" width="8" height="8" viewBox="0 0 8 8"><path d="M0.5 4.5L3 7.5L7.5 0.8" fill="none" stroke="#2a5ad0" stroke-width="1.8"/></svg>
<svg style="left:33px;top:433px;" width="15" height="16" viewBox="0 0 15 16"><path d="M2.5 0.5H10L13.5 4V14.5H2.5Z" fill="#f8faff" stroke="#3c5a9a"/><path d="M10 0.5V4H13.5" fill="#dde6f4" stroke="#3c5a9a"/><path d="M8 5.5H11M6 7.5H12M6 9.5H12M6 11.5H12" stroke="#2a60d0"/><circle cx="4.5" cy="4.5" r="3" fill="#3a80d8"/><path d="M2.5 3C3.5 4 5 4 4.5 7M5.5 1.8C6.5 3 7.5 3 7.5 4.5" stroke="#30a030" stroke-width="1.5" fill="none"/><path d="M0 9.5H2M0 11.5H2M0 13.5H2" stroke="#c8c060"/></svg>
<div class="t" style="left:51px;top:435px;">Paymaster_Invoice.ashx</div>
<svg style="left:23px;top:453px;" width="8" height="8" viewBox="0 0 8 8"><path d="M0.5 4.5L3 7.5L7.5 0.8" fill="none" stroke="#2a5ad0" stroke-width="1.8"/></svg>
<svg style="left:33px;top:449px;" width="15" height="16" viewBox="0 0 15 16"><path d="M2.5 0.5H10L13.5 4V14.5H2.5Z" fill="#f8faff" stroke="#3c5a9a"/><path d="M10 0.5V4H13.5" fill="#dde6f4" stroke="#3c5a9a"/><path d="M8 5.5H11M6 7.5H12M6 9.5H12M6 11.5H12" stroke="#2a60d0"/><circle cx="4.5" cy="4.5" r="3" fill="#3a80d8"/><path d="M2.5 3C3.5 4 5 4 4.5 7M5.5 1.8C6.5 3 7.5 3 7.5 4.5" stroke="#30a030" stroke-width="1.5" fill="none"/><path d="M0 9.5H2M0 11.5H2M0 13.5H2" stroke="#c8c060"/></svg>
<div class="t" style="left:51px;top:451px;">Paymaster_Payment.ashx</div>
<svg style="left:23px;top:469px;" width="8" height="8" viewBox="0 0 8 8"><path d="M0.5 4.5L3 7.5L7.5 0.8" fill="none" stroke="#2a5ad0" stroke-width="1.8"/></svg>
<svg style="left:33px;top:465px;" width="15" height="16" viewBox="0 0 15 16"><path d="M2.5 0.5H10L13.5 4V14.5H2.5Z" fill="#f8faff" stroke="#3c5a9a"/><path d="M10 0.5V4H13.5" fill="#dde6f4" stroke="#3c5a9a"/><path d="M8 5.5H11M6 7.5H12M6 9.5H12M6 11.5H12" stroke="#2a60d0"/><circle cx="4.5" cy="4.5" r="3" fill="#3a80d8"/><path d="M2.5 3C3.5 4 5 4 4.5 7M5.5 1.8C6.5 3 7.5 3 7.5 4.5" stroke="#30a030" stroke-width="1.5" fill="none"/><path d="M0 9.5H2M0 11.5H2M0 13.5H2" stroke="#c8c060"/></svg>
<div class="t" style="left:51px;top:467px;">Paymaster_Success.ashx</div>
<svg style="left:23px;top:485px;" width="8" height="8" viewBox="0 0 8 8"><path d="M0.5 4.5L3 7.5L7.5 0.8" fill="none" stroke="#2a5ad0" stroke-width="1.8"/></svg>
<svg style="left:33px;top:481px;" width="15" height="16" viewBox="0 0 15 16"><path d="M2.5 0.5H10L13.5 4V14.5H2.5Z" fill="#f8faff" stroke="#3c5a9a"/><path d="M10 0.5V4H13.5" fill="#dde6f4" stroke="#3c5a9a"/><path d="M8 5.5H11M6 7.5H12M6 9.5H12M6 11.5H12" stroke="#2a60d0"/><circle cx="4.5" cy="4.5" r="3" fill="#3a80d8"/><path d="M2.5 3C3.5 4 5 4 4.5 7M5.5 1.8C6.5 3 7.5 3 7.5 4.5" stroke="#30a030" stroke-width="1.5" fill="none"/><path d="M0 9.5H2M0 11.5H2M0 13.5H2" stroke="#c8c060"/></svg>
<div class="t" style="left:51px;top:483px;">RandomImage.ashx</div>
<svg style="left:8px;top:501px;" width="9" height="9" viewBox="0 0 9 9"><rect x="0.5" y="0.5" width="8" height="8" fill="#fff" stroke="#8c8c8c"/><path d="M2 4.5H7" stroke="#000"/><path d="M4.5 2V7" stroke="#000"/></svg>
<svg style="left:23px;top:501px;" width="8" height="8" viewBox="0 0 8 8"><path d="M0.5 4.5L3 7.5L7.5 0.8" fill="none" stroke="#2a5ad0" stroke-width="1.8"/></svg>
<svg style="left:33px;top:497px;" width="15" height="16" viewBox="0 0 15 16"><defs><linearGradient id="ga" x1="0" y1="0" x2="1" y2="1"><stop offset="0" stop-color="#fffbe6"/><stop offset="1" stop-color="#f6d878"/></linearGradient></defs><rect x="0.5" y="0.5" width="13" height="13" fill="url(#ga)" stroke="#4a5a7a"/><path d="M3 2.5H11" stroke="#3a6ad8"/><rect x="2" y="2" width="1.5" height="1.5" fill="#e02020"/><path d="M3 2.5H11" stroke="#3a6ad8"/><rect x="2" y="2" width="1.5" height="1.5" fill="#e02020"/><path d="M2.5 5.5H4M2.5 7.5H4M2.5 9.5H4" stroke="#5a7ab0"/><path d="M6.5 5V12" stroke="#8a9ab0"/><path d="M8 7.5H11M8 10.5H11" stroke="#5a7ab0"/></svg>
<div class="t" style="left:51px;top:499px;">Registration.aspx</div>
<svg style="left:8px;top:517px;" width="9" height="9" viewBox="0 0 9 9"><rect x="0.5" y="0.5" width="8" height="8" fill="#fff" stroke="#8c8c8c"/><path d="M2 4.5H7" stroke="#000"/><path d="M4.5 2V7" stroke="#000"/></svg>
<svg style="left:23px;top:517px;" width="8" height="8" viewBox="0 0 8 8"><path d="M0.5 4.5L3 7.5L7.5 0.8" fill="none" stroke="#2a5ad0" stroke-width="1.8"/></svg>
<svg style="left:33px;top:513px;" width="15" height="16" viewBox="0 0 15 16"><defs><linearGradient id="ga" x1="0" y1="0" x2="1" y2="1"><stop offset="0" stop-color="#fffbe6"/><stop offset="1" stop-color="#f6d878"/></linearGradient></defs><rect x="0.5" y="0.5" width="13" height="13" fill="url(#ga)" stroke="#4a5a7a"/><path d="M3 2.5H11" stroke="#3a6ad8"/><rect x="2" y="2" width="1.5" height="1.5" fill="#e02020"/><path d="M3 2.5H11" stroke="#3a6ad8"/><rect x="2" y="2" width="1.5" height="1.5" fill="#e02020"/><path d="M2.5 5.5H4M2.5 7.5H4M2.5 9.5H4" stroke="#5a7ab0"/><path d="M6.5 5V12" stroke="#8a9ab0"/><path d="M8 7.5H11M8 10.5H11" stroke="#5a7ab0"/></svg>
<div class="t" style="left:51px;top:515px;">Rent_object.aspx</div>
<svg style="left:8px;top:533px;" width="9" height="9" viewBox="0 0 9 9"><rect x="0.5" y="0.5" width="8" height="8" fill="#fff" stroke="#8c8c8c"/><path d="M2 4.5H7" stroke="#000"/><path d="M4.5 2V7" stroke="#000"/></svg>
<svg style="left:23px;top:533px;" width="8" height="8" viewBox="0 0 8 8"><path d="M0.5 4.5L3 7.5L7.5 0.8" fill="none" stroke="#2a5ad0" stroke-width="1.8"/></svg>
<svg style="left:33px;top:529px;" width="15" height="16" viewBox="0 0 15 16"><defs><linearGradient id="ga" x1="0" y1="0" x2="1" y2="1"><stop offset="0" stop-color="#fffbe6"/><stop offset="1" stop-color="#f6d878"/></linearGradient></defs><rect x="0.5" y="0.5" width="13" height="13" fill="url(#ga)" stroke="#4a5a7a"/><path d="M3 2.5H11" stroke="#3a6ad8"/><rect x="2" y="2" width="1.5" height="1.5" fill="#e02020"/><path d="M3 2.5H11" stroke="#3a6ad8"/><rect x="2" y="2" width="1.5" height="1.5" fill="#e02020"/><path d="M2.5 5.5H4M2.5 7.5H4M2.5 9.5H4" stroke="#5a7ab0"/><path d="M6.5 5V12" stroke="#8a9ab0"/><path d="M8 7.5H11M8 10.5H11" stroke="#5a7ab0"/></svg>
<div class="t" style="left:51px;top:531px;">RestorePass.aspx</div>
<svg style="left:8px;top:549px;" width="9" height="9" viewBox="0 0 9 9"><rect x="0.5" y="0.5" width="8" height="8" fill="#fff" stroke="#8c8c8c"/><path d="M2 4.5H7" stroke="#000"/></svg>
<svg style="left:23px;top:549px;" width="8" height="8" viewBox="0 0 8 8"><path d="M0.5 4.5L3 7.5L7.5 0.8" fill="none" stroke="#2a5ad0" stroke-width="1.8"/></svg>
<svg style="left:33px;top:545px;" width="15" height="16" viewBox="0 0 15 16"><rect x="0.5" y="0.5" width="13" height="13" fill="#f6ecb0" stroke="#e0a820"/><rect x="2.5" y="2.5" width="3" height="3" fill="#fff" stroke="#2a8a3a"/><rect x="2.5" y="8.5" width="3" height="3" fill="#fff" stroke="#2a8a3a"/><path d="M7 4H11M7 10H11" stroke="#5a7ab0"/></svg>
<div class="t" style="left:51px;top:547px;">RightPanel.ascx</div>
<svg style="left:42px;top:565px;" width="8" height="8" viewBox="0 0 8 8"><path d="M0.5 4.5L3 7.5L7.5 0.8" fill="none" stroke="#2a5ad0" stroke-width="1.8"/></svg>
<svg style="left:51px;top:561px;" width="15" height="16" viewBox="0 0 15 16"><path d="M3.5 1.5H11L14.5 5V14.5H3.5Z" fill="#f8faff" stroke="#3c5a9a"/><path d="M11 1.5V5H14.5" fill="#dde6f4" stroke="#3c5a9a"/><path d="M6 9.5H12M6 11.5H12M7 13H12" stroke="#4a7bd0"/><path d="M1.2 0.5C0.5 3 1.5 6.5 5 6.5H6" fill="none" stroke="#3a7ad8" stroke-width="1.7"/><path d="M5.5 3.5L9 6.5L5.5 9.5Z" fill="#3a7ad8"/></svg>
<div class="t" style="left:70px;top:563px;">RightPanel.ascx.vb</div>
<svg style="left:23px;top:581px;" width="8" height="8" viewBox="0 0 8 8"><path d="M0.5 4.5L3 7.5L7.5 0.8" fill="none" stroke="#2a5ad0" stroke-width="1.8"/></svg>
<svg style="left:33px;top:577px;" width="15" height="16" viewBox="0 0 15 16"><path d="M2.5 0.5H10L13.5 4V14.5H2.5Z" fill="#f8faff" stroke="#3c5a9a"/><path d="M10 0.5V4H13.5" fill="#dde6f4" stroke="#3c5a9a"/><path d="M8 5.5H11M6 7.5H12M6 9.5H12M6 11.5H12" stroke="#2a60d0"/><circle cx="4.5" cy="4.5" r="3" fill="#3a80d8"/><path d="M2.5 3C3.5 4 5 4 4.5 7M5.5 1.8C6.5 3 7.5 3 7.5 4.5" stroke="#30a030" stroke-width="1.5" fill="none"/><path d="M0 9.5H2M0 11.5H2M0 13.5H2" stroke="#c8c060"/></svg>
<div class="t" style="left:51px;top:579px;">RobokassaFail.ashx</div>
<svg style="left:23px;top:597px;" width="8" height="8" viewBox="0 0 8 8"><path d="M0.5 4.5L3 7.5L7.5 0.8" fill="none" stroke="#2a5ad0" stroke-width="1.8"/></svg>
<svg style="left:33px;top:593px;" width="15" height="16" viewBox="0 0 15 16"><path d="M2.5 0.5H10L13.5 4V14.5H2.5Z" fill="#f8faff" stroke="#3c5a9a"/><path d="M10 0.5V4H13.5" fill="#dde6f4" stroke="#3c5a9a"/><path d="M8 5.5H11M6 7.5H12M6 9.5H12M6 11.5H12" stroke="#2a60d0"/><circle cx="4.5" cy="4.5" r="3" fill="#3a80d8"/><path d="M2.5 3C3.5 4 5 4 4.5 7M5.5 1.8C6.5 3 7.5 3 7.5 4.5" stroke="#30a030" stroke-width="1.5" fill="none"/><path d="M0 9.5H2M0 11.5H2M0 13.5H2" stroke="#c8c060"/></svg>
<div class="t" style="left:51px;top:595px;">RobokassaResult.ashx</div>
<svg style="left:23px;top:613px;" width="8" height="8" viewBox="0 0 8 8"><path d="M0.5 4.5L3 7.5L7.5 0.8" fill="none" stroke="#2a5ad0" stroke-width="1.8"/></svg>
<svg style="left:33px;top:609px;" width="15" height="16" viewBox="0 0 15 16"><path d="M2.5 0.5H10L13.5 4V14.5H2.5Z" fill="#f8faff" stroke="#3c5a9a"/><path d="M10 0.5V4H13.5" fill="#dde6f4" stroke="#3c5a9a"/><path d="M8 5.5H11M6 7.5H12M6 9.5H12M6 11.5H12" stroke="#2a60d0"/><circle cx="4.5" cy="4.5" r="3" fill="#3a80d8"/><path d="M2.5 3C3.5 4 5 4 4.5 7M5.5 1.8C6.5 3 7.5 3 7.5 4.5" stroke="#30a030" stroke-width="1.5" fill="none"/><path d="M0 9.5H2M0 11.5H2M0 13.5H2" stroke="#c8c060"/></svg>
<div class="t" style="left:51px;top:611px;">RobokassaSuccess.ashx</div>
<svg style="left:23px;top:629px;" width="8" height="8" viewBox="0 0 8 8"><path d="M0.5 4.5L3 7.5L7.5 0.8" fill="none" stroke="#2a5ad0" stroke-width="1.8"/></svg>
<svg style="left:33px;top:625px;" width="15" height="16" viewBox="0 0 15 16"><path d="M2.5 0.5H10L13.5 4V14.5H2.5Z" fill="#f8faff" stroke="#3c5a9a"/><path d="M10 0.5V4H13.5" fill="#dde6f4" stroke="#3c5a9a"/><path d="M8 5.5H11M6 7.5H12M6 9.5H12M6 11.5H12" stroke="#2a60d0"/><circle cx="4.5" cy="4.5" r="3" fill="#3a80d8"/><path d="M2.5 3C3.5 4 5 4 4.5 7M5.5 1.8C6.5 3 7.5 3 7.5 4.5" stroke="#30a030" stroke-width="1.5" fill="none"/><path d="M0 9.5H2M0 11.5H2M0 13.5H2" stroke="#c8c060"/></svg>
<div class="t" style="left:51px;top:627px;">SendFirmMail.ashx</div>
<svg style="left:23px;top:645px;" width="8" height="8" viewBox="0 0 8 8"><path d="M0.5 4.5L3 7.5L7.5 0.8" fill="none" stroke="#2a5ad0" stroke-width="1.8"/></svg>
<svg style="left:33px;top:641px;" width="15" height="16" viewBox="0 0 15 16"><path d="M2.5 0.5H10L13.5 4V14.5H2.5Z" fill="#f8faff" stroke="#3c5a9a"/><path d="M10 0.5V4H13.5" fill="#dde6f4" stroke="#3c5a9a"/><path d="M8 5.5H11M6 7.5H12M6 9.5H12M6 11.5H12" stroke="#2a60d0"/><circle cx="4.5" cy="4.5" r="3" fill="#3a80d8"/><path d="M2.5 3C3.5 4 5 4 4.5 7M5.5 1.8C6.5 3 7.5 3 7.5 4.5" stroke="#30a030" stroke-width="1.5" fill="none"/><path d="M0 9.5H2M0 11.5H2M0 13.5H2" stroke="#c8c060"/></svg>
<div class="t" style="left:51px;top:643px;">SendMail.ashx</div>
<svg style="left:8px;top:661px;" width="9" height="9" viewBox="0 0 9 9"><rect x="0.5" y="0.5" width="8" height="8" fill="#fff" stroke="#8c8c8c"/><path d="M2 4.5H7" stroke="#000"/><path d="M4.5 2V7" stroke="#000"/></svg>
<svg style="left:23px;top:661px;" width="8" height="8" viewBox="0 0 8 8"><path d="M0.5 4.5L3 7.5L7.5 0.8" fill="none" stroke="#2a5ad0" stroke-width="1.8"/></svg>
<svg style="left:33px;top:657px;" width="15" height="16" viewBox="0 0 15 16"><rect x="0.5" y="0.5" width="13" height="13" fill="#f6ecb0" stroke="#e0a820"/><rect x="2.5" y="2.5" width="3" height="3" fill="#fff" stroke="#2a8a3a"/><rect x="2.5" y="8.5" width="3" height="3" fill="#fff" stroke="#2a8a3a"/><path d="M7 4H11M7 10H11" stroke="#5a7ab0"/></svg>
<div class="t" style="left:51px;top:659px;">Similar.ascx</div>
<svg style="left:8px;top:677px;" width="9" height="9" viewBox="0 0 9 9"><rect x="0.5" y="0.5" width="8" height="8" fill="#fff" stroke="#8c8c8c"/><path d="M2 4.5H7" stroke="#000"/><path d="M4.5 2V7" stroke="#000"/></svg>
<svg style="left:23px;top:677px;" width="8" height="8" viewBox="0 0 8 8"><path d="M0.5 4.5L3 7.5L7.5 0.8" fill="none" stroke="#2a5ad0" stroke-width="1.8"/></svg>
<svg style="left:33px;top:673px;" width="15" height="16" viewBox="0 0 15 16"><rect x="0.5" y="0.5" width="13" height="13" fill="#f6ecb0" stroke="#e0a820"/><rect x="2.5" y="2.5" width="3" height="3" fill="#fff" stroke="#2a8a3a"/><rect x="2.5" y="8.5" width="3" height="3" fill="#fff" stroke="#2a8a3a"/><path d="M7 4H11M7 10H11" stroke="#5a7ab0"/></svg>
<div class="t" style="left:51px;top:675px;">Simiral_Mobile.ascx</div>
<svg style="left:23px;top:693px;" width="8" height="8" viewBox="0 0 8 8"><path d="M0.5 4.5L3 7.5L7.5 0.8" fill="none" stroke="#2a5ad0" stroke-width="1.8"/></svg>
<svg style="left:33px;top:689px;" width="15" height="16" viewBox="0 0 15 16"><path d="M3.5 0.5H10L13.5 4V14.5H3.5Z" fill="#f8faff" stroke="#3c5a9a"/><text x="-0.5" y="11" font-family="Liberation Serif" font-size="13.5" font-weight="bold" fill="#9a1010">A</text><rect x="10" y="5" width="2" height="2" fill="#30a030"/><rect x="10" y="8" width="2" height="2" fill="#e04040"/><rect x="10" y="11" width="2" height="2" fill="#3a7ad8"/></svg>
<div class="t" style="left:51px;top:691px;">slider.css</div>
<svg style="left:23px;top:709px;" width="8" height="8" viewBox="0 0 8 8"><path d="M0.5 4.5L3 7.5L7.5 0.8" fill="none" stroke="#2a5ad0" stroke-width="1.8"/></svg>
<svg style="left:33px;top:705px;" width="15" height="16" viewBox="0 0 15 16"><path d="M3.5 0.5H10L13.5 4V14.5H3.5Z" fill="#f8faff" stroke="#3c5a9a"/><text x="-0.5" y="11" font-family="Liberation Serif" font-size="13.5" font-weight="bold" fill="#9a1010">A</text><rect x="10" y="5" width="2" height="2" fill="#30a030"/><rect x="10" y="8" width="2" height="2" fill="#e04040"/><rect x="10" y="11" width="2" height="2" fill="#3a7ad8"/></svg>
<div class="t" style="left:51px;top:707px;">st.css</div>
<svg style="left:23px;top:725px;" width="8" height="8" viewBox="0 0 8 8"><path d="M0.5 4.5L3 7.5L7.5 0.8" fill="none" stroke="#2a5ad0" stroke-width="1.8"/></svg>
<svg style="left:33px;top:721px;" width="15" height="16" viewBox="0 0 15 16"><path d="M3.5 0.5H10L13.5 4V14.5H3.5Z" fill="#f8faff" stroke="#3c5a9a"/><text x="-0.5" y="11" font-family="Liberation Serif" font-size="13.5" font-weight="bold" fill="#9a1010">A</text><rect x="10" y="5" width="2" height="2" fill="#30a030"/><rect x="10" y="8" width="2" height="2" fill="#e04040"/><rect x="10" y="11" width="2" height="2" fill="#3a7ad8"/></svg>
<div class="t" style="left:51px;top:723px;">style.css</div>
<svg style="left:23px;top:741px;" width="8" height="8" viewBox="0 0 8 8"><path d="M0.5 4.5L3 7.5L7.5 0.8" fill="none" stroke="#2a5ad0" stroke-width="1.8"/></svg>
<svg style="left:33px;top:737px;" width="15" height="16" viewBox="0 0 15 16"><path d="M2.5 0.5H10L13.5 4V14.5H2.5Z" fill="#f8faff" stroke="#3c5a9a"/><path d="M10 0.5V4H13.5" fill="#dde6f4" stroke="#3c5a9a"/><path d="M8 5.5H11M6 7.5H12M6 9.5H12M6 11.5H12" stroke="#2a60d0"/><circle cx="4.5" cy="4.5" r="3" fill="#3a80d8"/><path d="M2.5 3C3.5 4 5 4 4.5 7M5.5 1.8C6.5 3 7.5 3 7.5 4.5" stroke="#30a030" stroke-width="1.5" fill="none"/><path d="M0 9.5H2M0 11.5H2M0 13.5H2" stroke="#c8c060"/></svg>
<div class="t" style="left:51px;top:739px;">SubscriptAttention.ashx</div>
<svg style="left:8px;top:757px;" width="9" height="9" viewBox="0 0 9 9"><rect x="0.5" y="0.5" width="8" height="8" fill="#fff" stroke="#8c8c8c"/><path d="M2 4.5H7" stroke="#000"/><path d="M4.5 2V7" stroke="#000"/></svg>
<svg style="left:23px;top:757px;" width="8" height="8" viewBox="0 0 8 8"><path d="M0.5 4.5L3 7.5L7.5 0.8" fill="none" stroke="#2a5ad0" stroke-width="1.8"/></svg>
<svg style="left:33px;top:753px;" width="15" height="16" viewBox="0 0 15 16"><defs><linearGradient id="ga" x1="0" y1="0" x2="1" y2="1"><stop offset="0" stop-color="#fffbe6"/><stop offset="1" stop-color="#f6d878"/></linearGradient></defs><rect x="0.5" y="0.5" width="13" height="13" fill="url(#ga)" stroke="#4a5a7a"/><path d="M3 2.5H11" stroke="#3a6ad8"/><rect x="2" y="2" width="1.5" height="1.5" fill="#e02020"/><path d="M3 2.5H11" stroke="#3a6ad8"/><rect x="2" y="2" width="1.5" height="1.5" fill="#e02020"/><path d="M2.5 5.5H4M2.5 7.5H4M2.5 9.5H4" stroke="#5a7ab0"/><path d="M6.5 5V12" stroke="#8a9ab0"/><path d="M8 7.5H11M8 10.5H11" stroke="#5a7ab0"/></svg>
<div class="t" style="left:51px;top:755px;">swindlers.aspx</div>
<svg style="left:8px;top:773px;" width="9" height="9" viewBox="0 0 9 9"><rect x="0.5" y="0.5" width="8" height="8" fill="#fff" stroke="#8c8c8c"/><path d="M2 4.5H7" stroke="#000"/><path d="M4.5 2V7" stroke="#000"/></svg>
<svg style="left:23px;top:773px;" width="8" height="8" viewBox="0 0 8 8"><path d="M0.5 4.5L3 7.5L7.5 0.8" fill="none" stroke="#2a5ad0" stroke-width="1.8"/></svg>
<svg style="left:33px;top:769px;" width="15" height="16" viewBox="0 0 15 16"><defs><linearGradient id="ga" x1="0" y1="0" x2="1" y2="1"><stop offset="0" stop-color="#fffbe6"/><stop offset="1" stop-color="#f6d878"/></linearGradient></defs><rect x="0.5" y="0.5" width="13" height="13" fill="url(#ga)" stroke="#4a5a7a"/><path d="M3 2.5H11" stroke="#3a6ad8"/><rect x="2" y="2" width="1.5" height="1.5" fill="#e02020"/><path d="M3 2.5H11" stroke="#3a6ad8"/><rect x="2" y="2" width="1.5" height="1.5" fill="#e02020"/><path d="M2.5 5.5H4M2.5 7.5H4M2.5 9.5H4" stroke="#5a7ab0"/><path d="M6.5 5V12" stroke="#8a9ab0"/><path d="M8 7.5H11M8 10.5H11" stroke="#5a7ab0"/></svg>
<div class="t" style="left:51px;top:771px;">User.aspx</div>
<svg style="left:8px;top:789px;" width="9" height="9" viewBox="0 0 9 9"><rect x="0.5" y="0.5" width="8" height="8" fill="#fff" stroke="#8c8c8c"/><path d="M2 4.5H7" stroke="#000"/><path d="M4.5 2V7" stroke="#000"/></svg>
<svg style="left:23px;top:789px;" width="8" height="8" viewBox="0 0 8 8"><path d="M0.5 4.5L3 7.5L7.5 0.8" fill="none" stroke="#2a5ad0" stroke-width="1.8"/></svg>
<svg style="left:33px;top:785px;" width="15" height="16" viewBox="0 0 15 16"><defs><linearGradient id="ga" x1="0" y1="0" x2="1" y2="1"><stop offset="0" stop-color="#fffbe6"/><stop offset="1" stop-color="#f6d878"/></linearGradient></defs><rect x="0.5" y="0.5" width="13" height="13" fill="url(#ga)" stroke="#4a5a7a"/><path d="M3 2.5H11" stroke="#3a6ad8"/><rect x="2" y="2" width="1.5" height="1.5" fill="#e02020"/><path d="M3 2.5H11" stroke="#3a6ad8"/><rect x="2" y="2" width="1.5" height="1.5" fill="#e02020"/><path d="M2.5 5.5H4M2.5 7.5H4M2.5 9.5H4" stroke="#5a7ab0"/><path d="M6.5 5V12" stroke="#8a9ab0"/><path d="M8 7.5H11M8 10.5H11" stroke="#5a7ab0"/></svg>
<div class="t" style="left:51px;top:787px;">User_Account.aspx</div>
<svg style="left:8px;top:805px;" width="9" height="9" viewBox="0 0 9 9"><rect x="0.5" y="0.5" width="8" height="8" fill="#fff" stroke="#8c8c8c"/><path d="M2 4.5H7" stroke="#000"/><path d="M4.5 2V7" stroke="#000"/></svg>
<svg style="left:23px;top:805px;" width="8" height="8" viewBox="0 0 8 8"><path d="M0.5 4.5L3 7.5L7.5 0.8" fill="none" stroke="#2a5ad0" stroke-width="1.8"/></svg>
<svg style="left:33px;top:801px;" width="15" height="16" viewBox="0 0 15 16"><defs><linearGradient id="ga" x1="0" y1="0" x2="1" y2="1"><stop offset="0" stop-color="#fffbe6"/><stop offset="1" stop-color="#f6d878"/></linearGradient></defs><rect x="0.5" y="0.5" width="13" height="13" fill="url(#ga)" stroke="#4a5a7a"/><path d="M3 2.5H11" stroke="#3a6ad8"/><rect x="2" y="2" width="1.5" height="1.5" fill="#e02020"/><path d="M3 2.5H11" stroke="#3a6ad8"/><rect x="2" y="2" width="1.5" height="1.5" fill="#e02020"/><path d="M2.5 5.5H4M2.5 7.5H4M2.5 9.5H4" stroke="#5a7ab0"/><path d="M6.5 5V12" stroke="#8a9ab0"/><path d="M8 7.5H11M8 10.5H11" stroke="#5a7ab0"/></svg>
<div class="t" style="left:51px;top:803px;">user_add_contry.aspx</div>
<svg style="left:8px;top:821px;" width="9" height="9" viewBox="0 0 9 9"><rect x="0.5" y="0.5" width="8" height="8" fill="#fff" stroke="#8c8c8c"/><path d="M2 4.5H7" stroke="#000"/><path d="M4.5 2V7" stroke="#000"/></svg>
<svg style="left:23px;top:821px;" width="8" height="8" viewBox="0 0 8 8"><path d="M0.5 4.5L3 7.5L7.5 0.8" fill="none" stroke="#2a5ad0" stroke-width="1.8"/></svg>
<svg style="left:33px;top:817px;" width="15" height="16" viewBox="0 0 15 16"><defs><linearGradient id="ga" x1="0" y1="0" x2="1" y2="1"><stop offset="0" stop-color="#fffbe6"/><stop offset="1" stop-color="#f6d878"/></linearGradient></defs><rect x="0.5" y="0.5" width="13" height="13" fill="url(#ga)" stroke="#4a5a7a"/><path d="M3 2.5H11" stroke="#3a6ad8"/><rect x="2" y="2" width="1.5" height="1.5" fill="#e02020"/><path d="M3 2.5H11" stroke="#3a6ad8"/><rect x="2" y="2" width="1.5" height="1.5" fill="#e02020"/><path d="M2.5 5.5H4M2.5 7.5H4M2.5 9.5H4" stroke="#5a7ab0"/><path d="M6.5 5V12" stroke="#8a9ab0"/><path d="M8 7.5H11M8 10.5H11" stroke="#5a7ab0"/></svg>
<div class="t" style="left:51px;top:819px;">user_add_hotel.aspx</div>
<svg style="left:8px;top:837px;" width="9" height="9" viewBox="0 0 9 9"><rect x="0.5" y="0.5" width="8" height="8" fill="#fff" stroke="#8c8c8c"/><path d="M2 4.5H7" stroke="#000"/><path d="M4.5 2V7" stroke="#000"/></svg>
<svg style="left:23px;top:837px;" width="8" height="8" viewBox="0 0 8 8"><path d="M0.5 4.5L3 7.5L7.5 0.8" fill="none" stroke="#2a5ad0" stroke-width="1.8"/></svg>
<svg style="left:33px;top:833px;" width="15" height="16" viewBox="0 0 15 16"><defs><linearGradient id="ga" x1="0" y1="0" x2="1" y2="1"><stop offset="0" stop-color="#fffbe6"/><stop offset="1" stop-color="#f6d878"/></linearGradient></defs><rect x="0.5" y="0.5" width="13" height="13" fill="url(#ga)" stroke="#4a5a7a"/><path d="M3 2.5H11" stroke="#3a6ad8"/><rect x="2" y="2" width="1.5" height="1.5" fill="#e02020"/><path d="M3 2.5H11" stroke="#3a6ad8"/><rect x="2" y="2" width="1.5" height="1.5" fill="#e02020"/><path d="M2.5 5.5H4M2.5 7.5H4M2.5 9.5H4" stroke="#5a7ab0"/><path d="M6.5 5V12" stroke="#8a9ab0"/><path d="M8 7.5H11M8 10.5H11" stroke="#5a7ab0"/></svg>
<div class="t" style="left:51px;top:835px;">User_AddAdmFoto.aspx</div>
<svg style="left:8px;top:853px;" width="9" height="9" viewBox="0 0 9 9"><rect x="0.5" y="0.5" width="8" height="8" fill="#fff" stroke="#8c8c8c"/><path d="M2 4.5H7" stroke="#000"/><path d="M4.5 2V7" stroke="#000"/></svg>
<svg style="left:23px;top:853px;" width="8" height="8" viewBox="0 0 8 8"><path d="M0.5 4.5L3 7.5L7.5 0.8" fill="none" stroke="#2a5ad0" stroke-width="1.8"/></svg>
<svg style="left:33px;top:849px;" width="15" height="16" viewBox="0 0 15 16"><defs><linearGradient id="ga" x1="0" y1="0" x2="1" y2="1"><stop offset="0" stop-color="#fffbe6"/><stop offset="1" stop-color="#f6d878"/></linearGradient></defs><rect x="0.5" y="0.5" width="13" height="13" fill="url(#ga)" stroke="#4a5a7a"/><path d="M3 2.5H11" stroke="#3a6ad8"/><rect x="2" y="2" width="1.5" height="1.5" fill="#e02020"/><path d="M3 2.5H11" stroke="#3a6ad8"/><rect x="2" y="2" width="1.5" height="1.5" fill="#e02020"/><path d="M2.5 5.5H4M2.5 7.5H4M2.5 9.5H4" stroke="#5a7ab0"/><path d="M6.5 5V12" stroke="#8a9ab0"/><path d="M8 7.5H11M8 10.5H11" stroke="#5a7ab0"/></svg>
<div class="t" style="left:51px;top:851px;">User_AddFoto.aspx</div>
<svg style="left:8px;top:869px;" width="9" height="9" viewBox="0 0 9 9"><rect x="0.5" y="0.5" width="8" height="8" fill="#fff" stroke="#8c8c8c"/><path d="M2 4.5H7" stroke="#000"/><path d="M4.5 2V7" stroke="#000"/></svg>
<svg style="left:23px;top:869px;" width="8" height="8" viewBox="0 0 8 8"><path d="M0.5 4.5L3 7.5L7.5 0.8" fill="none" stroke="#2a5ad0" stroke-width="1.8"/></svg>
<svg style="left:33px;top:865px;" width="15" height="16" viewBox="0 0 15 16"><defs><linearGradient id="ga" x1="0" y1="0" x2="1" y2="1"><stop offset="0" stop-color="#fffbe6"/><stop offset="1" stop-color="#f6d878"/></linearGradient></defs><rect x="0.5" y="0.5" width="13" height="13" fill="url(#ga)" stroke="#4a5a7a"/><path d="M3 2.5H11" stroke="#3a6ad8"/><rect x="2" y="2" width="1.5" height="1.5" fill="#e02020"/><path d="M3 2.5H11" stroke="#3a6ad8"/><rect x="2" y="2" width="1.5" height="1.5" fill="#e02020"/><path d="M2.5 5.5H4M2.5 7.5H4M2.5 9.5H4" stroke="#5a7ab0"/><path d="M6.5 5V12" stroke="#8a9ab0"/><path d="M8 7.5H11M8 10.5H11" stroke="#5a7ab0"/></svg>
<div class="t" style="left:51px;top:867px;">User_AddObject.aspx</div>
<svg style="left:8px;top:885px;" width="9" height="9" viewBox="0 0 9 9"><rect x="0.5" y="0.5" width="8" height="8" fill="#fff" stroke="#8c8c8c"/><path d="M2 4.5H7" stroke="#000"/><path d="M4.5 2V7" stroke="#000"/></svg>
<svg style="left:23px;top:885px;" width="8" height="8" viewBox="0 0 8 8"><path d="M0.5 4.5L3 7.5L7.5 0.8" fill="none" stroke="#2a5ad0" stroke-width="1.8"/></svg>
<svg style="left:33px;top:881px;" width="15" height="16" viewBox="0 0 15 16"><defs><linearGradient id="ga" x1="0" y1="0" x2="1" y2="1"><stop offset="0" stop-color="#fffbe6"/><stop offset="1" stop-color="#f6d878"/></linearGradient></defs><rect x="0.5" y="0.5" width="13" height="13" fill="url(#ga)" stroke="#4a5a7a"/><path d="M3 2.5H11" stroke="#3a6ad8"/><rect x="2" y="2" width="1.5" height="1.5" fill="#e02020"/><path d="M3 2.5H11" stroke="#3a6ad8"/><rect x="2" y="2" width="1.5" height="1.5" fill="#e02020"/><path d="M2.5 5.5H4M2.5 7.5H4M2.5 9.5H4" stroke="#5a7ab0"/><path d="M6.5 5V12" stroke="#8a9ab0"/><path d="M8 7.5H11M8 10.5H11" stroke="#5a7ab0"/></svg>
<div class="t" style="left:51px;top:883px;">User_AddPersonalFoto.aspx</div>
<svg style="left:8px;top:901px;" width="9" height="9" viewBox="0 0 9 9"><rect x="0.5" y="0.5" width="8" height="8" fill="#fff" stroke="#8c8c8c"/><path d="M2 4.5H7" stroke="#000"/><path d="M4.5 2V7" stroke="#000"/></svg>
<svg style="left:23px;top:901px;" width="8" height="8" viewBox="0 0 8 8"><path d="M0.5 4.5L3 7.5L7.5 0.8" fill="none" stroke="#2a5ad0" stroke-width="1.8"/></svg>
<svg style="left:33px;top:897px;" width="15" height="16" viewBox="0 0 15 16"><defs><linearGradient id="ga" x1="0" y1="0" x2="1" y2="1"><stop offset="0" stop-color="#fffbe6"/><stop offset="1" stop-color="#f6d878"/></linearGradient></defs><rect x="0.5" y="0.5" width="13" height="13" fill="url(#ga)" stroke="#4a5a7a"/><path d="M3 2.5H11" stroke="#3a6ad8"/><rect x="2" y="2" width="1.5" height="1.5" fill="#e02020"/><path d="M3 2.5H11" stroke="#3a6ad8"/><rect x="2" y="2" width="1.5" height="1.5" fill="#e02020"/><path d="M2.5 5.5H4M2.5 7.5H4M2.5 9.5H4" stroke="#5a7ab0"/><path d="M6.5 5V12" stroke="#8a9ab0"/><path d="M8 7.5H11M8 10.5H11" stroke="#5a7ab0"/></svg>
<div class="t" style="left:51px;top:899px;">user_admin.aspx</div>
<svg style="left:8px;top:917px;" width="9" height="9" viewBox="0 0 9 9"><rect x="0.5" y="0.5" width="8" height="8" fill="#fff" stroke="#8c8c8c"/><path d="M2 4.5H7" stroke="#000"/><path d="M4.5 2V7" stroke="#000"/></svg>
<svg style="left:23px;top:917px;" width="8" height="8" viewBox="0 0 8 8"><path d="M0.5 4.5L3 7.5L7.5 0.8" fill="none" stroke="#2a5ad0" stroke-width="1.8"/></svg>
<svg style="left:33px;top:913px;" width="15" height="16" viewBox="0 0 15 16"><defs><linearGradient id="ga" x1="0" y1="0" x2="1" y2="1"><stop offset="0" stop-color="#fffbe6"/><stop offset="1" stop-color="#f6d878"/></linearGradient></defs><rect x="0.5" y="0.5" width="13" height="13" fill="url(#ga)" stroke="#4a5a7a"/><path d="M3 2.5H11" stroke="#3a6ad8"/><rect x="2" y="2" width="1.5" height="1.5" fill="#e02020"/><path d="M3 2.5H11" stroke="#3a6ad8"/><rect x="2" y="2" width="1.5" height="1.5" fill="#e02020"/><path d="M2.5 5.5H4M2.5 7.5H4M2.5 9.5H4" stroke="#5a7ab0"/><path d="M6.5 5V12" stroke="#8a9ab0"/><path d="M8 7.5H11M8 10.5H11" stroke="#5a7ab0"/></svg>
<div class="t" style="left:51px;top:915px;">User_AdminPanel.aspx</div>
</div>
<div style="left:1577px;top:117px;width:16px;height:920px;background:#ebeae4"></div>
<div style="left:1577px;top:117px;width:16px;height:16px;background:#ebe9e0;border-top:1px solid #fff;border-left:1px solid #fff;border-right:1px solid #808080;border-bottom:1px solid #808080;box-shadow:inset -1px -1px 0 #c8c6bc"></div>
<svg style="left:1577px;top:117px;" width="16" height="16" viewBox="0 0 16 16"><path d="M4.0 10.0H12.0L8.0 6.0Z" fill="#000"/></svg>
<div style="left:1577px;top:1021px;width:16px;height:16px;background:#ebe9e0;border-top:1px solid #fff;border-left:1px solid #fff;border-right:1px solid #808080;border-bottom:1px solid #808080;box-shadow:inset -1px -1px 0 #c8c6bc"></div>
<svg style="left:1577px;top:1021px;" width="16" height="16" viewBox="0 0 16 16"><path d="M4.0 6.0H12.0L8.0 10.0Z" fill="#000"/></svg>
<div style="left:1577px;top:670px;width:16px;height:218px;background:#e6e4da;border-top:1px solid #fff;border-left:1px solid #fff;border-right:1px solid #808080;border-bottom:1px solid #808080;box-shadow:inset -1px -1px 0 #c8c6bc"></div>
<div style="left:1243px;top:1043px;width:351px;height:19px;background:linear-gradient(#52668b,#475c84 60%,#3f5580);border-bottom:1px solid #36507a"></div>
<div class="t" style="left:1245px;top:1047px;color:#fff">Subversion Info</div>
<svg style="left:1550px;top:1050px;" width="9" height="5" viewBox="0 0 9 5"><path d="M0 0H9L4.5 5Z" fill="#e8ecf4"/></svg>
<svg style="left:1564px;top:1046px;" width="9" height="13" viewBox="0 0 9 13"><path d="M2.5 0.5H6.5V7.5H2.5Z M0 7.5H9 M4.5 8V13" fill="none" stroke="#e8ecf4" stroke-width="1.3"/></svg>
<svg style="left:1579px;top:1047px;" width="10" height="10" viewBox="0 0 10 10"><path d="M1 1L9 9M9 1L1 9" stroke="#e8ecf4" stroke-width="1.4"/></svg>
<div style="left:1243px;top:1062px;width:351px;height:50px;background:#bcc7d9;border-top:1px solid #cbd5e5"></div>
<div style="left:1250px;top:1066px;width:337px;height:17px;background:#fbfbfb;border:1px solid #8892a8"></div>
<div class="t" style="left:1253px;top:1068px;">Object_list.aspx.vb</div>
<svg style="left:1577px;top:1073px;" width="5" height="3" viewBox="0 0 5 3"><path d="M0 0H5L2.5 3Z" fill="#000"/></svg>
<div style="left:1247px;top:1088px;width:22px;height:22px;background:#ffe8a6;border:1px solid #e5c365"></div>
<svg style="left:1250px;top:1091px;" width="16" height="16" viewBox="0 0 16 16"><rect x="0.5" y="0.5" width="5" height="5" fill="#fff" stroke="#4a5a7a"/><rect x="0.5" y="9.5" width="5" height="5" fill="#fff" stroke="#4a5a7a"/><path d="M1.5 3H4.5M3 1.5V4.5M1.5 12H4.5M3 10.5V13.5" stroke="#000" stroke-width="0.8"/><path d="M7 2H15M7 5H15M7 8H15M7 11H15M7 14H15" stroke="#4a70b0"/></svg>
<svg style="left:1272px;top:1091px;" width="14" height="17" viewBox="0 0 14 17"><text x="0" y="7" font-family="Liberation Serif" font-size="8" font-weight="bold" fill="#3a6ad0">A</text><text x="0" y="15" font-family="Liberation Serif" font-size="8" font-weight="bold" fill="#c03020">Z</text><path d="M10 0V14M7.5 11L10 15L12.5 11" stroke="#000" fill="none" stroke-width="1.2"/></svg>
<div style="left:1293px;top:1090px;width:1px;height:18px;background:#8d99b3"></div>
<svg style="left:1300px;top:1092px;" width="15" height="13" viewBox="0 0 15 13"><rect x="0.5" y="0.5" width="14" height="12" fill="#e0e2e6" stroke="#9a9ea6"/><path d="M3 5H6M3 8H12" stroke="#a0a4ac"/></svg>
<div style="left:1322px;top:1090px;width:1px;height:18px;background:#8d99b3"></div>
<svg style="left:1329px;top:1091px;" width="16" height="16" viewBox="0 0 16 16"><circle cx="9" cy="9" r="6.5" fill="#f0f4fa" stroke="#4a6ab0" stroke-width="1.2"/><path d="M9 9L12 6" stroke="#4a6ab0"/><path d="M1 8C1 3 5 1 8 2" stroke="#30a030" stroke-width="2" fill="none"/><path d="M0 5L3 9L5 5Z" fill="#30a030"/></svg>
<svg style="left:1350px;top:1091px;" width="16" height="17" viewBox="0 0 16 17"><path d="M5.5 1.5H11L14.5 5V15.5H5.5Z" fill="#fff" stroke="#4a5a7a"/><circle cx="6" cy="9" r="4.5" fill="#fff" stroke="#2a4ab0" stroke-width="1.5"/><path d="M6 6V9H8" stroke="#2a4ab0" fill="none"/></svg>
<div style="left:1243px;top:1112px;width:351px;height:13px;background:#e6e8ee"></div>
<div style="left:1243px;top:1112px;width:267px;height:13px;background:#e6e4da;border-right:1px solid #808080"></div>
<svg style="left:1248px;top:1113px;" width="10" height="11" viewBox="0 0 10 11"><rect x="0.5" y="0.5" width="9" height="10" fill="#fff" stroke="#000"/><path d="M2 5.5H8" stroke="#000" stroke-width="1.2"/></svg>
<div style="left:1243px;top:1112px;width:250px;height:13px;overflow:hidden">
<div class="t" style="left:23px;top:3px;font-weight:bold;font-size:12px">Misc</div>
</div>
<div style="left:1494px;top:1112px;width:15px;height:13px;background:#ebe9e0;border-top:1px solid #fff;border-left:1px solid #fff;border-right:1px solid #808080;border-bottom:1px solid #808080;box-shadow:inset -1px -1px 0 #c8c6bc"></div>
<svg style="left:1494px;top:1112px;" width="15" height="13" viewBox="0 0 15 13"><path d="M3.5 8.5H11.5L7.5 4.5Z" fill="#000"/></svg>
<svg style="left:1249px;top:1126px;" width="16" height="16" viewBox="0 0 16 16"><rect x="0.5" y="0.5" width="5" height="10" rx="2" fill="#f0c040" stroke="#a08020"/><rect x="7.5" y="1.5" width="7" height="5" fill="#fff" stroke="#3a6ad0"/><rect x="4" y="11" width="5" height="4" fill="#3a6ad0"/><rect x="10" y="11" width="5" height="4" fill="#3a6ad0"/></svg>
<div class="t" style="left:1267px;top:1128px;color:#fff">Schema View</div>
<svg style="left:1341px;top:1126px;" width="17" height="16" viewBox="0 0 17 16"><rect x="0.5" y="6.5" width="13" height="9" fill="#f0f4fa" stroke="#8a9ab8"/><path d="M2 10H12M2 13H12" stroke="#5a7ab0"/><path d="M4 7L10 1H16V6L11 8Z" fill="#f0c040"/><rect x="14" y="1" width="3" height="6" fill="#30a040"/></svg>
<div class="t" style="left:1360px;top:1128px;color:#fff">Properties</div>
<div style="left:1414px;top:1124px;width:106px;height:20px;background:#f8f9fb;border-radius:0 0 3px 3px"></div>
<svg style="left:1419px;top:1126px;" width="16" height="17" viewBox="0 0 16 17"><path d="M1.5 0.5H9L12.5 4V13.5H1.5Z" fill="#f0f4fa" stroke="#4a5a7a"/><path d="M3 4H9M3 7H6" stroke="#5a7ab0"/><circle cx="9" cy="10" r="3.5" fill="#e0f0ff" stroke="#505a6a" stroke-width="1.2"/><path d="M11.5 12.5L14.5 15.5" stroke="#e09020" stroke-width="2"/></svg>
<div class="t" style="left:1438px;top:1128px;">Subversion Info</div>
<div class="t" style="left:3px;top:1156px;color:#fff">Ready</div>
<div style="left:0px;top:1171px;width:1600px;height:5px;background:linear-gradient(#f4f3ee 0,#f4f3ee 1px,#d6d3c6 1px)"></div></body></html>
